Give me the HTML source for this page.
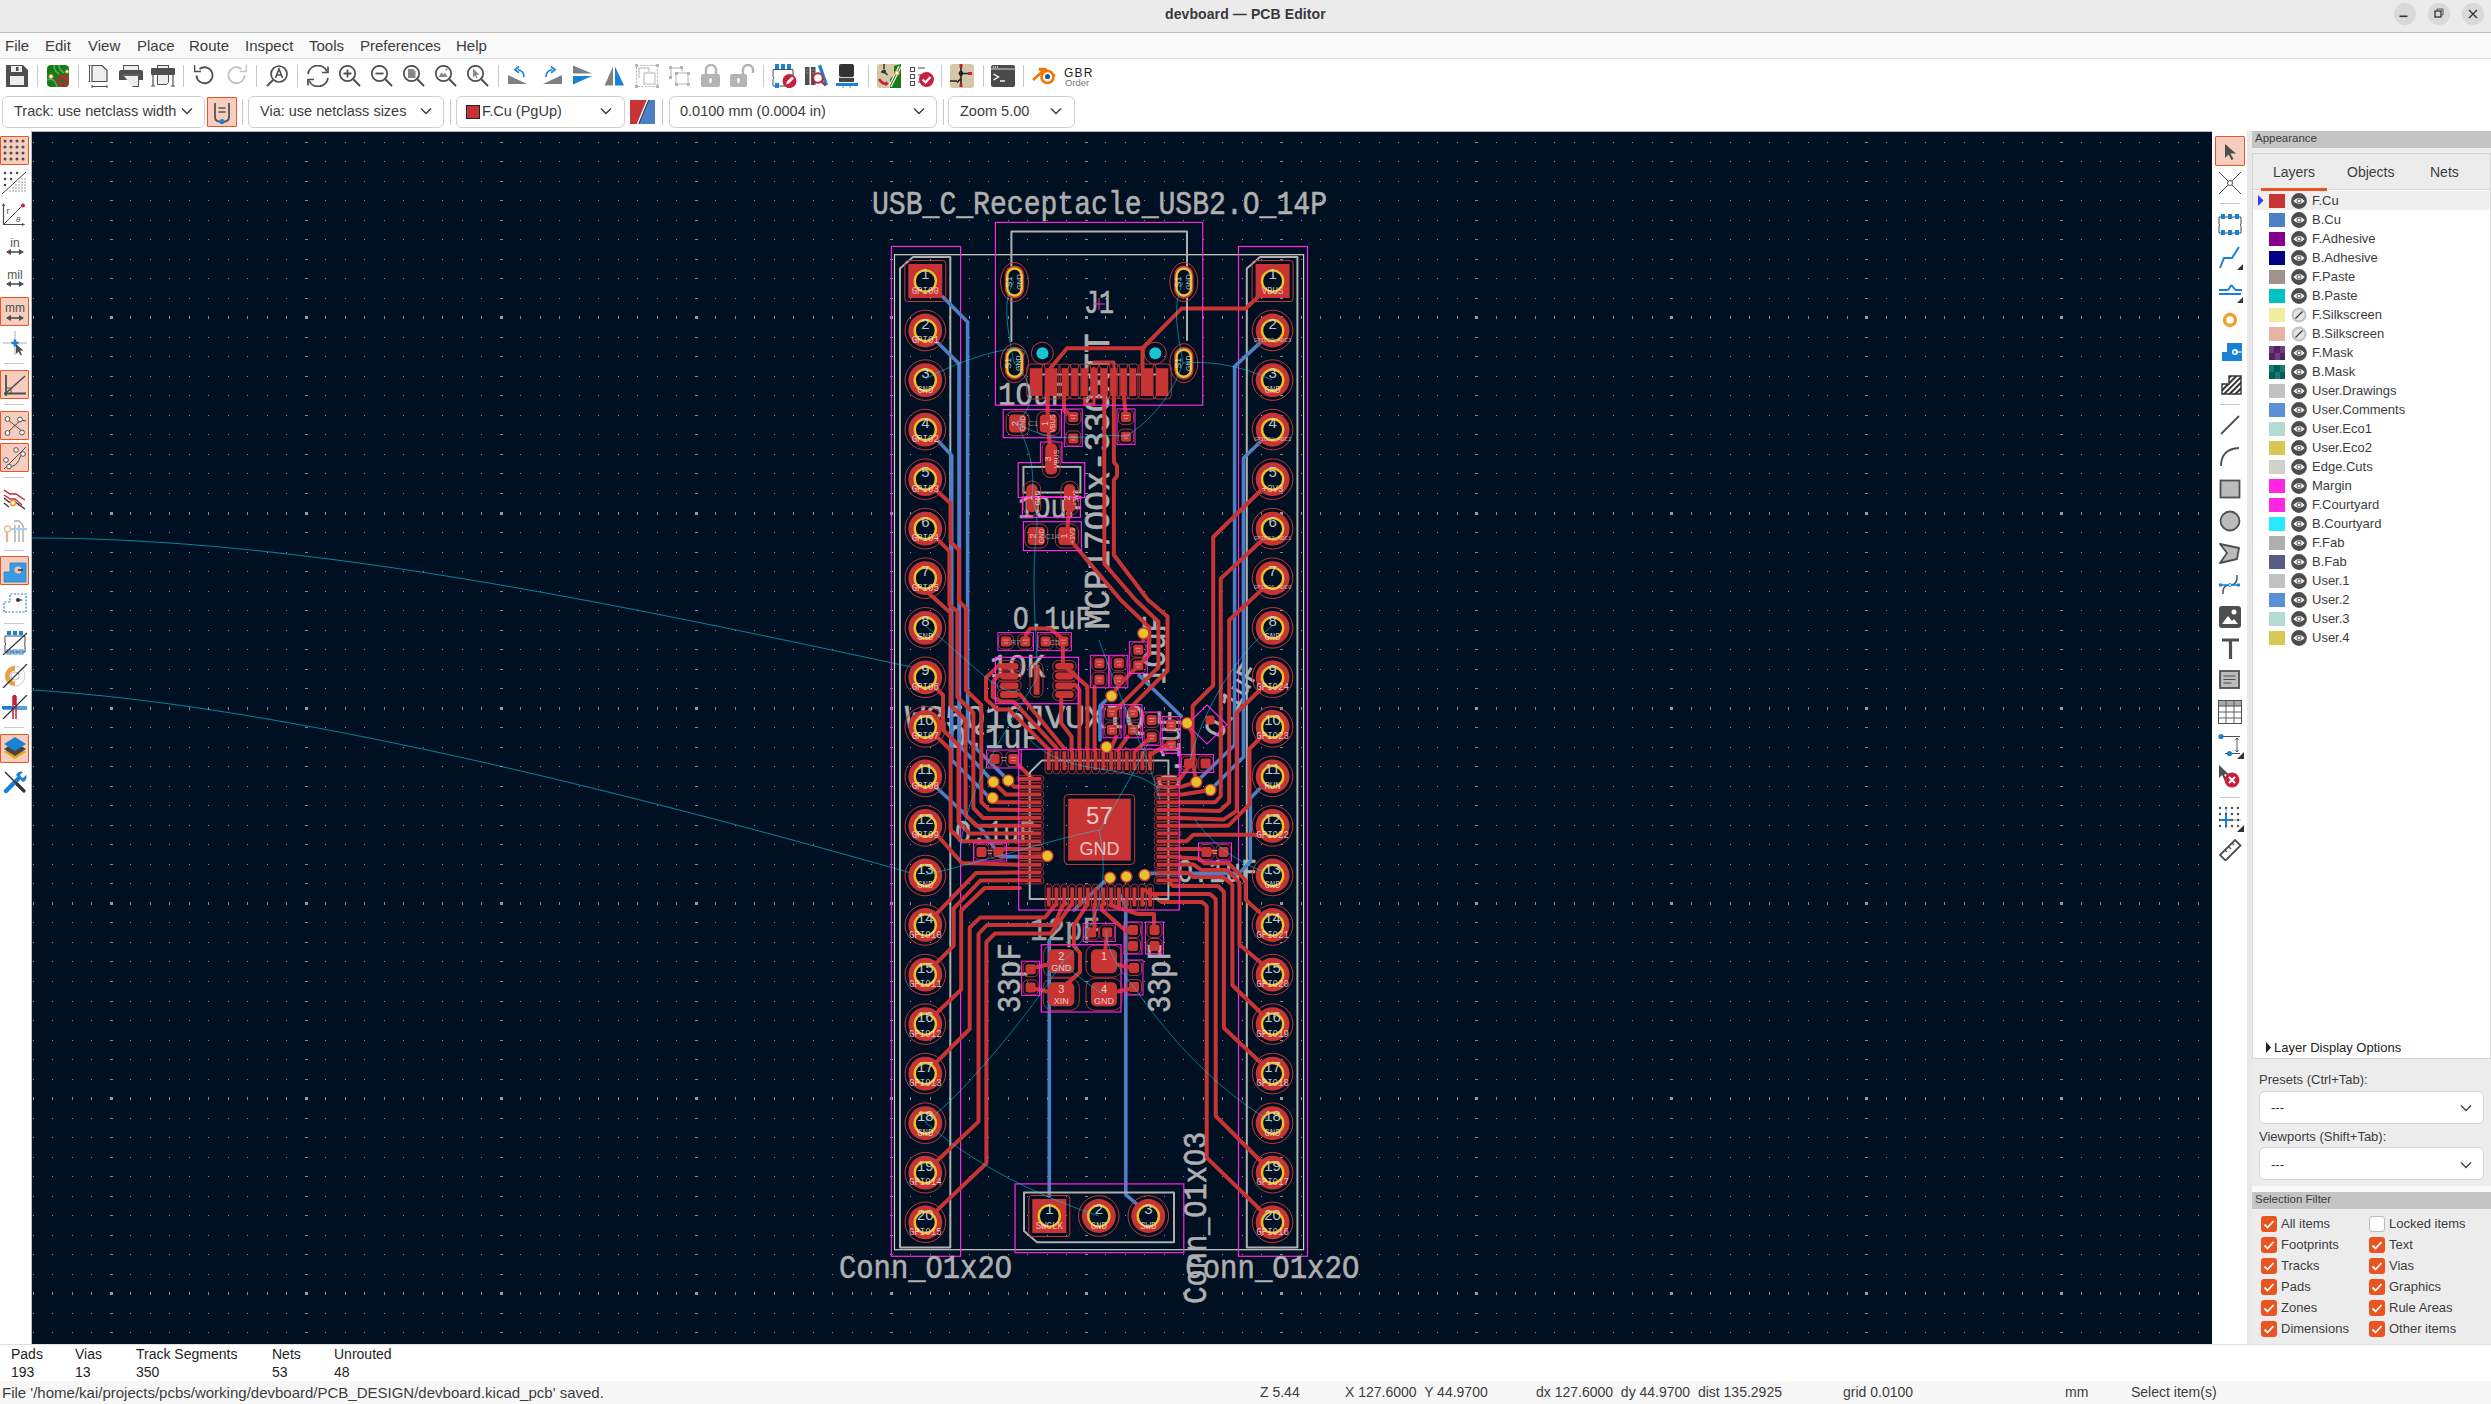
<!DOCTYPE html>
<html><head><meta charset="utf-8">
<style>
*{margin:0;padding:0;box-sizing:border-box}
html,body{width:2491px;height:1404px;overflow:hidden;background:#fafafa;font-family:"Liberation Sans",sans-serif;color:#3c3c3c}
.a{position:absolute}
.t{position:absolute;white-space:nowrap;line-height:1}
#titlebar{left:0;top:0;width:2491px;height:33px;background:#ebebeb;border-bottom:1px solid #bdbdbd}
#menubar{left:0;top:33px;width:2491px;height:25px;background:#f9f9f9}
.menu{font-size:15px;top:38px;color:#3c3c3c}
#tb1{left:0;top:58px;width:2491px;height:73px;background:#ffffff;border-top:1px solid #e0e0e0}
.sep{position:absolute;width:1px;background:#c8c8c8}
.combo{position:absolute;top:96px;height:32px;background:#fff;border:1px solid #cfcfcf;border-radius:6px}
.ctext{position:absolute;font-size:14.5px;top:104px;color:#3c3c3c;white-space:nowrap;line-height:1}
.chev{position:absolute;top:107px}
#canvas{left:32px;top:131px;width:2180px;height:1213px;background:#001023;border-top:1px solid #b8b8b8}
#ltb{left:0;top:131px;width:32px;height:1213px;background:#ffffff;border-right:1px solid #bdbdbd}
#rtb{left:2212px;top:131px;width:35px;height:1213px;background:#ffffff}
#rgap{left:2247px;top:131px;width:5px;height:1213px;background:#e8e8e8}
#panel{left:2252px;top:131px;width:239px;height:1213px;background:#fafafa}
#msgp{left:0;top:1344px;width:2491px;height:37px;background:#ffffff;border-top:1px solid #e0e0e0}
#status{left:0;top:1381px;width:2491px;height:23px;background:#f7f7f7}
.hl{position:absolute;background:#f6cdbf;border:1px solid #e95420;border-radius:1px}
.lyr{position:absolute;left:2312px;font-size:13px;color:#3c3c3c;white-space:nowrap;line-height:1}
.sw{position:absolute;left:2269px;width:16px;height:13px}
.eye{position:absolute;left:2291px;width:15px;height:15px}
.cb{position:absolute;width:16px;height:16px;border-radius:3px;background:#e95420}
.cbl{position:absolute;font-size:13px;color:#3c3c3c;white-space:nowrap;line-height:1}
.st{position:absolute;font-size:14px;top:1385px;color:#3c3c3c;white-space:nowrap;line-height:1}
.mp{position:absolute;font-size:14px;color:#1e1e1e;white-space:nowrap;line-height:1}
</style></head><body>
<!-- title bar -->
<div id="titlebar" class="a"></div>
<div class="t" style="left:1165px;top:7px;font-size:14px;font-weight:bold;color:#383838;letter-spacing:0.1px">devboard — PCB Editor</div>
<svg class="a" style="left:2380px;top:0" width="111" height="32">
 <circle cx="25" cy="14" r="11" fill="#d9d9d9"/><rect x="19.5" y="15.5" width="8" height="1.6" fill="#333"/>
 <circle cx="59" cy="14" r="11" fill="#d9d9d9"/><rect x="55" y="11" width="6" height="6" fill="none" stroke="#333" stroke-width="1.3"/><path d="M57 10V9h6v6h-1" fill="none" stroke="#333" stroke-width="0.8"/>
 <circle cx="93" cy="14" r="11" fill="#d9d9d9"/><path d="M89 10l8 8M97 10l-8 8" stroke="#333" stroke-width="1.4"/>
</svg>
<!-- menubar -->
<div id="menubar" class="a"></div>
<div class="t menu" style="left:5px">File</div>
<div class="t menu" style="left:45px">Edit</div>
<div class="t menu" style="left:88px">View</div>
<div class="t menu" style="left:137px">Place</div>
<div class="t menu" style="left:189px">Route</div>
<div class="t menu" style="left:245px">Inspect</div>
<div class="t menu" style="left:309px">Tools</div>
<div class="t menu" style="left:360px">Preferences</div>
<div class="t menu" style="left:456px">Help</div>
<!-- toolbars -->
<div id="tb1" class="a"></div>
<svg class="a" style="left:6px;top:65px" width="22" height="22" viewBox="0 0 22 22"><path d="M0 0h17l5 5v17H0z" fill="#4f4f4f"/><rect x="5" y="1" width="11" height="6" fill="#eee"/><rect x="10" y="2" width="2.5" height="4" fill="#4f4f4f"/><rect x="4" y="11" width="14" height="9" fill="#eee"/></svg>
<div class="sep" style="left:37px;top:65px;height:22px"></div>
<svg class="a" style="left:47px;top:65px" width="22" height="22" viewBox="0 0 22 22"><rect x="0" y="0" width="22" height="22" rx="4" fill="#1a7a1a"/><path d="M7 0q0 6 5 9M12 0q0 5 5 8" stroke="#4caf50" stroke-width="1.6" fill="none"/><path d="M0 15q8-3 10 7" stroke="#4caf50" stroke-width="1.5" fill="none"/><circle cx="4" cy="11.5" r="2" fill="#fff" stroke="#f0a030"/><circle cx="20" cy="6.5" r="1.6" fill="#fff" stroke="#f0a030"/><circle cx="16" cy="16" r="5" fill="none" stroke="#c8203a" stroke-width="3.6" stroke-dasharray="2.2 1.7"/><circle cx="16" cy="16" r="3.6" fill="none" stroke="#c8203a" stroke-width="2"/></svg>
<div class="sep" style="left:78px;top:65px;height:22px"></div>
<svg class="a" style="left:88px;top:65px" width="20" height="23" viewBox="0 0 20 23"><path d="M4 0.5h10l5 5V16.5H4z" fill="#eee" stroke="#4f4f4f" stroke-width="1.2"/><path d="M0.5 0.5h2M1.5 0.5v16M0.5 16.5h2M4 21.5h15M4 20v3M19 20v3" stroke="#4f4f4f" stroke-width="1"/></svg>
<svg class="a" style="left:119px;top:65px" width="24" height="22" viewBox="0 0 24 22"><rect x="4.5" y="0.5" width="15" height="6" fill="#eee" stroke="#4f4f4f"/><path d="M0 7q0-2 2-2h20q2 0 2 2v8H0z" fill="#4f4f4f"/><path d="M4.5 10.5h15v11H16l-2.5 0" fill="#eee" stroke="#4f4f4f"/><path d="M3 10h18" stroke="#888" stroke-width="0.6"/></svg>
<svg class="a" style="left:151px;top:65px" width="24" height="22" viewBox="0 0 24 22"><rect x="6.5" y="0.5" width="11" height="3" fill="#eee" stroke="#4f4f4f"/><rect x="0" y="3" width="24" height="7" rx="1" fill="#4f4f4f"/><path d="M6.5 9.5h11v8l-2 2h-9z" fill="#eee" stroke="#4f4f4f"/><path d="M2 8v13M22 8v13M0 21h4M20 21h4" stroke="#4f4f4f" stroke-width="1.2"/></svg>
<div class="sep" style="left:183px;top:65px;height:22px"></div>
<svg class="a" style="left:194px;top:65px" width="20" height="22" viewBox="0 0 20 22"><path d="M2.5 10.5A8 8 0 1 0 5.5 4" fill="none" stroke="#4f4f4f" stroke-width="1.8"/><path d="M0.5 0v6.5h6.5" fill="none" stroke="#4f4f4f" stroke-width="1.6"/></svg>
<svg class="a" style="left:227px;top:65px" width="20" height="22" viewBox="0 0 20 22"><path d="M17.5 10.5A8 8 0 1 1 14.5 4" fill="none" stroke="#c2c2c2" stroke-width="1.8"/><path d="M19.5 0v6.5H13" fill="none" stroke="#c2c2c2" stroke-width="1.6"/></svg>
<div class="sep" style="left:256px;top:65px;height:22px"></div>
<svg class="a" style="left:266px;top:65px" width="22" height="22" viewBox="0 0 22 22"><circle cx="13" cy="9" r="8" fill="none" stroke="#4f4f4f" stroke-width="1.7"/><path d="M7 15L1 21" stroke="#4f4f4f" stroke-width="2"/><path d="M9.5 13L13 4l3.5 9M10.7 10h4.6" fill="none" stroke="#4f4f4f" stroke-width="1.6"/></svg>
<div class="sep" style="left:297px;top:65px;height:22px"></div>
<svg class="a" style="left:307px;top:65px" width="22" height="22" viewBox="0 0 22 22"><path d="M1 9A10 10 0 0 1 20 6.5M21 13A10 10 0 0 1 2 15.5" fill="none" stroke="#4f4f4f" stroke-width="1.8"/><path d="M21 1.5v6h-6M1 20.5v-6h6" fill="none" stroke="#4f4f4f" stroke-width="1.7"/></svg>
<svg class="a" style="left:339px;top:65px" width="22" height="22" viewBox="0 0 22 22"><circle cx="8.5" cy="8.5" r="7.7" fill="none" stroke="#4f4f4f" stroke-width="1.7"/><path d="M14 14l7 7" stroke="#4f4f4f" stroke-width="2"/><path d="M8.5 4.5v8M4.5 8.5h8" stroke="#4f4f4f" stroke-width="1.8"/></svg>
<svg class="a" style="left:371px;top:65px" width="22" height="22" viewBox="0 0 22 22"><circle cx="8.5" cy="8.5" r="7.7" fill="none" stroke="#4f4f4f" stroke-width="1.7"/><path d="M14 14l7 7" stroke="#4f4f4f" stroke-width="2"/><path d="M4.5 8.5h8" stroke="#4f4f4f" stroke-width="1.8"/></svg>
<svg class="a" style="left:403px;top:65px" width="22" height="22" viewBox="0 0 22 22"><circle cx="8.5" cy="8.5" r="7.7" fill="none" stroke="#4f4f4f" stroke-width="1.7"/><path d="M14 14l7 7" stroke="#4f4f4f" stroke-width="2"/><path d="M5 4h5l2.5 2.5V13H5z" fill="#888"/></svg>
<svg class="a" style="left:435px;top:65px" width="22" height="22" viewBox="0 0 22 22"><circle cx="8.5" cy="8.5" r="7.7" fill="none" stroke="#4f4f4f" stroke-width="1.7"/><path d="M14 14l7 7" stroke="#4f4f4f" stroke-width="2"/><path d="M3.5 12l3-4.5 2 2 1.5-2 2.5 4.5z" fill="#888"/><circle cx="11.5" cy="4.5" r="1" fill="#888"/></svg>
<svg class="a" style="left:467px;top:65px" width="22" height="22" viewBox="0 0 22 22"><circle cx="8.5" cy="8.5" r="7.7" fill="none" stroke="#4f4f4f" stroke-width="1.7"/><path d="M14 14l7 7" stroke="#4f4f4f" stroke-width="2"/><path d="M6 3.5v9l2-2 1.5 3 1.2-.6-1.5-3 3-.3z" fill="#888"/></svg>
<div class="sep" style="left:498px;top:65px;height:22px"></div>
<svg class="a" style="left:508px;top:66px" width="21" height="20" viewBox="0 0 21 20"><path d="M0 9l19 9H0z" fill="#808080"/><path d="M16 11q0-6-6-7.5" fill="none" stroke="#1a82d4" stroke-width="1.7"/><path d="M11 0.5L7 3.8l4 3" fill="none" stroke="#1a82d4" stroke-width="1.7"/></svg>
<svg class="a" style="left:541px;top:66px" width="21" height="20" viewBox="0 0 21 20"><path d="M21 9L2 18h19z" fill="#808080"/><path d="M5 11q0-6 6-7.5" fill="none" stroke="#1a82d4" stroke-width="1.7"/><path d="M10 0.5L14 3.8l-4 3" fill="none" stroke="#1a82d4" stroke-width="1.7"/></svg>
<svg class="a" style="left:573px;top:65px" width="20" height="20" viewBox="0 0 20 20"><path d="M0 0.5l19 8H0z" fill="#808080"/><path d="M0 11h19L0 19.5z" fill="#1a82d4"/></svg>
<svg class="a" style="left:604px;top:66px" width="21" height="20" viewBox="0 0 21 20"><path d="M9 0.5v19H0.5z" fill="#808080"/><path d="M11 0.5v19h9z" fill="#1a82d4"/></svg>
<svg class="a" style="left:635px;top:64px" width="24" height="24" viewBox="0 0 24 24"><rect x="1.5" y="1.5" width="21" height="21" fill="none" stroke="#b4b4b4" stroke-dasharray="2 1.5"/><rect x="0" y="0" width="3" height="3" fill="#b4b4b4"/><rect x="21" y="0" width="3" height="3" fill="#b4b4b4"/><rect x="0" y="21" width="3" height="3" fill="#b4b4b4"/><rect x="21" y="21" width="3" height="3" fill="#b4b4b4"/><path d="M4 14V4h10v4" fill="none" stroke="#b4b4b4" stroke-width="1"/><rect x="9" y="9" width="11" height="11" fill="none" stroke="#b4b4b4"/></svg>
<svg class="a" style="left:669px;top:66px" width="21" height="20" viewBox="0 0 21 20"><path d="M2 11V2h11v3" fill="none" stroke="#b4b4b4"/><rect x="7" y="7" width="12" height="11" fill="none" stroke="#b4b4b4"/><rect x="0" y="0" width="3" height="3" fill="#b4b4b4"/><rect x="11" y="0" width="3" height="3" fill="#b4b4b4"/><rect x="0" y="10" width="3" height="3" fill="#b4b4b4"/><rect x="6" y="6" width="3" height="3" fill="#b4b4b4"/><rect x="18" y="6" width="3" height="3" fill="#b4b4b4"/><rect x="6" y="17" width="3" height="3" fill="#b4b4b4"/><rect x="18" y="17" width="3" height="3" fill="#b4b4b4"/></svg>
<svg class="a" style="left:701px;top:64px" width="20" height="24" viewBox="0 0 20 24"><path d="M5 10V6a5 5 0 0 1 10 0v4" fill="none" stroke="#b4b4b4" stroke-width="2.4"/><rect x="0" y="10" width="19" height="13" rx="2" fill="#b4b4b4"/><path d="M9.5 19v-3" stroke="#fff" stroke-width="2"/><circle cx="9.5" cy="15.5" r="1.5" fill="#fff"/></svg>
<svg class="a" style="left:730px;top:64px" width="25" height="24" viewBox="0 0 25 24"><path d="M13 10V6a5 5 0 0 1 10 0v3" fill="none" stroke="#b4b4b4" stroke-width="2.4"/><rect x="0" y="10" width="17" height="13" rx="2" fill="#b4b4b4"/><path d="M8.5 19v-3" stroke="#fff" stroke-width="2"/><circle cx="8.5" cy="15.5" r="1.5" fill="#fff"/></svg>
<div class="sep" style="left:763px;top:65px;height:22px"></div>
<svg class="a" style="left:772px;top:64px" width="25" height="24" viewBox="0 0 25 24"><path d="M1 5.5h20V13q-1 1 0 2v7H1v-6.5q2-1.5 0-3z" fill="none" stroke="#4f4f4f" stroke-width="1"/><rect x="3" y="0" width="4" height="5" fill="#1a82d4"/><rect x="9" y="0" width="4" height="5" fill="#1a82d4"/><rect x="15" y="0" width="4" height="5" fill="#1a82d4"/><rect x="3" y="19" width="4" height="5" fill="#1a82d4"/><rect x="15" y="19" width="4" height="5" fill="#1a82d4"/><circle cx="17.5" cy="17" r="7" fill="#c8203a"/><path d="M14 20.5l1-3 5-5 2 2-5 5z" fill="#fff"/></svg>
<svg class="a" style="left:805px;top:64px" width="24" height="24" viewBox="0 0 24 24"><rect x="0" y="3" width="4.5" height="18" fill="#4f4f4f"/><rect x="6" y="3" width="4.5" height="18" fill="#4f4f4f"/><path d="M1 6h2.5M1 9h2.5M7 6h2.5M7 9h2.5" stroke="#bbb" stroke-width="0.6"/><path d="M13 2l3-1.5 7 20-3 1.5z" fill="#1a82d4"/><circle cx="13" cy="14" r="4.8" fill="#fff" stroke="#c8203a" stroke-width="2"/><path d="M16.5 17.5l4 4" stroke="#c8203a" stroke-width="2.4"/></svg>
<svg class="a" style="left:836px;top:64px" width="24" height="24" viewBox="0 0 24 24"><rect x="3" y="0" width="15" height="13" rx="2" fill="#333"/><rect x="3" y="14" width="15" height="4" fill="#444"/><path d="M3 13.6h15" stroke="#aaa" stroke-width="0.6"/><rect x="0" y="19" width="22" height="3" fill="#1a82d4"/><path d="M7 22v2M14 22v2" stroke="#888"/></svg>
<div class="sep" style="left:868px;top:65px;height:22px"></div>
<svg class="a" style="left:877px;top:64px" width="24" height="24" viewBox="0 0 24 24"><rect x="0" y="0" width="24" height="24" rx="3" fill="#d4c8a8"/><path d="M13 24V15l4-4V2l7-2v24z" fill="#1a7a1a"/><path d="M12 22L22 2M14 23L24 3" stroke="#fff" stroke-width="1.2"/><circle cx="20" cy="9" r="2" fill="#fff" stroke="#f0a030" stroke-width="1.2"/><path d="M7 0v5M4 8h3.5l3 3" stroke="#333" stroke-width="1.5" fill="none"/><circle cx="7" cy="7.5" r="2" fill="#333"/><path d="M2 15q3 5 8 5" stroke="#c8203a" stroke-width="2.6" fill="none"/><path d="M9 17l3 3-4 2" fill="#c8203a"/></svg>
<svg class="a" style="left:910px;top:64px" width="24" height="24" viewBox="0 0 24 24"><rect x="0.5" y="3.5" width="4" height="4" fill="none" stroke="#4f4f4f"/><rect x="0.5" y="10.5" width="4" height="4" fill="none" stroke="#4f4f4f"/><rect x="0.5" y="17.5" width="4" height="4" fill="none" stroke="#4f4f4f"/><path d="M8 4h7M8 11h3M8 18h3" stroke="#4f4f4f"/><circle cx="16.5" cy="15.5" r="7.5" fill="#c8203a"/><path d="M12.5 15.5l3 3 5-5.5" fill="none" stroke="#fff" stroke-width="2.2"/></svg>
<div class="sep" style="left:941px;top:65px;height:22px"></div>
<svg class="a" style="left:950px;top:64px" width="24" height="24" viewBox="0 0 24 24"><rect x="0" y="0" width="24" height="24" rx="3" fill="#d4c8a8"/><path d="M11 3v18M11 9.5h7M11 14.5l-4 4M0 17h7" stroke="#222" stroke-width="1.6"/><circle cx="11" cy="9.5" r="2.4" fill="#222"/><rect x="9.5" y="0" width="3" height="3.5" fill="#c8203a"/><rect x="18" y="8" width="4" height="3" fill="#c8203a"/><rect x="9.5" y="20" width="3" height="3" fill="#c8203a"/></svg>
<div class="sep" style="left:983px;top:65px;height:22px"></div>
<svg class="a" style="left:991px;top:65px" width="24" height="22" viewBox="0 0 24 22"><rect x="0" y="0" width="24" height="22" rx="2" fill="#4a4a4a"/><path d="M0 4h24" stroke="#fafafa" stroke-width="0.8"/><circle cx="2.5" cy="2" r=".7" fill="#fff"/><circle cx="4.5" cy="2" r=".7" fill="#fff"/><circle cx="6.5" cy="2" r=".7" fill="#fff"/><path d="M2.5 9l5 3-5 3" fill="none" stroke="#fff" stroke-width="1.4"/><path d="M9 16h5" stroke="#fff" stroke-width="1.4"/></svg>
<div class="sep" style="left:1023px;top:65px;height:22px"></div>
<svg class="a" style="left:1032px;top:66px" width="25" height="20" viewBox="0 0 25 20"><path d="M1 14L11 5 7 3h6l10 7" fill="none" stroke="#f07800" stroke-width="2.6"/><circle cx="15.5" cy="11" r="6" fill="#fff" stroke="#f07800" stroke-width="2.6"/><circle cx="15.5" cy="10.5" r="2.6" fill="#265787"/></svg>
<div class="t" style="left:1064px;top:67px;font-size:12px;color:#222;letter-spacing:1.2px">GBR</div>
<div class="t" style="left:1065px;top:78px;font-size:9.5px;color:#777">Order</div>

<div class="combo" style="left:2px;width:203px"></div>
<div class="ctext" style="left:14px">Track: use netclass width</div><svg class="chev" style="left:181px" width="12" height="8"><path d="M1 1.5l5 5 5-5" fill="none" stroke="#3c3c3c" stroke-width="1.4"/></svg>
<div class="hl" style="left:207px;top:97px;width:30px;height:30px"></div>
<svg class="a" style="left:207px;top:97px" width="30" height="30"><path d="M8 6v14q0 5 7 5t7-5V6" fill="none" stroke="#555" stroke-width="1.8"/><path d="M11.5 11h7M11.5 15h7" stroke="#555" stroke-width="1.5"/><circle cx="15" cy="24.5" r="2.6" fill="#1a82d4"/></svg>
<div class="sep" style="left:242px;top:99px;height:26px"></div>
<div class="combo" style="left:248px;width:196px"></div>
<div class="ctext" style="left:260px">Via: use netclass sizes</div><svg class="chev" style="left:420px" width="12" height="8"><path d="M1 1.5l5 5 5-5" fill="none" stroke="#3c3c3c" stroke-width="1.4"/></svg>
<div class="sep" style="left:450px;top:99px;height:26px"></div>
<div class="combo" style="left:456px;width:169px"></div>
<div class="a" style="left:466px;top:105px;width:14px;height:14px;background:#c83434;border:1px solid #222"></div>
<div class="ctext" style="left:482px">F.Cu (PgUp)</div><svg class="chev" style="left:600px" width="12" height="8"><path d="M1 1.5l5 5 5-5" fill="none" stroke="#3c3c3c" stroke-width="1.4"/></svg>
<svg class="a" style="left:630px;top:100px" width="25" height="24"><path d="M0 0h17L7 24H0z" fill="#c83434"/><path d="M18 0h7v24H8z" fill="#4d7fc4"/><path d="M17.5 0L7.5 24" stroke="#fff" stroke-width="1.2"/><path d="M18.8 0L8.8 24" stroke="#222" stroke-width="0.8"/></svg>
<div class="sep" style="left:662px;top:99px;height:26px"></div>
<div class="combo" style="left:669px;width:268px"></div>
<div class="ctext" style="left:680px">0.0100 mm (0.0004 in)</div><svg class="chev" style="left:913px" width="12" height="8"><path d="M1 1.5l5 5 5-5" fill="none" stroke="#3c3c3c" stroke-width="1.4"/></svg>
<div class="sep" style="left:943px;top:99px;height:26px"></div>
<div class="combo" style="left:948px;width:127px"></div>
<div class="ctext" style="left:960px">Zoom 5.00</div><svg class="chev" style="left:1050px" width="12" height="8"><path d="M1 1.5l5 5 5-5" fill="none" stroke="#3c3c3c" stroke-width="1.4"/></svg>

<!-- left toolbar -->
<div id="ltb" class="a"></div>
<div class="hl" style="left:0px;top:136px;width:29px;height:29px"></div>
<svg class="a" style="left:3px;top:139px" width="24" height="24" viewBox="0 0 24 24"><circle cx="2" cy="2" r="1.5" fill="#4f4f4f"/><circle cx="2" cy="8" r="1.5" fill="#4f4f4f"/><circle cx="2" cy="14" r="1.5" fill="#4f4f4f"/><circle cx="2" cy="20" r="1.5" fill="#4f4f4f"/><circle cx="8" cy="2" r="1.5" fill="#4f4f4f"/><circle cx="8" cy="8" r="1.5" fill="#4f4f4f"/><circle cx="8" cy="14" r="1.5" fill="#4f4f4f"/><circle cx="8" cy="20" r="1.5" fill="#4f4f4f"/><circle cx="14" cy="2" r="1.5" fill="#4f4f4f"/><circle cx="14" cy="8" r="1.5" fill="#4f4f4f"/><circle cx="14" cy="14" r="1.5" fill="#4f4f4f"/><circle cx="14" cy="20" r="1.5" fill="#4f4f4f"/><circle cx="20" cy="2" r="1.5" fill="#4f4f4f"/><circle cx="20" cy="8" r="1.5" fill="#4f4f4f"/><circle cx="20" cy="14" r="1.5" fill="#4f4f4f"/><circle cx="20" cy="20" r="1.5" fill="#4f4f4f"/></svg>
<svg class="a" style="left:2px;top:171px" width="24" height="24" viewBox="0 0 24 24"><path d="M0 23L24 1" stroke="#444" stroke-width="1"/><circle cx="3" cy="2" r="1.3" fill="#4f4f4f"/><circle cx="9" cy="2" r="1.3" fill="#4f4f4f"/><circle cx="15" cy="2" r="1.3" fill="#4f4f4f"/><circle cx="3" cy="8" r="1.3" fill="#4f4f4f"/><circle cx="9" cy="8" r="1.3" fill="#4f4f4f"/><circle cx="3" cy="14" r="1.3" fill="#444"/><circle cx="8" cy="20" r="0.7" fill="#777"/><circle cx="11" cy="17" r="0.7" fill="#777"/><circle cx="11" cy="20" r="0.7" fill="#777"/><circle cx="14" cy="14" r="0.7" fill="#777"/><circle cx="14" cy="17" r="0.7" fill="#777"/><circle cx="14" cy="20" r="0.7" fill="#777"/><circle cx="17" cy="11" r="0.7" fill="#777"/><circle cx="17" cy="14" r="0.7" fill="#777"/><circle cx="17" cy="17" r="0.7" fill="#777"/><circle cx="17" cy="20" r="0.7" fill="#777"/><circle cx="20" cy="8" r="0.7" fill="#777"/><circle cx="20" cy="11" r="0.7" fill="#777"/><circle cx="20" cy="14" r="0.7" fill="#777"/><circle cx="20" cy="17" r="0.7" fill="#777"/><circle cx="20" cy="20" r="0.7" fill="#777"/><circle cx="23" cy="8" r="0.7" fill="#777"/><circle cx="23" cy="11" r="0.7" fill="#777"/><circle cx="23" cy="14" r="0.7" fill="#777"/><circle cx="23" cy="17" r="0.7" fill="#777"/><circle cx="23" cy="20" r="0.7" fill="#777"/></svg>
<svg class="a" style="left:2px;top:203px" width="24" height="23" viewBox="0 0 24 23"><path d="M1.5 1v20.5h21" fill="none" stroke="#4f4f4f" stroke-width="1.2"/><path d="M0 3l1.5-3 1.5 3M20 20l3 1.5-3 1.5" fill="#4f4f4f"/><path d="M2 21L20 3" stroke="#4f4f4f" stroke-width="1"/><circle cx="21" cy="2.5" r="2" fill="#c8203a"/><text x="4.5" y="11" font-size="9" fill="#4f4f4f" font-family="Liberation Sans">r</text><text x="14" y="19" font-size="8" font-style="italic" fill="#4f4f4f" font-family="Liberation Sans">θ</text></svg>
<svg class="a" style="left:3px;top:237px" width="24" height="20" viewBox="0 0 24 20"><text x="12" y="10" font-size="12" text-anchor="middle" fill="#4f4f4f" font-family="Liberation Sans">in</text><path d="M4 15h16" stroke="#4f4f4f" stroke-width="1.6"/><path d="M3 15l5-3v6zM21 15l-5-3v6z" fill="#4f4f4f"/></svg>
<svg class="a" style="left:3px;top:269px" width="24" height="20" viewBox="0 0 24 20"><text x="12" y="10" font-size="12" text-anchor="middle" fill="#4f4f4f" font-family="Liberation Sans">mil</text><path d="M4 15h16" stroke="#4f4f4f" stroke-width="1.6"/><path d="M3 15l5-3v6zM21 15l-5-3v6z" fill="#4f4f4f"/></svg>
<div class="hl" style="left:0px;top:297px;width:29px;height:29px"></div>
<svg class="a" style="left:3px;top:300px" width="24" height="24" viewBox="0 0 24 24"><text x="12" y="12" font-size="12" text-anchor="middle" fill="#4f4f4f" font-family="Liberation Sans">mm</text><path d="M4 18h16" stroke="#4f4f4f" stroke-width="1.6"/><path d="M3 18l5-3v6zM21 18l-5-3v6z" fill="#4f4f4f"/></svg>
<svg class="a" style="left:3px;top:331px" width="24" height="24" viewBox="0 0 24 24"><path d="M12 0v24M0 12h24" stroke="#999" stroke-width="0.8"/><path d="M8.5 12h7M12 8.5v7" stroke="#1a82d4" stroke-width="2.6"/><path d="M13 13l0 10 2.5-2.5 2 4 1.5-.8-2-4 3.5-.2z" fill="#4f4f4f"/></svg>
<div class="a" style="left:4px;top:363px;width:20px;height:1px;background:#c8c8c8"></div>
<div class="hl" style="left:0px;top:370px;width:29px;height:29px"></div>
<svg class="a" style="left:3px;top:373px" width="24" height="24" viewBox="0 0 24 24"><path d="M3 2v21M1 20.5h22" stroke="#4f4f4f" stroke-width="1.8"/><path d="M3 20L22 3" stroke="#4f4f4f" stroke-width="1.6"/><path d="M3 15h5v6" fill="none" stroke="#4f4f4f" stroke-width="1"/></svg>
<div class="a" style="left:4px;top:404px;width:20px;height:1px;background:#c8c8c8"></div>
<div class="hl" style="left:0px;top:411px;width:29px;height:29px"></div>
<svg class="a" style="left:3px;top:414px" width="24" height="24" viewBox="0 0 24 24"><path d="M4 5L20 18M4 19L18 6M18 6l5 1" stroke="#4f4f4f" stroke-width="1"/><circle cx="4.5" cy="5" r="2.4" fill="#fff" stroke="#4f4f4f"/><circle cx="17" cy="5.5" r="2.4" fill="#fff" stroke="#4f4f4f"/><circle cx="4.5" cy="19" r="2.4" fill="#fff" stroke="#4f4f4f"/><circle cx="19" cy="18.5" r="2.4" fill="#fff" stroke="#4f4f4f"/></svg>
<div class="hl" style="left:0px;top:443px;width:29px;height:29px"></div>
<svg class="a" style="left:3px;top:446px" width="24" height="24" viewBox="0 0 24 24"><path d="M1 23L23 1" stroke="#4f4f4f" stroke-width="1"/><path d="M4 20q10 3 14-11" fill="none" stroke="#4f4f4f" stroke-width="1"/><circle cx="3" cy="14" r="2.3" fill="#fff" stroke="#4f4f4f"/><circle cx="13" cy="4" r="2.3" fill="#fff" stroke="#4f4f4f"/><circle cx="6" cy="20.5" r="2.3" fill="#fff" stroke="#4f4f4f"/><circle cx="20" cy="8" r="2.3" fill="#fff" stroke="#4f4f4f"/></svg>
<div class="a" style="left:4px;top:477px;width:20px;height:1px;background:#c8c8c8"></div>
<svg class="a" style="left:3px;top:486px" width="24" height="24" viewBox="0 0 24 24"><path d="M1 4l6 4h6l9 6M1 9l6 4h5l7 6" fill="none" stroke="#c8203a" stroke-width="1.4"/><path d="M1 12l5 4h6l10 7M1 17l5 4" fill="none" stroke="#333" stroke-width="1.4"/><circle cx="10" cy="17" r="2.6" fill="#fff" stroke="#f0a030" stroke-width="1.6"/></svg>
<svg class="a" style="left:3px;top:518px" width="24" height="24" viewBox="0 0 24 24"><path d="M11 3h5l4 4v17M14 3h2" fill="none" stroke="#aaa" stroke-width="1.4"/><path d="M16 7v17M12 7v17" stroke="#aaa" stroke-width="1.4"/><path d="M7 11h17" stroke="#a8cef0" stroke-width="2.2"/><path d="M4 14v10" stroke="#f0a8b0" stroke-width="2.2"/><circle cx="4.5" cy="11" r="3" fill="#fff" stroke="#f0c080" stroke-width="1.4"/></svg>
<div class="a" style="left:4px;top:550px;width:20px;height:1px;background:#c8c8c8"></div>
<div class="hl" style="left:0px;top:556px;width:29px;height:29px"></div>
<svg class="a" style="left:3px;top:559px" width="24" height="24" viewBox="0 0 24 24"><path d="M1 23V13h6V4h16v19z" fill="#3a9ce0" stroke="#1a82d4" stroke-width="0.8"/><circle cx="15" cy="11" r="3.5" fill="#f4c4b0"/><path d="M15 11h5" stroke="#333" stroke-width="1.6"/></svg>
<svg class="a" style="left:3px;top:591px" width="24" height="22" viewBox="0 0 24 22"><path d="M1 21V11h6V3h16v18z" fill="none" stroke="#1a82d4" stroke-width="1.2" stroke-dasharray="2 1.5"/><circle cx="15" cy="9" r="2" fill="#333"/><path d="M15 9h4" stroke="#333" stroke-width="1.2"/></svg>
<div class="a" style="left:4px;top:623px;width:20px;height:1px;background:#c8c8c8"></div>
<svg class="a" style="left:2px;top:631px" width="26" height="24" viewBox="0 0 26 24"><path d="M3 5h20v7q-1 1 0 2v7H3v-7q2-1 0-2z" fill="none" stroke="#333" stroke-width="0.9"/><rect x="5" y="0" width="4" height="4" fill="#1a82d4"/><rect x="11" y="0" width="4" height="4" fill="#1a82d4"/><rect x="17" y="0" width="4" height="4" fill="#1a82d4"/><rect x="5" y="19" width="4" height="4" fill="none" stroke="#1a82d4"/><rect x="11" y="19" width="4" height="4" fill="none" stroke="#1a82d4"/><rect x="17" y="19" width="4" height="4" fill="none" stroke="#1a82d4"/><path d="M1 24L25 2" stroke="#333" stroke-width="1.2"/></svg>
<svg class="a" style="left:2px;top:664px" width="26" height="24" viewBox="0 0 26 24"><circle cx="13" cy="12" r="10" fill="#f0a030"/><circle cx="13" cy="12" r="5.5" fill="#fff" stroke="#bbb"/><path d="M13 2a10 10 0 0 1 0 20" fill="#fff"/><circle cx="13" cy="12" r="10" fill="none" stroke="#bbb" stroke-width="0.6"/><circle cx="13" cy="12" r="4" fill="#fff" stroke="#bbb"/><path d="M1 24L25 0" stroke="#333" stroke-width="1.2"/></svg>
<svg class="a" style="left:2px;top:695px" width="26" height="24" viewBox="0 0 26 24"><path d="M1 12h24M1 14h24" stroke="#1a82d4" stroke-width="1.5"/><path d="M0 12.5h10" stroke="#1a82d4" stroke-width="3"/><path d="M11 1v23M14 1v23" stroke="#c8203a" stroke-width="1.5"/><path d="M12.5 0v10" stroke="#c8203a" stroke-width="3"/><path d="M1 24L25 0" stroke="#333" stroke-width="1.2"/></svg>
<div class="a" style="left:4px;top:727px;width:20px;height:1px;background:#c8c8c8"></div>
<div class="hl" style="left:0px;top:734px;width:29px;height:29px"></div>
<svg class="a" style="left:3px;top:737px" width="24" height="24" viewBox="0 0 24 24"><path d="M12 8l11 7-11 7-11-7z" fill="#f0a010"/><path d="M12 5l11 7-11 7-11-7z" fill="#444"/><path d="M12 0l11 7-11 7-11-7z" fill="#1a82d4"/></svg>
<svg class="a" style="left:3px;top:770px" width="24" height="24" viewBox="0 0 24 24"><path d="M3 21L15 9" stroke="#1a82d4" stroke-width="4.5" stroke-linecap="round"/><path d="M13 5a5 5 0 0 1 7-3l-3 3 1 2 2 1 3-3a5 5 0 0 1-3 7z" fill="#1a82d4"/><path d="M2 2l11 11" stroke="#333" stroke-width="1.4"/><path d="M14 14l7 7" stroke="#333" stroke-width="3.2" stroke-linecap="round"/></svg>
<!-- canvas -->
<div id="canvas" class="a"></div>
<svg class="a" style="left:32px;top:131px" width="2180" height="1213" viewBox="32 131 2180 1213"><path d="M33 142.5h1m18 0h1m19 0h1m18 0h1m38 0h1m19 0h1m18 0h1m19 0h1m18 0h1m19 0h1m18 0h1m19 0h1m18 0h1m38 0h1m19 0h1m18 0h1m19 0h1m18 0h1m19 0h1m18 0h1m19 0h1m18 0h1m38 0h1m19 0h1m18 0h1m19 0h1m18 0h1m19 0h1m18 0h1m19 0h1m18 0h1m38 0h1m19 0h1m18 0h1m19 0h1m18 0h1m19 0h1m18 0h1m19 0h1m18 0h1m38 0h1m19 0h1m18 0h1m19 0h1m18 0h1m19 0h1m18 0h1m19 0h1m18 0h1m38 0h1m19 0h1m18 0h1m19 0h1m18 0h1m19 0h1m18 0h1m19 0h1m18 0h1m39 0h1m18 0h1m19 0h1m18 0h1m19 0h1m18 0h1m19 0h1m18 0h1m19 0h1m38 0h1m18 0h1m19 0h1m18 0h1m19 0h1m18 0h1m19 0h1m18 0h1m19 0h1m38 0h1m18 0h1m19 0h1m18 0h1m19 0h1m18 0h1m19 0h1m18 0h1m19 0h1m38 0h1m18 0h1m19 0h1m18 0h1m19 0h1m18 0h1m19 0h1m18 0h1m19 0h1m38 0h1m18 0h1m19 0h1m18 0h1m19 0h1m18 0h1m19 0h1M33 161.5h1m18 0h1m19 0h1m18 0h1m38 0h1m19 0h1m18 0h1m19 0h1m18 0h1m19 0h1m18 0h1m19 0h1m18 0h1m38 0h1m19 0h1m18 0h1m19 0h1m18 0h1m19 0h1m18 0h1m19 0h1m18 0h1m38 0h1m19 0h1m18 0h1m19 0h1m18 0h1m19 0h1m18 0h1m19 0h1m18 0h1m38 0h1m19 0h1m18 0h1m19 0h1m18 0h1m19 0h1m18 0h1m19 0h1m18 0h1m38 0h1m19 0h1m18 0h1m19 0h1m18 0h1m19 0h1m18 0h1m19 0h1m18 0h1m38 0h1m19 0h1m18 0h1m19 0h1m18 0h1m19 0h1m18 0h1m19 0h1m18 0h1m39 0h1m18 0h1m19 0h1m18 0h1m19 0h1m18 0h1m19 0h1m18 0h1m19 0h1m38 0h1m18 0h1m19 0h1m18 0h1m19 0h1m18 0h1m19 0h1m18 0h1m19 0h1m38 0h1m18 0h1m19 0h1m18 0h1m19 0h1m18 0h1m19 0h1m18 0h1m19 0h1m38 0h1m18 0h1m19 0h1m18 0h1m19 0h1m18 0h1m19 0h1m18 0h1m19 0h1m38 0h1m18 0h1m19 0h1m18 0h1m19 0h1m18 0h1m19 0h1M33 181.5h1m18 0h1m19 0h1m18 0h1m38 0h1m19 0h1m18 0h1m19 0h1m18 0h1m19 0h1m18 0h1m19 0h1m18 0h1m38 0h1m19 0h1m18 0h1m19 0h1m18 0h1m19 0h1m18 0h1m19 0h1m18 0h1m38 0h1m19 0h1m18 0h1m19 0h1m18 0h1m19 0h1m18 0h1m19 0h1m18 0h1m38 0h1m19 0h1m18 0h1m19 0h1m18 0h1m19 0h1m18 0h1m19 0h1m18 0h1m38 0h1m19 0h1m18 0h1m19 0h1m18 0h1m19 0h1m18 0h1m19 0h1m18 0h1m38 0h1m19 0h1m18 0h1m19 0h1m18 0h1m19 0h1m18 0h1m19 0h1m18 0h1m39 0h1m18 0h1m19 0h1m18 0h1m19 0h1m18 0h1m19 0h1m18 0h1m19 0h1m38 0h1m18 0h1m19 0h1m18 0h1m19 0h1m18 0h1m19 0h1m18 0h1m19 0h1m38 0h1m18 0h1m19 0h1m18 0h1m19 0h1m18 0h1m19 0h1m18 0h1m19 0h1m38 0h1m18 0h1m19 0h1m18 0h1m19 0h1m18 0h1m19 0h1m18 0h1m19 0h1m38 0h1m18 0h1m19 0h1m18 0h1m19 0h1m18 0h1m19 0h1M33 200.5h1m18 0h1m19 0h1m18 0h1m38 0h1m19 0h1m18 0h1m19 0h1m18 0h1m19 0h1m18 0h1m19 0h1m18 0h1m38 0h1m19 0h1m18 0h1m19 0h1m18 0h1m19 0h1m18 0h1m19 0h1m18 0h1m38 0h1m19 0h1m18 0h1m19 0h1m18 0h1m19 0h1m18 0h1m19 0h1m18 0h1m38 0h1m19 0h1m18 0h1m19 0h1m18 0h1m19 0h1m18 0h1m19 0h1m18 0h1m38 0h1m19 0h1m18 0h1m19 0h1m18 0h1m19 0h1m18 0h1m19 0h1m18 0h1m38 0h1m19 0h1m18 0h1m19 0h1m18 0h1m19 0h1m18 0h1m19 0h1m18 0h1m39 0h1m18 0h1m19 0h1m18 0h1m19 0h1m18 0h1m19 0h1m18 0h1m19 0h1m38 0h1m18 0h1m19 0h1m18 0h1m19 0h1m18 0h1m19 0h1m18 0h1m19 0h1m38 0h1m18 0h1m19 0h1m18 0h1m19 0h1m18 0h1m19 0h1m18 0h1m19 0h1m38 0h1m18 0h1m19 0h1m18 0h1m19 0h1m18 0h1m19 0h1m18 0h1m19 0h1m38 0h1m18 0h1m19 0h1m18 0h1m19 0h1m18 0h1m19 0h1M33 220.5h1m18 0h1m19 0h1m18 0h1m38 0h1m19 0h1m18 0h1m19 0h1m18 0h1m19 0h1m18 0h1m19 0h1m18 0h1m38 0h1m19 0h1m18 0h1m19 0h1m18 0h1m19 0h1m18 0h1m19 0h1m18 0h1m38 0h1m19 0h1m18 0h1m19 0h1m18 0h1m19 0h1m18 0h1m19 0h1m18 0h1m38 0h1m19 0h1m18 0h1m19 0h1m18 0h1m19 0h1m18 0h1m19 0h1m18 0h1m38 0h1m19 0h1m18 0h1m19 0h1m18 0h1m19 0h1m18 0h1m19 0h1m18 0h1m38 0h1m19 0h1m18 0h1m19 0h1m18 0h1m19 0h1m18 0h1m19 0h1m18 0h1m39 0h1m18 0h1m19 0h1m18 0h1m19 0h1m18 0h1m19 0h1m18 0h1m19 0h1m38 0h1m18 0h1m19 0h1m18 0h1m19 0h1m18 0h1m19 0h1m18 0h1m19 0h1m38 0h1m18 0h1m19 0h1m18 0h1m19 0h1m18 0h1m19 0h1m18 0h1m19 0h1m38 0h1m18 0h1m19 0h1m18 0h1m19 0h1m18 0h1m19 0h1m18 0h1m19 0h1m38 0h1m18 0h1m19 0h1m18 0h1m19 0h1m18 0h1m19 0h1M33 239.5h1m18 0h1m19 0h1m18 0h1m38 0h1m19 0h1m18 0h1m19 0h1m18 0h1m19 0h1m18 0h1m19 0h1m18 0h1m38 0h1m19 0h1m18 0h1m19 0h1m18 0h1m19 0h1m18 0h1m19 0h1m18 0h1m38 0h1m19 0h1m18 0h1m19 0h1m18 0h1m19 0h1m18 0h1m19 0h1m18 0h1m38 0h1m19 0h1m18 0h1m19 0h1m18 0h1m19 0h1m18 0h1m19 0h1m18 0h1m38 0h1m19 0h1m18 0h1m19 0h1m18 0h1m19 0h1m18 0h1m19 0h1m18 0h1m38 0h1m19 0h1m18 0h1m19 0h1m18 0h1m19 0h1m18 0h1m19 0h1m18 0h1m39 0h1m18 0h1m19 0h1m18 0h1m19 0h1m18 0h1m19 0h1m18 0h1m19 0h1m38 0h1m18 0h1m19 0h1m18 0h1m19 0h1m18 0h1m19 0h1m18 0h1m19 0h1m38 0h1m18 0h1m19 0h1m18 0h1m19 0h1m18 0h1m19 0h1m18 0h1m19 0h1m38 0h1m18 0h1m19 0h1m18 0h1m19 0h1m18 0h1m19 0h1m18 0h1m19 0h1m38 0h1m18 0h1m19 0h1m18 0h1m19 0h1m18 0h1m19 0h1M33 259.5h1m18 0h1m19 0h1m18 0h1m38 0h1m19 0h1m18 0h1m19 0h1m18 0h1m19 0h1m18 0h1m19 0h1m18 0h1m38 0h1m19 0h1m18 0h1m19 0h1m18 0h1m19 0h1m18 0h1m19 0h1m18 0h1m38 0h1m19 0h1m18 0h1m19 0h1m18 0h1m19 0h1m18 0h1m19 0h1m18 0h1m38 0h1m19 0h1m18 0h1m19 0h1m18 0h1m19 0h1m18 0h1m19 0h1m18 0h1m38 0h1m19 0h1m18 0h1m19 0h1m18 0h1m19 0h1m18 0h1m19 0h1m18 0h1m38 0h1m19 0h1m18 0h1m19 0h1m18 0h1m19 0h1m18 0h1m19 0h1m18 0h1m39 0h1m18 0h1m19 0h1m18 0h1m19 0h1m18 0h1m19 0h1m18 0h1m19 0h1m38 0h1m18 0h1m19 0h1m18 0h1m19 0h1m18 0h1m19 0h1m18 0h1m19 0h1m38 0h1m18 0h1m19 0h1m18 0h1m19 0h1m18 0h1m19 0h1m18 0h1m19 0h1m38 0h1m18 0h1m19 0h1m18 0h1m19 0h1m18 0h1m19 0h1m18 0h1m19 0h1m38 0h1m18 0h1m19 0h1m18 0h1m19 0h1m18 0h1m19 0h1M33 278.5h1m18 0h1m19 0h1m18 0h1m38 0h1m19 0h1m18 0h1m19 0h1m18 0h1m19 0h1m18 0h1m19 0h1m18 0h1m38 0h1m19 0h1m18 0h1m19 0h1m18 0h1m19 0h1m18 0h1m19 0h1m18 0h1m38 0h1m19 0h1m18 0h1m19 0h1m18 0h1m19 0h1m18 0h1m19 0h1m18 0h1m38 0h1m19 0h1m18 0h1m19 0h1m18 0h1m19 0h1m18 0h1m19 0h1m18 0h1m38 0h1m19 0h1m18 0h1m19 0h1m18 0h1m19 0h1m18 0h1m19 0h1m18 0h1m38 0h1m19 0h1m18 0h1m19 0h1m18 0h1m19 0h1m18 0h1m19 0h1m18 0h1m39 0h1m18 0h1m19 0h1m18 0h1m19 0h1m18 0h1m19 0h1m18 0h1m19 0h1m38 0h1m18 0h1m19 0h1m18 0h1m19 0h1m18 0h1m19 0h1m18 0h1m19 0h1m38 0h1m18 0h1m19 0h1m18 0h1m19 0h1m18 0h1m19 0h1m18 0h1m19 0h1m38 0h1m18 0h1m19 0h1m18 0h1m19 0h1m18 0h1m19 0h1m18 0h1m19 0h1m38 0h1m18 0h1m19 0h1m18 0h1m19 0h1m18 0h1m19 0h1M33 298.5h1m18 0h1m19 0h1m18 0h1m38 0h1m19 0h1m18 0h1m19 0h1m18 0h1m19 0h1m18 0h1m19 0h1m18 0h1m38 0h1m19 0h1m18 0h1m19 0h1m18 0h1m19 0h1m18 0h1m19 0h1m18 0h1m38 0h1m19 0h1m18 0h1m19 0h1m18 0h1m19 0h1m18 0h1m19 0h1m18 0h1m38 0h1m19 0h1m18 0h1m19 0h1m18 0h1m19 0h1m18 0h1m19 0h1m18 0h1m38 0h1m19 0h1m18 0h1m19 0h1m18 0h1m19 0h1m18 0h1m19 0h1m18 0h1m38 0h1m19 0h1m18 0h1m19 0h1m18 0h1m19 0h1m18 0h1m19 0h1m18 0h1m39 0h1m18 0h1m19 0h1m18 0h1m19 0h1m18 0h1m19 0h1m18 0h1m19 0h1m38 0h1m18 0h1m19 0h1m18 0h1m19 0h1m18 0h1m19 0h1m18 0h1m19 0h1m38 0h1m18 0h1m19 0h1m18 0h1m19 0h1m18 0h1m19 0h1m18 0h1m19 0h1m38 0h1m18 0h1m19 0h1m18 0h1m19 0h1m18 0h1m19 0h1m18 0h1m19 0h1m38 0h1m18 0h1m19 0h1m18 0h1m19 0h1m18 0h1m19 0h1M33 337.5h1m18 0h1m19 0h1m18 0h1m38 0h1m19 0h1m18 0h1m19 0h1m18 0h1m19 0h1m18 0h1m19 0h1m18 0h1m38 0h1m19 0h1m18 0h1m19 0h1m18 0h1m19 0h1m18 0h1m19 0h1m18 0h1m38 0h1m19 0h1m18 0h1m19 0h1m18 0h1m19 0h1m18 0h1m19 0h1m18 0h1m38 0h1m19 0h1m18 0h1m19 0h1m18 0h1m19 0h1m18 0h1m19 0h1m18 0h1m38 0h1m19 0h1m18 0h1m19 0h1m18 0h1m19 0h1m18 0h1m19 0h1m18 0h1m38 0h1m19 0h1m18 0h1m19 0h1m18 0h1m19 0h1m18 0h1m19 0h1m18 0h1m39 0h1m18 0h1m19 0h1m18 0h1m19 0h1m18 0h1m19 0h1m18 0h1m19 0h1m38 0h1m18 0h1m19 0h1m18 0h1m19 0h1m18 0h1m19 0h1m18 0h1m19 0h1m38 0h1m18 0h1m19 0h1m18 0h1m19 0h1m18 0h1m19 0h1m18 0h1m19 0h1m38 0h1m18 0h1m19 0h1m18 0h1m19 0h1m18 0h1m19 0h1m18 0h1m19 0h1m38 0h1m18 0h1m19 0h1m18 0h1m19 0h1m18 0h1m19 0h1M33 356.5h1m18 0h1m19 0h1m18 0h1m38 0h1m19 0h1m18 0h1m19 0h1m18 0h1m19 0h1m18 0h1m19 0h1m18 0h1m38 0h1m19 0h1m18 0h1m19 0h1m18 0h1m19 0h1m18 0h1m19 0h1m18 0h1m38 0h1m19 0h1m18 0h1m19 0h1m18 0h1m19 0h1m18 0h1m19 0h1m18 0h1m38 0h1m19 0h1m18 0h1m19 0h1m18 0h1m19 0h1m18 0h1m19 0h1m18 0h1m38 0h1m19 0h1m18 0h1m19 0h1m18 0h1m19 0h1m18 0h1m19 0h1m18 0h1m38 0h1m19 0h1m18 0h1m19 0h1m18 0h1m19 0h1m18 0h1m19 0h1m18 0h1m39 0h1m18 0h1m19 0h1m18 0h1m19 0h1m18 0h1m19 0h1m18 0h1m19 0h1m38 0h1m18 0h1m19 0h1m18 0h1m19 0h1m18 0h1m19 0h1m18 0h1m19 0h1m38 0h1m18 0h1m19 0h1m18 0h1m19 0h1m18 0h1m19 0h1m18 0h1m19 0h1m38 0h1m18 0h1m19 0h1m18 0h1m19 0h1m18 0h1m19 0h1m18 0h1m19 0h1m38 0h1m18 0h1m19 0h1m18 0h1m19 0h1m18 0h1m19 0h1M33 376.5h1m18 0h1m19 0h1m18 0h1m38 0h1m19 0h1m18 0h1m19 0h1m18 0h1m19 0h1m18 0h1m19 0h1m18 0h1m38 0h1m19 0h1m18 0h1m19 0h1m18 0h1m19 0h1m18 0h1m19 0h1m18 0h1m38 0h1m19 0h1m18 0h1m19 0h1m18 0h1m19 0h1m18 0h1m19 0h1m18 0h1m38 0h1m19 0h1m18 0h1m19 0h1m18 0h1m19 0h1m18 0h1m19 0h1m18 0h1m38 0h1m19 0h1m18 0h1m19 0h1m18 0h1m19 0h1m18 0h1m19 0h1m18 0h1m38 0h1m19 0h1m18 0h1m19 0h1m18 0h1m19 0h1m18 0h1m19 0h1m18 0h1m39 0h1m18 0h1m19 0h1m18 0h1m19 0h1m18 0h1m19 0h1m18 0h1m19 0h1m38 0h1m18 0h1m19 0h1m18 0h1m19 0h1m18 0h1m19 0h1m18 0h1m19 0h1m38 0h1m18 0h1m19 0h1m18 0h1m19 0h1m18 0h1m19 0h1m18 0h1m19 0h1m38 0h1m18 0h1m19 0h1m18 0h1m19 0h1m18 0h1m19 0h1m18 0h1m19 0h1m38 0h1m18 0h1m19 0h1m18 0h1m19 0h1m18 0h1m19 0h1M33 395.5h1m18 0h1m19 0h1m18 0h1m38 0h1m19 0h1m18 0h1m19 0h1m18 0h1m19 0h1m18 0h1m19 0h1m18 0h1m38 0h1m19 0h1m18 0h1m19 0h1m18 0h1m19 0h1m18 0h1m19 0h1m18 0h1m38 0h1m19 0h1m18 0h1m19 0h1m18 0h1m19 0h1m18 0h1m19 0h1m18 0h1m38 0h1m19 0h1m18 0h1m19 0h1m18 0h1m19 0h1m18 0h1m19 0h1m18 0h1m38 0h1m19 0h1m18 0h1m19 0h1m18 0h1m19 0h1m18 0h1m19 0h1m18 0h1m38 0h1m19 0h1m18 0h1m19 0h1m18 0h1m19 0h1m18 0h1m19 0h1m18 0h1m39 0h1m18 0h1m19 0h1m18 0h1m19 0h1m18 0h1m19 0h1m18 0h1m19 0h1m38 0h1m18 0h1m19 0h1m18 0h1m19 0h1m18 0h1m19 0h1m18 0h1m19 0h1m38 0h1m18 0h1m19 0h1m18 0h1m19 0h1m18 0h1m19 0h1m18 0h1m19 0h1m38 0h1m18 0h1m19 0h1m18 0h1m19 0h1m18 0h1m19 0h1m18 0h1m19 0h1m38 0h1m18 0h1m19 0h1m18 0h1m19 0h1m18 0h1m19 0h1M33 415.5h1m18 0h1m19 0h1m18 0h1m38 0h1m19 0h1m18 0h1m19 0h1m18 0h1m19 0h1m18 0h1m19 0h1m18 0h1m38 0h1m19 0h1m18 0h1m19 0h1m18 0h1m19 0h1m18 0h1m19 0h1m18 0h1m38 0h1m19 0h1m18 0h1m19 0h1m18 0h1m19 0h1m18 0h1m19 0h1m18 0h1m38 0h1m19 0h1m18 0h1m19 0h1m18 0h1m19 0h1m18 0h1m19 0h1m18 0h1m38 0h1m19 0h1m18 0h1m19 0h1m18 0h1m19 0h1m18 0h1m19 0h1m18 0h1m38 0h1m19 0h1m18 0h1m19 0h1m18 0h1m19 0h1m18 0h1m19 0h1m18 0h1m39 0h1m18 0h1m19 0h1m18 0h1m19 0h1m18 0h1m19 0h1m18 0h1m19 0h1m38 0h1m18 0h1m19 0h1m18 0h1m19 0h1m18 0h1m19 0h1m18 0h1m19 0h1m38 0h1m18 0h1m19 0h1m18 0h1m19 0h1m18 0h1m19 0h1m18 0h1m19 0h1m38 0h1m18 0h1m19 0h1m18 0h1m19 0h1m18 0h1m19 0h1m18 0h1m19 0h1m38 0h1m18 0h1m19 0h1m18 0h1m19 0h1m18 0h1m19 0h1M33 434.5h1m18 0h1m19 0h1m18 0h1m38 0h1m19 0h1m18 0h1m19 0h1m18 0h1m19 0h1m18 0h1m19 0h1m18 0h1m38 0h1m19 0h1m18 0h1m19 0h1m18 0h1m19 0h1m18 0h1m19 0h1m18 0h1m38 0h1m19 0h1m18 0h1m19 0h1m18 0h1m19 0h1m18 0h1m19 0h1m18 0h1m38 0h1m19 0h1m18 0h1m19 0h1m18 0h1m19 0h1m18 0h1m19 0h1m18 0h1m38 0h1m19 0h1m18 0h1m19 0h1m18 0h1m19 0h1m18 0h1m19 0h1m18 0h1m38 0h1m19 0h1m18 0h1m19 0h1m18 0h1m19 0h1m18 0h1m19 0h1m18 0h1m39 0h1m18 0h1m19 0h1m18 0h1m19 0h1m18 0h1m19 0h1m18 0h1m19 0h1m38 0h1m18 0h1m19 0h1m18 0h1m19 0h1m18 0h1m19 0h1m18 0h1m19 0h1m38 0h1m18 0h1m19 0h1m18 0h1m19 0h1m18 0h1m19 0h1m18 0h1m19 0h1m38 0h1m18 0h1m19 0h1m18 0h1m19 0h1m18 0h1m19 0h1m18 0h1m19 0h1m38 0h1m18 0h1m19 0h1m18 0h1m19 0h1m18 0h1m19 0h1M33 454.5h1m18 0h1m19 0h1m18 0h1m38 0h1m19 0h1m18 0h1m19 0h1m18 0h1m19 0h1m18 0h1m19 0h1m18 0h1m38 0h1m19 0h1m18 0h1m19 0h1m18 0h1m19 0h1m18 0h1m19 0h1m18 0h1m38 0h1m19 0h1m18 0h1m19 0h1m18 0h1m19 0h1m18 0h1m19 0h1m18 0h1m38 0h1m19 0h1m18 0h1m19 0h1m18 0h1m19 0h1m18 0h1m19 0h1m18 0h1m38 0h1m19 0h1m18 0h1m19 0h1m18 0h1m19 0h1m18 0h1m19 0h1m18 0h1m38 0h1m19 0h1m18 0h1m19 0h1m18 0h1m19 0h1m18 0h1m19 0h1m18 0h1m39 0h1m18 0h1m19 0h1m18 0h1m19 0h1m18 0h1m19 0h1m18 0h1m19 0h1m38 0h1m18 0h1m19 0h1m18 0h1m19 0h1m18 0h1m19 0h1m18 0h1m19 0h1m38 0h1m18 0h1m19 0h1m18 0h1m19 0h1m18 0h1m19 0h1m18 0h1m19 0h1m38 0h1m18 0h1m19 0h1m18 0h1m19 0h1m18 0h1m19 0h1m18 0h1m19 0h1m38 0h1m18 0h1m19 0h1m18 0h1m19 0h1m18 0h1m19 0h1M33 473.5h1m18 0h1m19 0h1m18 0h1m38 0h1m19 0h1m18 0h1m19 0h1m18 0h1m19 0h1m18 0h1m19 0h1m18 0h1m38 0h1m19 0h1m18 0h1m19 0h1m18 0h1m19 0h1m18 0h1m19 0h1m18 0h1m38 0h1m19 0h1m18 0h1m19 0h1m18 0h1m19 0h1m18 0h1m19 0h1m18 0h1m38 0h1m19 0h1m18 0h1m19 0h1m18 0h1m19 0h1m18 0h1m19 0h1m18 0h1m38 0h1m19 0h1m18 0h1m19 0h1m18 0h1m19 0h1m18 0h1m19 0h1m18 0h1m38 0h1m19 0h1m18 0h1m19 0h1m18 0h1m19 0h1m18 0h1m19 0h1m18 0h1m39 0h1m18 0h1m19 0h1m18 0h1m19 0h1m18 0h1m19 0h1m18 0h1m19 0h1m38 0h1m18 0h1m19 0h1m18 0h1m19 0h1m18 0h1m19 0h1m18 0h1m19 0h1m38 0h1m18 0h1m19 0h1m18 0h1m19 0h1m18 0h1m19 0h1m18 0h1m19 0h1m38 0h1m18 0h1m19 0h1m18 0h1m19 0h1m18 0h1m19 0h1m18 0h1m19 0h1m38 0h1m18 0h1m19 0h1m18 0h1m19 0h1m18 0h1m19 0h1M33 493.5h1m18 0h1m19 0h1m18 0h1m38 0h1m19 0h1m18 0h1m19 0h1m18 0h1m19 0h1m18 0h1m19 0h1m18 0h1m38 0h1m19 0h1m18 0h1m19 0h1m18 0h1m19 0h1m18 0h1m19 0h1m18 0h1m38 0h1m19 0h1m18 0h1m19 0h1m18 0h1m19 0h1m18 0h1m19 0h1m18 0h1m38 0h1m19 0h1m18 0h1m19 0h1m18 0h1m19 0h1m18 0h1m19 0h1m18 0h1m38 0h1m19 0h1m18 0h1m19 0h1m18 0h1m19 0h1m18 0h1m19 0h1m18 0h1m38 0h1m19 0h1m18 0h1m19 0h1m18 0h1m19 0h1m18 0h1m19 0h1m18 0h1m39 0h1m18 0h1m19 0h1m18 0h1m19 0h1m18 0h1m19 0h1m18 0h1m19 0h1m38 0h1m18 0h1m19 0h1m18 0h1m19 0h1m18 0h1m19 0h1m18 0h1m19 0h1m38 0h1m18 0h1m19 0h1m18 0h1m19 0h1m18 0h1m19 0h1m18 0h1m19 0h1m38 0h1m18 0h1m19 0h1m18 0h1m19 0h1m18 0h1m19 0h1m18 0h1m19 0h1m38 0h1m18 0h1m19 0h1m18 0h1m19 0h1m18 0h1m19 0h1M33 532.5h1m18 0h1m19 0h1m18 0h1m38 0h1m19 0h1m18 0h1m19 0h1m18 0h1m19 0h1m18 0h1m19 0h1m18 0h1m38 0h1m19 0h1m18 0h1m19 0h1m18 0h1m19 0h1m18 0h1m19 0h1m18 0h1m38 0h1m19 0h1m18 0h1m19 0h1m18 0h1m19 0h1m18 0h1m19 0h1m18 0h1m38 0h1m19 0h1m18 0h1m19 0h1m18 0h1m19 0h1m18 0h1m19 0h1m18 0h1m38 0h1m19 0h1m18 0h1m19 0h1m18 0h1m19 0h1m18 0h1m19 0h1m18 0h1m38 0h1m19 0h1m18 0h1m19 0h1m18 0h1m19 0h1m18 0h1m19 0h1m18 0h1m39 0h1m18 0h1m19 0h1m18 0h1m19 0h1m18 0h1m19 0h1m18 0h1m19 0h1m38 0h1m18 0h1m19 0h1m18 0h1m19 0h1m18 0h1m19 0h1m18 0h1m19 0h1m38 0h1m18 0h1m19 0h1m18 0h1m19 0h1m18 0h1m19 0h1m18 0h1m19 0h1m38 0h1m18 0h1m19 0h1m18 0h1m19 0h1m18 0h1m19 0h1m18 0h1m19 0h1m38 0h1m18 0h1m19 0h1m18 0h1m19 0h1m18 0h1m19 0h1M33 552.5h1m18 0h1m19 0h1m18 0h1m38 0h1m19 0h1m18 0h1m19 0h1m18 0h1m19 0h1m18 0h1m19 0h1m18 0h1m38 0h1m19 0h1m18 0h1m19 0h1m18 0h1m19 0h1m18 0h1m19 0h1m18 0h1m38 0h1m19 0h1m18 0h1m19 0h1m18 0h1m19 0h1m18 0h1m19 0h1m18 0h1m38 0h1m19 0h1m18 0h1m19 0h1m18 0h1m19 0h1m18 0h1m19 0h1m18 0h1m38 0h1m19 0h1m18 0h1m19 0h1m18 0h1m19 0h1m18 0h1m19 0h1m18 0h1m38 0h1m19 0h1m18 0h1m19 0h1m18 0h1m19 0h1m18 0h1m19 0h1m18 0h1m39 0h1m18 0h1m19 0h1m18 0h1m19 0h1m18 0h1m19 0h1m18 0h1m19 0h1m38 0h1m18 0h1m19 0h1m18 0h1m19 0h1m18 0h1m19 0h1m18 0h1m19 0h1m38 0h1m18 0h1m19 0h1m18 0h1m19 0h1m18 0h1m19 0h1m18 0h1m19 0h1m38 0h1m18 0h1m19 0h1m18 0h1m19 0h1m18 0h1m19 0h1m18 0h1m19 0h1m38 0h1m18 0h1m19 0h1m18 0h1m19 0h1m18 0h1m19 0h1M33 571.5h1m18 0h1m19 0h1m18 0h1m38 0h1m19 0h1m18 0h1m19 0h1m18 0h1m19 0h1m18 0h1m19 0h1m18 0h1m38 0h1m19 0h1m18 0h1m19 0h1m18 0h1m19 0h1m18 0h1m19 0h1m18 0h1m38 0h1m19 0h1m18 0h1m19 0h1m18 0h1m19 0h1m18 0h1m19 0h1m18 0h1m38 0h1m19 0h1m18 0h1m19 0h1m18 0h1m19 0h1m18 0h1m19 0h1m18 0h1m38 0h1m19 0h1m18 0h1m19 0h1m18 0h1m19 0h1m18 0h1m19 0h1m18 0h1m38 0h1m19 0h1m18 0h1m19 0h1m18 0h1m19 0h1m18 0h1m19 0h1m18 0h1m39 0h1m18 0h1m19 0h1m18 0h1m19 0h1m18 0h1m19 0h1m18 0h1m19 0h1m38 0h1m18 0h1m19 0h1m18 0h1m19 0h1m18 0h1m19 0h1m18 0h1m19 0h1m38 0h1m18 0h1m19 0h1m18 0h1m19 0h1m18 0h1m19 0h1m18 0h1m19 0h1m38 0h1m18 0h1m19 0h1m18 0h1m19 0h1m18 0h1m19 0h1m18 0h1m19 0h1m38 0h1m18 0h1m19 0h1m18 0h1m19 0h1m18 0h1m19 0h1M33 591.5h1m18 0h1m19 0h1m18 0h1m38 0h1m19 0h1m18 0h1m19 0h1m18 0h1m19 0h1m18 0h1m19 0h1m18 0h1m38 0h1m19 0h1m18 0h1m19 0h1m18 0h1m19 0h1m18 0h1m19 0h1m18 0h1m38 0h1m19 0h1m18 0h1m19 0h1m18 0h1m19 0h1m18 0h1m19 0h1m18 0h1m38 0h1m19 0h1m18 0h1m19 0h1m18 0h1m19 0h1m18 0h1m19 0h1m18 0h1m38 0h1m19 0h1m18 0h1m19 0h1m18 0h1m19 0h1m18 0h1m19 0h1m18 0h1m38 0h1m19 0h1m18 0h1m19 0h1m18 0h1m19 0h1m18 0h1m19 0h1m18 0h1m39 0h1m18 0h1m19 0h1m18 0h1m19 0h1m18 0h1m19 0h1m18 0h1m19 0h1m38 0h1m18 0h1m19 0h1m18 0h1m19 0h1m18 0h1m19 0h1m18 0h1m19 0h1m38 0h1m18 0h1m19 0h1m18 0h1m19 0h1m18 0h1m19 0h1m18 0h1m19 0h1m38 0h1m18 0h1m19 0h1m18 0h1m19 0h1m18 0h1m19 0h1m18 0h1m19 0h1m38 0h1m18 0h1m19 0h1m18 0h1m19 0h1m18 0h1m19 0h1M33 610.5h1m18 0h1m19 0h1m18 0h1m38 0h1m19 0h1m18 0h1m19 0h1m18 0h1m19 0h1m18 0h1m19 0h1m18 0h1m38 0h1m19 0h1m18 0h1m19 0h1m18 0h1m19 0h1m18 0h1m19 0h1m18 0h1m38 0h1m19 0h1m18 0h1m19 0h1m18 0h1m19 0h1m18 0h1m19 0h1m18 0h1m38 0h1m19 0h1m18 0h1m19 0h1m18 0h1m19 0h1m18 0h1m19 0h1m18 0h1m38 0h1m19 0h1m18 0h1m19 0h1m18 0h1m19 0h1m18 0h1m19 0h1m18 0h1m38 0h1m19 0h1m18 0h1m19 0h1m18 0h1m19 0h1m18 0h1m19 0h1m18 0h1m39 0h1m18 0h1m19 0h1m18 0h1m19 0h1m18 0h1m19 0h1m18 0h1m19 0h1m38 0h1m18 0h1m19 0h1m18 0h1m19 0h1m18 0h1m19 0h1m18 0h1m19 0h1m38 0h1m18 0h1m19 0h1m18 0h1m19 0h1m18 0h1m19 0h1m18 0h1m19 0h1m38 0h1m18 0h1m19 0h1m18 0h1m19 0h1m18 0h1m19 0h1m18 0h1m19 0h1m38 0h1m18 0h1m19 0h1m18 0h1m19 0h1m18 0h1m19 0h1M33 630.5h1m18 0h1m19 0h1m18 0h1m38 0h1m19 0h1m18 0h1m19 0h1m18 0h1m19 0h1m18 0h1m19 0h1m18 0h1m38 0h1m19 0h1m18 0h1m19 0h1m18 0h1m19 0h1m18 0h1m19 0h1m18 0h1m38 0h1m19 0h1m18 0h1m19 0h1m18 0h1m19 0h1m18 0h1m19 0h1m18 0h1m38 0h1m19 0h1m18 0h1m19 0h1m18 0h1m19 0h1m18 0h1m19 0h1m18 0h1m38 0h1m19 0h1m18 0h1m19 0h1m18 0h1m19 0h1m18 0h1m19 0h1m18 0h1m38 0h1m19 0h1m18 0h1m19 0h1m18 0h1m19 0h1m18 0h1m19 0h1m18 0h1m39 0h1m18 0h1m19 0h1m18 0h1m19 0h1m18 0h1m19 0h1m18 0h1m19 0h1m38 0h1m18 0h1m19 0h1m18 0h1m19 0h1m18 0h1m19 0h1m18 0h1m19 0h1m38 0h1m18 0h1m19 0h1m18 0h1m19 0h1m18 0h1m19 0h1m18 0h1m19 0h1m38 0h1m18 0h1m19 0h1m18 0h1m19 0h1m18 0h1m19 0h1m18 0h1m19 0h1m38 0h1m18 0h1m19 0h1m18 0h1m19 0h1m18 0h1m19 0h1M33 649.5h1m18 0h1m19 0h1m18 0h1m38 0h1m19 0h1m18 0h1m19 0h1m18 0h1m19 0h1m18 0h1m19 0h1m18 0h1m38 0h1m19 0h1m18 0h1m19 0h1m18 0h1m19 0h1m18 0h1m19 0h1m18 0h1m38 0h1m19 0h1m18 0h1m19 0h1m18 0h1m19 0h1m18 0h1m19 0h1m18 0h1m38 0h1m19 0h1m18 0h1m19 0h1m18 0h1m19 0h1m18 0h1m19 0h1m18 0h1m38 0h1m19 0h1m18 0h1m19 0h1m18 0h1m19 0h1m18 0h1m19 0h1m18 0h1m38 0h1m19 0h1m18 0h1m19 0h1m18 0h1m19 0h1m18 0h1m19 0h1m18 0h1m39 0h1m18 0h1m19 0h1m18 0h1m19 0h1m18 0h1m19 0h1m18 0h1m19 0h1m38 0h1m18 0h1m19 0h1m18 0h1m19 0h1m18 0h1m19 0h1m18 0h1m19 0h1m38 0h1m18 0h1m19 0h1m18 0h1m19 0h1m18 0h1m19 0h1m18 0h1m19 0h1m38 0h1m18 0h1m19 0h1m18 0h1m19 0h1m18 0h1m19 0h1m18 0h1m19 0h1m38 0h1m18 0h1m19 0h1m18 0h1m19 0h1m18 0h1m19 0h1M33 669.5h1m18 0h1m19 0h1m18 0h1m38 0h1m19 0h1m18 0h1m19 0h1m18 0h1m19 0h1m18 0h1m19 0h1m18 0h1m38 0h1m19 0h1m18 0h1m19 0h1m18 0h1m19 0h1m18 0h1m19 0h1m18 0h1m38 0h1m19 0h1m18 0h1m19 0h1m18 0h1m19 0h1m18 0h1m19 0h1m18 0h1m38 0h1m19 0h1m18 0h1m19 0h1m18 0h1m19 0h1m18 0h1m19 0h1m18 0h1m38 0h1m19 0h1m18 0h1m19 0h1m18 0h1m19 0h1m18 0h1m19 0h1m18 0h1m38 0h1m19 0h1m18 0h1m19 0h1m18 0h1m19 0h1m18 0h1m19 0h1m18 0h1m39 0h1m18 0h1m19 0h1m18 0h1m19 0h1m18 0h1m19 0h1m18 0h1m19 0h1m38 0h1m18 0h1m19 0h1m18 0h1m19 0h1m18 0h1m19 0h1m18 0h1m19 0h1m38 0h1m18 0h1m19 0h1m18 0h1m19 0h1m18 0h1m19 0h1m18 0h1m19 0h1m38 0h1m18 0h1m19 0h1m18 0h1m19 0h1m18 0h1m19 0h1m18 0h1m19 0h1m38 0h1m18 0h1m19 0h1m18 0h1m19 0h1m18 0h1m19 0h1M33 688.5h1m18 0h1m19 0h1m18 0h1m38 0h1m19 0h1m18 0h1m19 0h1m18 0h1m19 0h1m18 0h1m19 0h1m18 0h1m38 0h1m19 0h1m18 0h1m19 0h1m18 0h1m19 0h1m18 0h1m19 0h1m18 0h1m38 0h1m19 0h1m18 0h1m19 0h1m18 0h1m19 0h1m18 0h1m19 0h1m18 0h1m38 0h1m19 0h1m18 0h1m19 0h1m18 0h1m19 0h1m18 0h1m19 0h1m18 0h1m38 0h1m19 0h1m18 0h1m19 0h1m18 0h1m19 0h1m18 0h1m19 0h1m18 0h1m38 0h1m19 0h1m18 0h1m19 0h1m18 0h1m19 0h1m18 0h1m19 0h1m18 0h1m39 0h1m18 0h1m19 0h1m18 0h1m19 0h1m18 0h1m19 0h1m18 0h1m19 0h1m38 0h1m18 0h1m19 0h1m18 0h1m19 0h1m18 0h1m19 0h1m18 0h1m19 0h1m38 0h1m18 0h1m19 0h1m18 0h1m19 0h1m18 0h1m19 0h1m18 0h1m19 0h1m38 0h1m18 0h1m19 0h1m18 0h1m19 0h1m18 0h1m19 0h1m18 0h1m19 0h1m38 0h1m18 0h1m19 0h1m18 0h1m19 0h1m18 0h1m19 0h1M33 727.5h1m18 0h1m19 0h1m18 0h1m38 0h1m19 0h1m18 0h1m19 0h1m18 0h1m19 0h1m18 0h1m19 0h1m18 0h1m38 0h1m19 0h1m18 0h1m19 0h1m18 0h1m19 0h1m18 0h1m19 0h1m18 0h1m38 0h1m19 0h1m18 0h1m19 0h1m18 0h1m19 0h1m18 0h1m19 0h1m18 0h1m38 0h1m19 0h1m18 0h1m19 0h1m18 0h1m19 0h1m18 0h1m19 0h1m18 0h1m38 0h1m19 0h1m18 0h1m19 0h1m18 0h1m19 0h1m18 0h1m19 0h1m18 0h1m38 0h1m19 0h1m18 0h1m19 0h1m18 0h1m19 0h1m18 0h1m19 0h1m18 0h1m39 0h1m18 0h1m19 0h1m18 0h1m19 0h1m18 0h1m19 0h1m18 0h1m19 0h1m38 0h1m18 0h1m19 0h1m18 0h1m19 0h1m18 0h1m19 0h1m18 0h1m19 0h1m38 0h1m18 0h1m19 0h1m18 0h1m19 0h1m18 0h1m19 0h1m18 0h1m19 0h1m38 0h1m18 0h1m19 0h1m18 0h1m19 0h1m18 0h1m19 0h1m18 0h1m19 0h1m38 0h1m18 0h1m19 0h1m18 0h1m19 0h1m18 0h1m19 0h1M33 747.5h1m18 0h1m19 0h1m18 0h1m38 0h1m19 0h1m18 0h1m19 0h1m18 0h1m19 0h1m18 0h1m19 0h1m18 0h1m38 0h1m19 0h1m18 0h1m19 0h1m18 0h1m19 0h1m18 0h1m19 0h1m18 0h1m38 0h1m19 0h1m18 0h1m19 0h1m18 0h1m19 0h1m18 0h1m19 0h1m18 0h1m38 0h1m19 0h1m18 0h1m19 0h1m18 0h1m19 0h1m18 0h1m19 0h1m18 0h1m38 0h1m19 0h1m18 0h1m19 0h1m18 0h1m19 0h1m18 0h1m19 0h1m18 0h1m38 0h1m19 0h1m18 0h1m19 0h1m18 0h1m19 0h1m18 0h1m19 0h1m18 0h1m39 0h1m18 0h1m19 0h1m18 0h1m19 0h1m18 0h1m19 0h1m18 0h1m19 0h1m38 0h1m18 0h1m19 0h1m18 0h1m19 0h1m18 0h1m19 0h1m18 0h1m19 0h1m38 0h1m18 0h1m19 0h1m18 0h1m19 0h1m18 0h1m19 0h1m18 0h1m19 0h1m38 0h1m18 0h1m19 0h1m18 0h1m19 0h1m18 0h1m19 0h1m18 0h1m19 0h1m38 0h1m18 0h1m19 0h1m18 0h1m19 0h1m18 0h1m19 0h1M33 766.5h1m18 0h1m19 0h1m18 0h1m38 0h1m19 0h1m18 0h1m19 0h1m18 0h1m19 0h1m18 0h1m19 0h1m18 0h1m38 0h1m19 0h1m18 0h1m19 0h1m18 0h1m19 0h1m18 0h1m19 0h1m18 0h1m38 0h1m19 0h1m18 0h1m19 0h1m18 0h1m19 0h1m18 0h1m19 0h1m18 0h1m38 0h1m19 0h1m18 0h1m19 0h1m18 0h1m19 0h1m18 0h1m19 0h1m18 0h1m38 0h1m19 0h1m18 0h1m19 0h1m18 0h1m19 0h1m18 0h1m19 0h1m18 0h1m38 0h1m19 0h1m18 0h1m19 0h1m18 0h1m19 0h1m18 0h1m19 0h1m18 0h1m39 0h1m18 0h1m19 0h1m18 0h1m19 0h1m18 0h1m19 0h1m18 0h1m19 0h1m38 0h1m18 0h1m19 0h1m18 0h1m19 0h1m18 0h1m19 0h1m18 0h1m19 0h1m38 0h1m18 0h1m19 0h1m18 0h1m19 0h1m18 0h1m19 0h1m18 0h1m19 0h1m38 0h1m18 0h1m19 0h1m18 0h1m19 0h1m18 0h1m19 0h1m18 0h1m19 0h1m38 0h1m18 0h1m19 0h1m18 0h1m19 0h1m18 0h1m19 0h1M33 786.5h1m18 0h1m19 0h1m18 0h1m38 0h1m19 0h1m18 0h1m19 0h1m18 0h1m19 0h1m18 0h1m19 0h1m18 0h1m38 0h1m19 0h1m18 0h1m19 0h1m18 0h1m19 0h1m18 0h1m19 0h1m18 0h1m38 0h1m19 0h1m18 0h1m19 0h1m18 0h1m19 0h1m18 0h1m19 0h1m18 0h1m38 0h1m19 0h1m18 0h1m19 0h1m18 0h1m19 0h1m18 0h1m19 0h1m18 0h1m38 0h1m19 0h1m18 0h1m19 0h1m18 0h1m19 0h1m18 0h1m19 0h1m18 0h1m38 0h1m19 0h1m18 0h1m19 0h1m18 0h1m19 0h1m18 0h1m19 0h1m18 0h1m39 0h1m18 0h1m19 0h1m18 0h1m19 0h1m18 0h1m19 0h1m18 0h1m19 0h1m38 0h1m18 0h1m19 0h1m18 0h1m19 0h1m18 0h1m19 0h1m18 0h1m19 0h1m38 0h1m18 0h1m19 0h1m18 0h1m19 0h1m18 0h1m19 0h1m18 0h1m19 0h1m38 0h1m18 0h1m19 0h1m18 0h1m19 0h1m18 0h1m19 0h1m18 0h1m19 0h1m38 0h1m18 0h1m19 0h1m18 0h1m19 0h1m18 0h1m19 0h1M33 805.5h1m18 0h1m19 0h1m18 0h1m38 0h1m19 0h1m18 0h1m19 0h1m18 0h1m19 0h1m18 0h1m19 0h1m18 0h1m38 0h1m19 0h1m18 0h1m19 0h1m18 0h1m19 0h1m18 0h1m19 0h1m18 0h1m38 0h1m19 0h1m18 0h1m19 0h1m18 0h1m19 0h1m18 0h1m19 0h1m18 0h1m38 0h1m19 0h1m18 0h1m19 0h1m18 0h1m19 0h1m18 0h1m19 0h1m18 0h1m38 0h1m19 0h1m18 0h1m19 0h1m18 0h1m19 0h1m18 0h1m19 0h1m18 0h1m38 0h1m19 0h1m18 0h1m19 0h1m18 0h1m19 0h1m18 0h1m19 0h1m18 0h1m39 0h1m18 0h1m19 0h1m18 0h1m19 0h1m18 0h1m19 0h1m18 0h1m19 0h1m38 0h1m18 0h1m19 0h1m18 0h1m19 0h1m18 0h1m19 0h1m18 0h1m19 0h1m38 0h1m18 0h1m19 0h1m18 0h1m19 0h1m18 0h1m19 0h1m18 0h1m19 0h1m38 0h1m18 0h1m19 0h1m18 0h1m19 0h1m18 0h1m19 0h1m18 0h1m19 0h1m38 0h1m18 0h1m19 0h1m18 0h1m19 0h1m18 0h1m19 0h1M33 825.5h1m18 0h1m19 0h1m18 0h1m38 0h1m19 0h1m18 0h1m19 0h1m18 0h1m19 0h1m18 0h1m19 0h1m18 0h1m38 0h1m19 0h1m18 0h1m19 0h1m18 0h1m19 0h1m18 0h1m19 0h1m18 0h1m38 0h1m19 0h1m18 0h1m19 0h1m18 0h1m19 0h1m18 0h1m19 0h1m18 0h1m38 0h1m19 0h1m18 0h1m19 0h1m18 0h1m19 0h1m18 0h1m19 0h1m18 0h1m38 0h1m19 0h1m18 0h1m19 0h1m18 0h1m19 0h1m18 0h1m19 0h1m18 0h1m38 0h1m19 0h1m18 0h1m19 0h1m18 0h1m19 0h1m18 0h1m19 0h1m18 0h1m39 0h1m18 0h1m19 0h1m18 0h1m19 0h1m18 0h1m19 0h1m18 0h1m19 0h1m38 0h1m18 0h1m19 0h1m18 0h1m19 0h1m18 0h1m19 0h1m18 0h1m19 0h1m38 0h1m18 0h1m19 0h1m18 0h1m19 0h1m18 0h1m19 0h1m18 0h1m19 0h1m38 0h1m18 0h1m19 0h1m18 0h1m19 0h1m18 0h1m19 0h1m18 0h1m19 0h1m38 0h1m18 0h1m19 0h1m18 0h1m19 0h1m18 0h1m19 0h1M33 844.5h1m18 0h1m19 0h1m18 0h1m38 0h1m19 0h1m18 0h1m19 0h1m18 0h1m19 0h1m18 0h1m19 0h1m18 0h1m38 0h1m19 0h1m18 0h1m19 0h1m18 0h1m19 0h1m18 0h1m19 0h1m18 0h1m38 0h1m19 0h1m18 0h1m19 0h1m18 0h1m19 0h1m18 0h1m19 0h1m18 0h1m38 0h1m19 0h1m18 0h1m19 0h1m18 0h1m19 0h1m18 0h1m19 0h1m18 0h1m38 0h1m19 0h1m18 0h1m19 0h1m18 0h1m19 0h1m18 0h1m19 0h1m18 0h1m38 0h1m19 0h1m18 0h1m19 0h1m18 0h1m19 0h1m18 0h1m19 0h1m18 0h1m39 0h1m18 0h1m19 0h1m18 0h1m19 0h1m18 0h1m19 0h1m18 0h1m19 0h1m38 0h1m18 0h1m19 0h1m18 0h1m19 0h1m18 0h1m19 0h1m18 0h1m19 0h1m38 0h1m18 0h1m19 0h1m18 0h1m19 0h1m18 0h1m19 0h1m18 0h1m19 0h1m38 0h1m18 0h1m19 0h1m18 0h1m19 0h1m18 0h1m19 0h1m18 0h1m19 0h1m38 0h1m18 0h1m19 0h1m18 0h1m19 0h1m18 0h1m19 0h1M33 864.5h1m18 0h1m19 0h1m18 0h1m38 0h1m19 0h1m18 0h1m19 0h1m18 0h1m19 0h1m18 0h1m19 0h1m18 0h1m38 0h1m19 0h1m18 0h1m19 0h1m18 0h1m19 0h1m18 0h1m19 0h1m18 0h1m38 0h1m19 0h1m18 0h1m19 0h1m18 0h1m19 0h1m18 0h1m19 0h1m18 0h1m38 0h1m19 0h1m18 0h1m19 0h1m18 0h1m19 0h1m18 0h1m19 0h1m18 0h1m38 0h1m19 0h1m18 0h1m19 0h1m18 0h1m19 0h1m18 0h1m19 0h1m18 0h1m38 0h1m19 0h1m18 0h1m19 0h1m18 0h1m19 0h1m18 0h1m19 0h1m18 0h1m39 0h1m18 0h1m19 0h1m18 0h1m19 0h1m18 0h1m19 0h1m18 0h1m19 0h1m38 0h1m18 0h1m19 0h1m18 0h1m19 0h1m18 0h1m19 0h1m18 0h1m19 0h1m38 0h1m18 0h1m19 0h1m18 0h1m19 0h1m18 0h1m19 0h1m18 0h1m19 0h1m38 0h1m18 0h1m19 0h1m18 0h1m19 0h1m18 0h1m19 0h1m18 0h1m19 0h1m38 0h1m18 0h1m19 0h1m18 0h1m19 0h1m18 0h1m19 0h1M33 883.5h1m18 0h1m19 0h1m18 0h1m38 0h1m19 0h1m18 0h1m19 0h1m18 0h1m19 0h1m18 0h1m19 0h1m18 0h1m38 0h1m19 0h1m18 0h1m19 0h1m18 0h1m19 0h1m18 0h1m19 0h1m18 0h1m38 0h1m19 0h1m18 0h1m19 0h1m18 0h1m19 0h1m18 0h1m19 0h1m18 0h1m38 0h1m19 0h1m18 0h1m19 0h1m18 0h1m19 0h1m18 0h1m19 0h1m18 0h1m38 0h1m19 0h1m18 0h1m19 0h1m18 0h1m19 0h1m18 0h1m19 0h1m18 0h1m38 0h1m19 0h1m18 0h1m19 0h1m18 0h1m19 0h1m18 0h1m19 0h1m18 0h1m39 0h1m18 0h1m19 0h1m18 0h1m19 0h1m18 0h1m19 0h1m18 0h1m19 0h1m38 0h1m18 0h1m19 0h1m18 0h1m19 0h1m18 0h1m19 0h1m18 0h1m19 0h1m38 0h1m18 0h1m19 0h1m18 0h1m19 0h1m18 0h1m19 0h1m18 0h1m19 0h1m38 0h1m18 0h1m19 0h1m18 0h1m19 0h1m18 0h1m19 0h1m18 0h1m19 0h1m38 0h1m18 0h1m19 0h1m18 0h1m19 0h1m18 0h1m19 0h1M33 922.5h1m18 0h1m19 0h1m18 0h1m38 0h1m19 0h1m18 0h1m19 0h1m18 0h1m19 0h1m18 0h1m19 0h1m18 0h1m38 0h1m19 0h1m18 0h1m19 0h1m18 0h1m19 0h1m18 0h1m19 0h1m18 0h1m38 0h1m19 0h1m18 0h1m19 0h1m18 0h1m19 0h1m18 0h1m19 0h1m18 0h1m38 0h1m19 0h1m18 0h1m19 0h1m18 0h1m19 0h1m18 0h1m19 0h1m18 0h1m38 0h1m19 0h1m18 0h1m19 0h1m18 0h1m19 0h1m18 0h1m19 0h1m18 0h1m38 0h1m19 0h1m18 0h1m19 0h1m18 0h1m19 0h1m18 0h1m19 0h1m18 0h1m39 0h1m18 0h1m19 0h1m18 0h1m19 0h1m18 0h1m19 0h1m18 0h1m19 0h1m38 0h1m18 0h1m19 0h1m18 0h1m19 0h1m18 0h1m19 0h1m18 0h1m19 0h1m38 0h1m18 0h1m19 0h1m18 0h1m19 0h1m18 0h1m19 0h1m18 0h1m19 0h1m38 0h1m18 0h1m19 0h1m18 0h1m19 0h1m18 0h1m19 0h1m18 0h1m19 0h1m38 0h1m18 0h1m19 0h1m18 0h1m19 0h1m18 0h1m19 0h1M33 942.5h1m18 0h1m19 0h1m18 0h1m38 0h1m19 0h1m18 0h1m19 0h1m18 0h1m19 0h1m18 0h1m19 0h1m18 0h1m38 0h1m19 0h1m18 0h1m19 0h1m18 0h1m19 0h1m18 0h1m19 0h1m18 0h1m38 0h1m19 0h1m18 0h1m19 0h1m18 0h1m19 0h1m18 0h1m19 0h1m18 0h1m38 0h1m19 0h1m18 0h1m19 0h1m18 0h1m19 0h1m18 0h1m19 0h1m18 0h1m38 0h1m19 0h1m18 0h1m19 0h1m18 0h1m19 0h1m18 0h1m19 0h1m18 0h1m38 0h1m19 0h1m18 0h1m19 0h1m18 0h1m19 0h1m18 0h1m19 0h1m18 0h1m39 0h1m18 0h1m19 0h1m18 0h1m19 0h1m18 0h1m19 0h1m18 0h1m19 0h1m38 0h1m18 0h1m19 0h1m18 0h1m19 0h1m18 0h1m19 0h1m18 0h1m19 0h1m38 0h1m18 0h1m19 0h1m18 0h1m19 0h1m18 0h1m19 0h1m18 0h1m19 0h1m38 0h1m18 0h1m19 0h1m18 0h1m19 0h1m18 0h1m19 0h1m18 0h1m19 0h1m38 0h1m18 0h1m19 0h1m18 0h1m19 0h1m18 0h1m19 0h1M33 961.5h1m18 0h1m19 0h1m18 0h1m38 0h1m19 0h1m18 0h1m19 0h1m18 0h1m19 0h1m18 0h1m19 0h1m18 0h1m38 0h1m19 0h1m18 0h1m19 0h1m18 0h1m19 0h1m18 0h1m19 0h1m18 0h1m38 0h1m19 0h1m18 0h1m19 0h1m18 0h1m19 0h1m18 0h1m19 0h1m18 0h1m38 0h1m19 0h1m18 0h1m19 0h1m18 0h1m19 0h1m18 0h1m19 0h1m18 0h1m38 0h1m19 0h1m18 0h1m19 0h1m18 0h1m19 0h1m18 0h1m19 0h1m18 0h1m38 0h1m19 0h1m18 0h1m19 0h1m18 0h1m19 0h1m18 0h1m19 0h1m18 0h1m39 0h1m18 0h1m19 0h1m18 0h1m19 0h1m18 0h1m19 0h1m18 0h1m19 0h1m38 0h1m18 0h1m19 0h1m18 0h1m19 0h1m18 0h1m19 0h1m18 0h1m19 0h1m38 0h1m18 0h1m19 0h1m18 0h1m19 0h1m18 0h1m19 0h1m18 0h1m19 0h1m38 0h1m18 0h1m19 0h1m18 0h1m19 0h1m18 0h1m19 0h1m18 0h1m19 0h1m38 0h1m18 0h1m19 0h1m18 0h1m19 0h1m18 0h1m19 0h1M33 981.5h1m18 0h1m19 0h1m18 0h1m38 0h1m19 0h1m18 0h1m19 0h1m18 0h1m19 0h1m18 0h1m19 0h1m18 0h1m38 0h1m19 0h1m18 0h1m19 0h1m18 0h1m19 0h1m18 0h1m19 0h1m18 0h1m38 0h1m19 0h1m18 0h1m19 0h1m18 0h1m19 0h1m18 0h1m19 0h1m18 0h1m38 0h1m19 0h1m18 0h1m19 0h1m18 0h1m19 0h1m18 0h1m19 0h1m18 0h1m38 0h1m19 0h1m18 0h1m19 0h1m18 0h1m19 0h1m18 0h1m19 0h1m18 0h1m38 0h1m19 0h1m18 0h1m19 0h1m18 0h1m19 0h1m18 0h1m19 0h1m18 0h1m39 0h1m18 0h1m19 0h1m18 0h1m19 0h1m18 0h1m19 0h1m18 0h1m19 0h1m38 0h1m18 0h1m19 0h1m18 0h1m19 0h1m18 0h1m19 0h1m18 0h1m19 0h1m38 0h1m18 0h1m19 0h1m18 0h1m19 0h1m18 0h1m19 0h1m18 0h1m19 0h1m38 0h1m18 0h1m19 0h1m18 0h1m19 0h1m18 0h1m19 0h1m18 0h1m19 0h1m38 0h1m18 0h1m19 0h1m18 0h1m19 0h1m18 0h1m19 0h1M33 1001.5h1m18 0h1m19 0h1m18 0h1m38 0h1m19 0h1m18 0h1m19 0h1m18 0h1m19 0h1m18 0h1m19 0h1m18 0h1m38 0h1m19 0h1m18 0h1m19 0h1m18 0h1m19 0h1m18 0h1m19 0h1m18 0h1m38 0h1m19 0h1m18 0h1m19 0h1m18 0h1m19 0h1m18 0h1m19 0h1m18 0h1m38 0h1m19 0h1m18 0h1m19 0h1m18 0h1m19 0h1m18 0h1m19 0h1m18 0h1m38 0h1m19 0h1m18 0h1m19 0h1m18 0h1m19 0h1m18 0h1m19 0h1m18 0h1m38 0h1m19 0h1m18 0h1m19 0h1m18 0h1m19 0h1m18 0h1m19 0h1m18 0h1m39 0h1m18 0h1m19 0h1m18 0h1m19 0h1m18 0h1m19 0h1m18 0h1m19 0h1m38 0h1m18 0h1m19 0h1m18 0h1m19 0h1m18 0h1m19 0h1m18 0h1m19 0h1m38 0h1m18 0h1m19 0h1m18 0h1m19 0h1m18 0h1m19 0h1m18 0h1m19 0h1m38 0h1m18 0h1m19 0h1m18 0h1m19 0h1m18 0h1m19 0h1m18 0h1m19 0h1m38 0h1m18 0h1m19 0h1m18 0h1m19 0h1m18 0h1m19 0h1M33 1020.5h1m18 0h1m19 0h1m18 0h1m38 0h1m19 0h1m18 0h1m19 0h1m18 0h1m19 0h1m18 0h1m19 0h1m18 0h1m38 0h1m19 0h1m18 0h1m19 0h1m18 0h1m19 0h1m18 0h1m19 0h1m18 0h1m38 0h1m19 0h1m18 0h1m19 0h1m18 0h1m19 0h1m18 0h1m19 0h1m18 0h1m38 0h1m19 0h1m18 0h1m19 0h1m18 0h1m19 0h1m18 0h1m19 0h1m18 0h1m38 0h1m19 0h1m18 0h1m19 0h1m18 0h1m19 0h1m18 0h1m19 0h1m18 0h1m38 0h1m19 0h1m18 0h1m19 0h1m18 0h1m19 0h1m18 0h1m19 0h1m18 0h1m39 0h1m18 0h1m19 0h1m18 0h1m19 0h1m18 0h1m19 0h1m18 0h1m19 0h1m38 0h1m18 0h1m19 0h1m18 0h1m19 0h1m18 0h1m19 0h1m18 0h1m19 0h1m38 0h1m18 0h1m19 0h1m18 0h1m19 0h1m18 0h1m19 0h1m18 0h1m19 0h1m38 0h1m18 0h1m19 0h1m18 0h1m19 0h1m18 0h1m19 0h1m18 0h1m19 0h1m38 0h1m18 0h1m19 0h1m18 0h1m19 0h1m18 0h1m19 0h1M33 1040.5h1m18 0h1m19 0h1m18 0h1m38 0h1m19 0h1m18 0h1m19 0h1m18 0h1m19 0h1m18 0h1m19 0h1m18 0h1m38 0h1m19 0h1m18 0h1m19 0h1m18 0h1m19 0h1m18 0h1m19 0h1m18 0h1m38 0h1m19 0h1m18 0h1m19 0h1m18 0h1m19 0h1m18 0h1m19 0h1m18 0h1m38 0h1m19 0h1m18 0h1m19 0h1m18 0h1m19 0h1m18 0h1m19 0h1m18 0h1m38 0h1m19 0h1m18 0h1m19 0h1m18 0h1m19 0h1m18 0h1m19 0h1m18 0h1m38 0h1m19 0h1m18 0h1m19 0h1m18 0h1m19 0h1m18 0h1m19 0h1m18 0h1m39 0h1m18 0h1m19 0h1m18 0h1m19 0h1m18 0h1m19 0h1m18 0h1m19 0h1m38 0h1m18 0h1m19 0h1m18 0h1m19 0h1m18 0h1m19 0h1m18 0h1m19 0h1m38 0h1m18 0h1m19 0h1m18 0h1m19 0h1m18 0h1m19 0h1m18 0h1m19 0h1m38 0h1m18 0h1m19 0h1m18 0h1m19 0h1m18 0h1m19 0h1m18 0h1m19 0h1m38 0h1m18 0h1m19 0h1m18 0h1m19 0h1m18 0h1m19 0h1M33 1059.5h1m18 0h1m19 0h1m18 0h1m38 0h1m19 0h1m18 0h1m19 0h1m18 0h1m19 0h1m18 0h1m19 0h1m18 0h1m38 0h1m19 0h1m18 0h1m19 0h1m18 0h1m19 0h1m18 0h1m19 0h1m18 0h1m38 0h1m19 0h1m18 0h1m19 0h1m18 0h1m19 0h1m18 0h1m19 0h1m18 0h1m38 0h1m19 0h1m18 0h1m19 0h1m18 0h1m19 0h1m18 0h1m19 0h1m18 0h1m38 0h1m19 0h1m18 0h1m19 0h1m18 0h1m19 0h1m18 0h1m19 0h1m18 0h1m38 0h1m19 0h1m18 0h1m19 0h1m18 0h1m19 0h1m18 0h1m19 0h1m18 0h1m39 0h1m18 0h1m19 0h1m18 0h1m19 0h1m18 0h1m19 0h1m18 0h1m19 0h1m38 0h1m18 0h1m19 0h1m18 0h1m19 0h1m18 0h1m19 0h1m18 0h1m19 0h1m38 0h1m18 0h1m19 0h1m18 0h1m19 0h1m18 0h1m19 0h1m18 0h1m19 0h1m38 0h1m18 0h1m19 0h1m18 0h1m19 0h1m18 0h1m19 0h1m18 0h1m19 0h1m38 0h1m18 0h1m19 0h1m18 0h1m19 0h1m18 0h1m19 0h1M33 1079.5h1m18 0h1m19 0h1m18 0h1m38 0h1m19 0h1m18 0h1m19 0h1m18 0h1m19 0h1m18 0h1m19 0h1m18 0h1m38 0h1m19 0h1m18 0h1m19 0h1m18 0h1m19 0h1m18 0h1m19 0h1m18 0h1m38 0h1m19 0h1m18 0h1m19 0h1m18 0h1m19 0h1m18 0h1m19 0h1m18 0h1m38 0h1m19 0h1m18 0h1m19 0h1m18 0h1m19 0h1m18 0h1m19 0h1m18 0h1m38 0h1m19 0h1m18 0h1m19 0h1m18 0h1m19 0h1m18 0h1m19 0h1m18 0h1m38 0h1m19 0h1m18 0h1m19 0h1m18 0h1m19 0h1m18 0h1m19 0h1m18 0h1m39 0h1m18 0h1m19 0h1m18 0h1m19 0h1m18 0h1m19 0h1m18 0h1m19 0h1m38 0h1m18 0h1m19 0h1m18 0h1m19 0h1m18 0h1m19 0h1m18 0h1m19 0h1m38 0h1m18 0h1m19 0h1m18 0h1m19 0h1m18 0h1m19 0h1m18 0h1m19 0h1m38 0h1m18 0h1m19 0h1m18 0h1m19 0h1m18 0h1m19 0h1m18 0h1m19 0h1m38 0h1m18 0h1m19 0h1m18 0h1m19 0h1m18 0h1m19 0h1M33 1118.5h1m18 0h1m19 0h1m18 0h1m38 0h1m19 0h1m18 0h1m19 0h1m18 0h1m19 0h1m18 0h1m19 0h1m18 0h1m38 0h1m19 0h1m18 0h1m19 0h1m18 0h1m19 0h1m18 0h1m19 0h1m18 0h1m38 0h1m19 0h1m18 0h1m19 0h1m18 0h1m19 0h1m18 0h1m19 0h1m18 0h1m38 0h1m19 0h1m18 0h1m19 0h1m18 0h1m19 0h1m18 0h1m19 0h1m18 0h1m38 0h1m19 0h1m18 0h1m19 0h1m18 0h1m19 0h1m18 0h1m19 0h1m18 0h1m38 0h1m19 0h1m18 0h1m19 0h1m18 0h1m19 0h1m18 0h1m19 0h1m18 0h1m39 0h1m18 0h1m19 0h1m18 0h1m19 0h1m18 0h1m19 0h1m18 0h1m19 0h1m38 0h1m18 0h1m19 0h1m18 0h1m19 0h1m18 0h1m19 0h1m18 0h1m19 0h1m38 0h1m18 0h1m19 0h1m18 0h1m19 0h1m18 0h1m19 0h1m18 0h1m19 0h1m38 0h1m18 0h1m19 0h1m18 0h1m19 0h1m18 0h1m19 0h1m18 0h1m19 0h1m38 0h1m18 0h1m19 0h1m18 0h1m19 0h1m18 0h1m19 0h1M33 1137.5h1m18 0h1m19 0h1m18 0h1m38 0h1m19 0h1m18 0h1m19 0h1m18 0h1m19 0h1m18 0h1m19 0h1m18 0h1m38 0h1m19 0h1m18 0h1m19 0h1m18 0h1m19 0h1m18 0h1m19 0h1m18 0h1m38 0h1m19 0h1m18 0h1m19 0h1m18 0h1m19 0h1m18 0h1m19 0h1m18 0h1m38 0h1m19 0h1m18 0h1m19 0h1m18 0h1m19 0h1m18 0h1m19 0h1m18 0h1m38 0h1m19 0h1m18 0h1m19 0h1m18 0h1m19 0h1m18 0h1m19 0h1m18 0h1m38 0h1m19 0h1m18 0h1m19 0h1m18 0h1m19 0h1m18 0h1m19 0h1m18 0h1m39 0h1m18 0h1m19 0h1m18 0h1m19 0h1m18 0h1m19 0h1m18 0h1m19 0h1m38 0h1m18 0h1m19 0h1m18 0h1m19 0h1m18 0h1m19 0h1m18 0h1m19 0h1m38 0h1m18 0h1m19 0h1m18 0h1m19 0h1m18 0h1m19 0h1m18 0h1m19 0h1m38 0h1m18 0h1m19 0h1m18 0h1m19 0h1m18 0h1m19 0h1m18 0h1m19 0h1m38 0h1m18 0h1m19 0h1m18 0h1m19 0h1m18 0h1m19 0h1M33 1157.5h1m18 0h1m19 0h1m18 0h1m38 0h1m19 0h1m18 0h1m19 0h1m18 0h1m19 0h1m18 0h1m19 0h1m18 0h1m38 0h1m19 0h1m18 0h1m19 0h1m18 0h1m19 0h1m18 0h1m19 0h1m18 0h1m38 0h1m19 0h1m18 0h1m19 0h1m18 0h1m19 0h1m18 0h1m19 0h1m18 0h1m38 0h1m19 0h1m18 0h1m19 0h1m18 0h1m19 0h1m18 0h1m19 0h1m18 0h1m38 0h1m19 0h1m18 0h1m19 0h1m18 0h1m19 0h1m18 0h1m19 0h1m18 0h1m38 0h1m19 0h1m18 0h1m19 0h1m18 0h1m19 0h1m18 0h1m19 0h1m18 0h1m39 0h1m18 0h1m19 0h1m18 0h1m19 0h1m18 0h1m19 0h1m18 0h1m19 0h1m38 0h1m18 0h1m19 0h1m18 0h1m19 0h1m18 0h1m19 0h1m18 0h1m19 0h1m38 0h1m18 0h1m19 0h1m18 0h1m19 0h1m18 0h1m19 0h1m18 0h1m19 0h1m38 0h1m18 0h1m19 0h1m18 0h1m19 0h1m18 0h1m19 0h1m18 0h1m19 0h1m38 0h1m18 0h1m19 0h1m18 0h1m19 0h1m18 0h1m19 0h1M33 1176.5h1m18 0h1m19 0h1m18 0h1m38 0h1m19 0h1m18 0h1m19 0h1m18 0h1m19 0h1m18 0h1m19 0h1m18 0h1m38 0h1m19 0h1m18 0h1m19 0h1m18 0h1m19 0h1m18 0h1m19 0h1m18 0h1m38 0h1m19 0h1m18 0h1m19 0h1m18 0h1m19 0h1m18 0h1m19 0h1m18 0h1m38 0h1m19 0h1m18 0h1m19 0h1m18 0h1m19 0h1m18 0h1m19 0h1m18 0h1m38 0h1m19 0h1m18 0h1m19 0h1m18 0h1m19 0h1m18 0h1m19 0h1m18 0h1m38 0h1m19 0h1m18 0h1m19 0h1m18 0h1m19 0h1m18 0h1m19 0h1m18 0h1m39 0h1m18 0h1m19 0h1m18 0h1m19 0h1m18 0h1m19 0h1m18 0h1m19 0h1m38 0h1m18 0h1m19 0h1m18 0h1m19 0h1m18 0h1m19 0h1m18 0h1m19 0h1m38 0h1m18 0h1m19 0h1m18 0h1m19 0h1m18 0h1m19 0h1m18 0h1m19 0h1m38 0h1m18 0h1m19 0h1m18 0h1m19 0h1m18 0h1m19 0h1m18 0h1m19 0h1m38 0h1m18 0h1m19 0h1m18 0h1m19 0h1m18 0h1m19 0h1M33 1196.5h1m18 0h1m19 0h1m18 0h1m38 0h1m19 0h1m18 0h1m19 0h1m18 0h1m19 0h1m18 0h1m19 0h1m18 0h1m38 0h1m19 0h1m18 0h1m19 0h1m18 0h1m19 0h1m18 0h1m19 0h1m18 0h1m38 0h1m19 0h1m18 0h1m19 0h1m18 0h1m19 0h1m18 0h1m19 0h1m18 0h1m38 0h1m19 0h1m18 0h1m19 0h1m18 0h1m19 0h1m18 0h1m19 0h1m18 0h1m38 0h1m19 0h1m18 0h1m19 0h1m18 0h1m19 0h1m18 0h1m19 0h1m18 0h1m38 0h1m19 0h1m18 0h1m19 0h1m18 0h1m19 0h1m18 0h1m19 0h1m18 0h1m39 0h1m18 0h1m19 0h1m18 0h1m19 0h1m18 0h1m19 0h1m18 0h1m19 0h1m38 0h1m18 0h1m19 0h1m18 0h1m19 0h1m18 0h1m19 0h1m18 0h1m19 0h1m38 0h1m18 0h1m19 0h1m18 0h1m19 0h1m18 0h1m19 0h1m18 0h1m19 0h1m38 0h1m18 0h1m19 0h1m18 0h1m19 0h1m18 0h1m19 0h1m18 0h1m19 0h1m38 0h1m18 0h1m19 0h1m18 0h1m19 0h1m18 0h1m19 0h1M33 1215.5h1m18 0h1m19 0h1m18 0h1m38 0h1m19 0h1m18 0h1m19 0h1m18 0h1m19 0h1m18 0h1m19 0h1m18 0h1m38 0h1m19 0h1m18 0h1m19 0h1m18 0h1m19 0h1m18 0h1m19 0h1m18 0h1m38 0h1m19 0h1m18 0h1m19 0h1m18 0h1m19 0h1m18 0h1m19 0h1m18 0h1m38 0h1m19 0h1m18 0h1m19 0h1m18 0h1m19 0h1m18 0h1m19 0h1m18 0h1m38 0h1m19 0h1m18 0h1m19 0h1m18 0h1m19 0h1m18 0h1m19 0h1m18 0h1m38 0h1m19 0h1m18 0h1m19 0h1m18 0h1m19 0h1m18 0h1m19 0h1m18 0h1m39 0h1m18 0h1m19 0h1m18 0h1m19 0h1m18 0h1m19 0h1m18 0h1m19 0h1m38 0h1m18 0h1m19 0h1m18 0h1m19 0h1m18 0h1m19 0h1m18 0h1m19 0h1m38 0h1m18 0h1m19 0h1m18 0h1m19 0h1m18 0h1m19 0h1m18 0h1m19 0h1m38 0h1m18 0h1m19 0h1m18 0h1m19 0h1m18 0h1m19 0h1m18 0h1m19 0h1m38 0h1m18 0h1m19 0h1m18 0h1m19 0h1m18 0h1m19 0h1M33 1235.5h1m18 0h1m19 0h1m18 0h1m38 0h1m19 0h1m18 0h1m19 0h1m18 0h1m19 0h1m18 0h1m19 0h1m18 0h1m38 0h1m19 0h1m18 0h1m19 0h1m18 0h1m19 0h1m18 0h1m19 0h1m18 0h1m38 0h1m19 0h1m18 0h1m19 0h1m18 0h1m19 0h1m18 0h1m19 0h1m18 0h1m38 0h1m19 0h1m18 0h1m19 0h1m18 0h1m19 0h1m18 0h1m19 0h1m18 0h1m38 0h1m19 0h1m18 0h1m19 0h1m18 0h1m19 0h1m18 0h1m19 0h1m18 0h1m38 0h1m19 0h1m18 0h1m19 0h1m18 0h1m19 0h1m18 0h1m19 0h1m18 0h1m39 0h1m18 0h1m19 0h1m18 0h1m19 0h1m18 0h1m19 0h1m18 0h1m19 0h1m38 0h1m18 0h1m19 0h1m18 0h1m19 0h1m18 0h1m19 0h1m18 0h1m19 0h1m38 0h1m18 0h1m19 0h1m18 0h1m19 0h1m18 0h1m19 0h1m18 0h1m19 0h1m38 0h1m18 0h1m19 0h1m18 0h1m19 0h1m18 0h1m19 0h1m18 0h1m19 0h1m38 0h1m18 0h1m19 0h1m18 0h1m19 0h1m18 0h1m19 0h1M33 1254.5h1m18 0h1m19 0h1m18 0h1m38 0h1m19 0h1m18 0h1m19 0h1m18 0h1m19 0h1m18 0h1m19 0h1m18 0h1m38 0h1m19 0h1m18 0h1m19 0h1m18 0h1m19 0h1m18 0h1m19 0h1m18 0h1m38 0h1m19 0h1m18 0h1m19 0h1m18 0h1m19 0h1m18 0h1m19 0h1m18 0h1m38 0h1m19 0h1m18 0h1m19 0h1m18 0h1m19 0h1m18 0h1m19 0h1m18 0h1m38 0h1m19 0h1m18 0h1m19 0h1m18 0h1m19 0h1m18 0h1m19 0h1m18 0h1m38 0h1m19 0h1m18 0h1m19 0h1m18 0h1m19 0h1m18 0h1m19 0h1m18 0h1m39 0h1m18 0h1m19 0h1m18 0h1m19 0h1m18 0h1m19 0h1m18 0h1m19 0h1m38 0h1m18 0h1m19 0h1m18 0h1m19 0h1m18 0h1m19 0h1m18 0h1m19 0h1m38 0h1m18 0h1m19 0h1m18 0h1m19 0h1m18 0h1m19 0h1m18 0h1m19 0h1m38 0h1m18 0h1m19 0h1m18 0h1m19 0h1m18 0h1m19 0h1m18 0h1m19 0h1m38 0h1m18 0h1m19 0h1m18 0h1m19 0h1m18 0h1m19 0h1M33 1274.5h1m18 0h1m19 0h1m18 0h1m38 0h1m19 0h1m18 0h1m19 0h1m18 0h1m19 0h1m18 0h1m19 0h1m18 0h1m38 0h1m19 0h1m18 0h1m19 0h1m18 0h1m19 0h1m18 0h1m19 0h1m18 0h1m38 0h1m19 0h1m18 0h1m19 0h1m18 0h1m19 0h1m18 0h1m19 0h1m18 0h1m38 0h1m19 0h1m18 0h1m19 0h1m18 0h1m19 0h1m18 0h1m19 0h1m18 0h1m38 0h1m19 0h1m18 0h1m19 0h1m18 0h1m19 0h1m18 0h1m19 0h1m18 0h1m38 0h1m19 0h1m18 0h1m19 0h1m18 0h1m19 0h1m18 0h1m19 0h1m18 0h1m39 0h1m18 0h1m19 0h1m18 0h1m19 0h1m18 0h1m19 0h1m18 0h1m19 0h1m38 0h1m18 0h1m19 0h1m18 0h1m19 0h1m18 0h1m19 0h1m18 0h1m19 0h1m38 0h1m18 0h1m19 0h1m18 0h1m19 0h1m18 0h1m19 0h1m18 0h1m19 0h1m38 0h1m18 0h1m19 0h1m18 0h1m19 0h1m18 0h1m19 0h1m18 0h1m19 0h1m38 0h1m18 0h1m19 0h1m18 0h1m19 0h1m18 0h1m19 0h1M33 1313.5h1m18 0h1m19 0h1m18 0h1m38 0h1m19 0h1m18 0h1m19 0h1m18 0h1m19 0h1m18 0h1m19 0h1m18 0h1m38 0h1m19 0h1m18 0h1m19 0h1m18 0h1m19 0h1m18 0h1m19 0h1m18 0h1m38 0h1m19 0h1m18 0h1m19 0h1m18 0h1m19 0h1m18 0h1m19 0h1m18 0h1m38 0h1m19 0h1m18 0h1m19 0h1m18 0h1m19 0h1m18 0h1m19 0h1m18 0h1m38 0h1m19 0h1m18 0h1m19 0h1m18 0h1m19 0h1m18 0h1m19 0h1m18 0h1m38 0h1m19 0h1m18 0h1m19 0h1m18 0h1m19 0h1m18 0h1m19 0h1m18 0h1m39 0h1m18 0h1m19 0h1m18 0h1m19 0h1m18 0h1m19 0h1m18 0h1m19 0h1m38 0h1m18 0h1m19 0h1m18 0h1m19 0h1m18 0h1m19 0h1m18 0h1m19 0h1m38 0h1m18 0h1m19 0h1m18 0h1m19 0h1m18 0h1m19 0h1m18 0h1m19 0h1m38 0h1m18 0h1m19 0h1m18 0h1m19 0h1m18 0h1m19 0h1m18 0h1m19 0h1m38 0h1m18 0h1m19 0h1m18 0h1m19 0h1m18 0h1m19 0h1M33 1332.5h1m18 0h1m19 0h1m18 0h1m38 0h1m19 0h1m18 0h1m19 0h1m18 0h1m19 0h1m18 0h1m19 0h1m18 0h1m38 0h1m19 0h1m18 0h1m19 0h1m18 0h1m19 0h1m18 0h1m19 0h1m18 0h1m38 0h1m19 0h1m18 0h1m19 0h1m18 0h1m19 0h1m18 0h1m19 0h1m18 0h1m38 0h1m19 0h1m18 0h1m19 0h1m18 0h1m19 0h1m18 0h1m19 0h1m18 0h1m38 0h1m19 0h1m18 0h1m19 0h1m18 0h1m19 0h1m18 0h1m19 0h1m18 0h1m38 0h1m19 0h1m18 0h1m19 0h1m18 0h1m19 0h1m18 0h1m19 0h1m18 0h1m39 0h1m18 0h1m19 0h1m18 0h1m19 0h1m18 0h1m19 0h1m18 0h1m19 0h1m38 0h1m18 0h1m19 0h1m18 0h1m19 0h1m18 0h1m19 0h1m18 0h1m19 0h1m38 0h1m18 0h1m19 0h1m18 0h1m19 0h1m18 0h1m19 0h1m18 0h1m19 0h1m38 0h1m18 0h1m19 0h1m18 0h1m19 0h1m18 0h1m19 0h1m18 0h1m19 0h1m38 0h1m18 0h1m19 0h1m18 0h1m19 0h1m18 0h1m19 0h1" stroke="#8c8c8c" stroke-width="1" fill="none" shape-rendering="crispEdges"/><path d="M33.5 316v3M52.5 316v3M72.5 316v3M91.5 316v3M130.5 316v3M150.5 316v3M169.5 316v3M189.5 316v3M208.5 316v3M228.5 316v3M247.5 316v3M267.5 316v3M286.5 316v3M325.5 316v3M345.5 316v3M364.5 316v3M384.5 316v3M403.5 316v3M423.5 316v3M442.5 316v3M462.5 316v3M481.5 316v3M520.5 316v3M540.5 316v3M559.5 316v3M579.5 316v3M598.5 316v3M618.5 316v3M637.5 316v3M657.5 316v3M676.5 316v3M715.5 316v3M735.5 316v3M754.5 316v3M774.5 316v3M793.5 316v3M813.5 316v3M832.5 316v3M852.5 316v3M871.5 316v3M910.5 316v3M930.5 316v3M949.5 316v3M969.5 316v3M988.5 316v3M1008.5 316v3M1027.5 316v3M1047.5 316v3M1066.5 316v3M1105.5 316v3M1125.5 316v3M1144.5 316v3M1164.5 316v3M1183.5 316v3M1203.5 316v3M1222.5 316v3M1242.5 316v3M1261.5 316v3M1301.5 316v3M1320.5 316v3M1340.5 316v3M1359.5 316v3M1379.5 316v3M1398.5 316v3M1418.5 316v3M1437.5 316v3M1457.5 316v3M1496.5 316v3M1515.5 316v3M1535.5 316v3M1554.5 316v3M1574.5 316v3M1593.5 316v3M1613.5 316v3M1632.5 316v3M1652.5 316v3M1691.5 316v3M1710.5 316v3M1730.5 316v3M1749.5 316v3M1769.5 316v3M1788.5 316v3M1808.5 316v3M1827.5 316v3M1847.5 316v3M1886.5 316v3M1905.5 316v3M1925.5 316v3M1944.5 316v3M1964.5 316v3M1983.5 316v3M2003.5 316v3M2022.5 316v3M2042.5 316v3M2081.5 316v3M2100.5 316v3M2120.5 316v3M2139.5 316v3M2159.5 316v3M2178.5 316v3M2198.5 316v3M33.5 512v3M52.5 512v3M72.5 512v3M91.5 512v3M130.5 512v3M150.5 512v3M169.5 512v3M189.5 512v3M208.5 512v3M228.5 512v3M247.5 512v3M267.5 512v3M286.5 512v3M325.5 512v3M345.5 512v3M364.5 512v3M384.5 512v3M403.5 512v3M423.5 512v3M442.5 512v3M462.5 512v3M481.5 512v3M520.5 512v3M540.5 512v3M559.5 512v3M579.5 512v3M598.5 512v3M618.5 512v3M637.5 512v3M657.5 512v3M676.5 512v3M715.5 512v3M735.5 512v3M754.5 512v3M774.5 512v3M793.5 512v3M813.5 512v3M832.5 512v3M852.5 512v3M871.5 512v3M910.5 512v3M930.5 512v3M949.5 512v3M969.5 512v3M988.5 512v3M1008.5 512v3M1027.5 512v3M1047.5 512v3M1066.5 512v3M1105.5 512v3M1125.5 512v3M1144.5 512v3M1164.5 512v3M1183.5 512v3M1203.5 512v3M1222.5 512v3M1242.5 512v3M1261.5 512v3M1301.5 512v3M1320.5 512v3M1340.5 512v3M1359.5 512v3M1379.5 512v3M1398.5 512v3M1418.5 512v3M1437.5 512v3M1457.5 512v3M1496.5 512v3M1515.5 512v3M1535.5 512v3M1554.5 512v3M1574.5 512v3M1593.5 512v3M1613.5 512v3M1632.5 512v3M1652.5 512v3M1691.5 512v3M1710.5 512v3M1730.5 512v3M1749.5 512v3M1769.5 512v3M1788.5 512v3M1808.5 512v3M1827.5 512v3M1847.5 512v3M1886.5 512v3M1905.5 512v3M1925.5 512v3M1944.5 512v3M1964.5 512v3M1983.5 512v3M2003.5 512v3M2022.5 512v3M2042.5 512v3M2081.5 512v3M2100.5 512v3M2120.5 512v3M2139.5 512v3M2159.5 512v3M2178.5 512v3M2198.5 512v3M33.5 707v3M52.5 707v3M72.5 707v3M91.5 707v3M130.5 707v3M150.5 707v3M169.5 707v3M189.5 707v3M208.5 707v3M228.5 707v3M247.5 707v3M267.5 707v3M286.5 707v3M325.5 707v3M345.5 707v3M364.5 707v3M384.5 707v3M403.5 707v3M423.5 707v3M442.5 707v3M462.5 707v3M481.5 707v3M520.5 707v3M540.5 707v3M559.5 707v3M579.5 707v3M598.5 707v3M618.5 707v3M637.5 707v3M657.5 707v3M676.5 707v3M715.5 707v3M735.5 707v3M754.5 707v3M774.5 707v3M793.5 707v3M813.5 707v3M832.5 707v3M852.5 707v3M871.5 707v3M910.5 707v3M930.5 707v3M949.5 707v3M969.5 707v3M988.5 707v3M1008.5 707v3M1027.5 707v3M1047.5 707v3M1066.5 707v3M1105.5 707v3M1125.5 707v3M1144.5 707v3M1164.5 707v3M1183.5 707v3M1203.5 707v3M1222.5 707v3M1242.5 707v3M1261.5 707v3M1301.5 707v3M1320.5 707v3M1340.5 707v3M1359.5 707v3M1379.5 707v3M1398.5 707v3M1418.5 707v3M1437.5 707v3M1457.5 707v3M1496.5 707v3M1515.5 707v3M1535.5 707v3M1554.5 707v3M1574.5 707v3M1593.5 707v3M1613.5 707v3M1632.5 707v3M1652.5 707v3M1691.5 707v3M1710.5 707v3M1730.5 707v3M1749.5 707v3M1769.5 707v3M1788.5 707v3M1808.5 707v3M1827.5 707v3M1847.5 707v3M1886.5 707v3M1905.5 707v3M1925.5 707v3M1944.5 707v3M1964.5 707v3M1983.5 707v3M2003.5 707v3M2022.5 707v3M2042.5 707v3M2081.5 707v3M2100.5 707v3M2120.5 707v3M2139.5 707v3M2159.5 707v3M2178.5 707v3M2198.5 707v3M33.5 902v3M52.5 902v3M72.5 902v3M91.5 902v3M130.5 902v3M150.5 902v3M169.5 902v3M189.5 902v3M208.5 902v3M228.5 902v3M247.5 902v3M267.5 902v3M286.5 902v3M325.5 902v3M345.5 902v3M364.5 902v3M384.5 902v3M403.5 902v3M423.5 902v3M442.5 902v3M462.5 902v3M481.5 902v3M520.5 902v3M540.5 902v3M559.5 902v3M579.5 902v3M598.5 902v3M618.5 902v3M637.5 902v3M657.5 902v3M676.5 902v3M715.5 902v3M735.5 902v3M754.5 902v3M774.5 902v3M793.5 902v3M813.5 902v3M832.5 902v3M852.5 902v3M871.5 902v3M910.5 902v3M930.5 902v3M949.5 902v3M969.5 902v3M988.5 902v3M1008.5 902v3M1027.5 902v3M1047.5 902v3M1066.5 902v3M1105.5 902v3M1125.5 902v3M1144.5 902v3M1164.5 902v3M1183.5 902v3M1203.5 902v3M1222.5 902v3M1242.5 902v3M1261.5 902v3M1301.5 902v3M1320.5 902v3M1340.5 902v3M1359.5 902v3M1379.5 902v3M1398.5 902v3M1418.5 902v3M1437.5 902v3M1457.5 902v3M1496.5 902v3M1515.5 902v3M1535.5 902v3M1554.5 902v3M1574.5 902v3M1593.5 902v3M1613.5 902v3M1632.5 902v3M1652.5 902v3M1691.5 902v3M1710.5 902v3M1730.5 902v3M1749.5 902v3M1769.5 902v3M1788.5 902v3M1808.5 902v3M1827.5 902v3M1847.5 902v3M1886.5 902v3M1905.5 902v3M1925.5 902v3M1944.5 902v3M1964.5 902v3M1983.5 902v3M2003.5 902v3M2022.5 902v3M2042.5 902v3M2081.5 902v3M2100.5 902v3M2120.5 902v3M2139.5 902v3M2159.5 902v3M2178.5 902v3M2198.5 902v3M33.5 1097v3M52.5 1097v3M72.5 1097v3M91.5 1097v3M130.5 1097v3M150.5 1097v3M169.5 1097v3M189.5 1097v3M208.5 1097v3M228.5 1097v3M247.5 1097v3M267.5 1097v3M286.5 1097v3M325.5 1097v3M345.5 1097v3M364.5 1097v3M384.5 1097v3M403.5 1097v3M423.5 1097v3M442.5 1097v3M462.5 1097v3M481.5 1097v3M520.5 1097v3M540.5 1097v3M559.5 1097v3M579.5 1097v3M598.5 1097v3M618.5 1097v3M637.5 1097v3M657.5 1097v3M676.5 1097v3M715.5 1097v3M735.5 1097v3M754.5 1097v3M774.5 1097v3M793.5 1097v3M813.5 1097v3M832.5 1097v3M852.5 1097v3M871.5 1097v3M910.5 1097v3M930.5 1097v3M949.5 1097v3M969.5 1097v3M988.5 1097v3M1008.5 1097v3M1027.5 1097v3M1047.5 1097v3M1066.5 1097v3M1105.5 1097v3M1125.5 1097v3M1144.5 1097v3M1164.5 1097v3M1183.5 1097v3M1203.5 1097v3M1222.5 1097v3M1242.5 1097v3M1261.5 1097v3M1301.5 1097v3M1320.5 1097v3M1340.5 1097v3M1359.5 1097v3M1379.5 1097v3M1398.5 1097v3M1418.5 1097v3M1437.5 1097v3M1457.5 1097v3M1496.5 1097v3M1515.5 1097v3M1535.5 1097v3M1554.5 1097v3M1574.5 1097v3M1593.5 1097v3M1613.5 1097v3M1632.5 1097v3M1652.5 1097v3M1691.5 1097v3M1710.5 1097v3M1730.5 1097v3M1749.5 1097v3M1769.5 1097v3M1788.5 1097v3M1808.5 1097v3M1827.5 1097v3M1847.5 1097v3M1886.5 1097v3M1905.5 1097v3M1925.5 1097v3M1944.5 1097v3M1964.5 1097v3M1983.5 1097v3M2003.5 1097v3M2022.5 1097v3M2042.5 1097v3M2081.5 1097v3M2100.5 1097v3M2120.5 1097v3M2139.5 1097v3M2159.5 1097v3M2178.5 1097v3M2198.5 1097v3M33.5 1292v3M52.5 1292v3M72.5 1292v3M91.5 1292v3M130.5 1292v3M150.5 1292v3M169.5 1292v3M189.5 1292v3M208.5 1292v3M228.5 1292v3M247.5 1292v3M267.5 1292v3M286.5 1292v3M325.5 1292v3M345.5 1292v3M364.5 1292v3M384.5 1292v3M403.5 1292v3M423.5 1292v3M442.5 1292v3M462.5 1292v3M481.5 1292v3M520.5 1292v3M540.5 1292v3M559.5 1292v3M579.5 1292v3M598.5 1292v3M618.5 1292v3M637.5 1292v3M657.5 1292v3M676.5 1292v3M715.5 1292v3M735.5 1292v3M754.5 1292v3M774.5 1292v3M793.5 1292v3M813.5 1292v3M832.5 1292v3M852.5 1292v3M871.5 1292v3M910.5 1292v3M930.5 1292v3M949.5 1292v3M969.5 1292v3M988.5 1292v3M1008.5 1292v3M1027.5 1292v3M1047.5 1292v3M1066.5 1292v3M1105.5 1292v3M1125.5 1292v3M1144.5 1292v3M1164.5 1292v3M1183.5 1292v3M1203.5 1292v3M1222.5 1292v3M1242.5 1292v3M1261.5 1292v3M1301.5 1292v3M1320.5 1292v3M1340.5 1292v3M1359.5 1292v3M1379.5 1292v3M1398.5 1292v3M1418.5 1292v3M1437.5 1292v3M1457.5 1292v3M1496.5 1292v3M1515.5 1292v3M1535.5 1292v3M1554.5 1292v3M1574.5 1292v3M1593.5 1292v3M1613.5 1292v3M1632.5 1292v3M1652.5 1292v3M1691.5 1292v3M1710.5 1292v3M1730.5 1292v3M1749.5 1292v3M1769.5 1292v3M1788.5 1292v3M1808.5 1292v3M1827.5 1292v3M1847.5 1292v3M1886.5 1292v3M1905.5 1292v3M1925.5 1292v3M1944.5 1292v3M1964.5 1292v3M1983.5 1292v3M2003.5 1292v3M2022.5 1292v3M2042.5 1292v3M2081.5 1292v3M2100.5 1292v3M2120.5 1292v3M2139.5 1292v3M2159.5 1292v3M2178.5 1292v3M2198.5 1292v3" stroke="#8c8c8c" stroke-width="1" fill="none" shape-rendering="crispEdges"/><path d="M110 142.5h3M305 142.5h3M500 142.5h3M695 142.5h3M890 142.5h3M1085 142.5h3M1280 142.5h3M1475 142.5h3M1670 142.5h3M1865 142.5h3M2060 142.5h3M110 161.5h3M305 161.5h3M500 161.5h3M695 161.5h3M890 161.5h3M1085 161.5h3M1280 161.5h3M1475 161.5h3M1670 161.5h3M1865 161.5h3M2060 161.5h3M110 181.5h3M305 181.5h3M500 181.5h3M695 181.5h3M890 181.5h3M1085 181.5h3M1280 181.5h3M1475 181.5h3M1670 181.5h3M1865 181.5h3M2060 181.5h3M110 200.5h3M305 200.5h3M500 200.5h3M695 200.5h3M890 200.5h3M1085 200.5h3M1280 200.5h3M1475 200.5h3M1670 200.5h3M1865 200.5h3M2060 200.5h3M110 220.5h3M305 220.5h3M500 220.5h3M695 220.5h3M890 220.5h3M1085 220.5h3M1280 220.5h3M1475 220.5h3M1670 220.5h3M1865 220.5h3M2060 220.5h3M110 239.5h3M305 239.5h3M500 239.5h3M695 239.5h3M890 239.5h3M1085 239.5h3M1280 239.5h3M1475 239.5h3M1670 239.5h3M1865 239.5h3M2060 239.5h3M110 259.5h3M305 259.5h3M500 259.5h3M695 259.5h3M890 259.5h3M1085 259.5h3M1280 259.5h3M1475 259.5h3M1670 259.5h3M1865 259.5h3M2060 259.5h3M110 278.5h3M305 278.5h3M500 278.5h3M695 278.5h3M890 278.5h3M1085 278.5h3M1280 278.5h3M1475 278.5h3M1670 278.5h3M1865 278.5h3M2060 278.5h3M110 298.5h3M305 298.5h3M500 298.5h3M695 298.5h3M890 298.5h3M1085 298.5h3M1280 298.5h3M1475 298.5h3M1670 298.5h3M1865 298.5h3M2060 298.5h3M110 337.5h3M305 337.5h3M500 337.5h3M695 337.5h3M890 337.5h3M1085 337.5h3M1280 337.5h3M1475 337.5h3M1670 337.5h3M1865 337.5h3M2060 337.5h3M110 356.5h3M305 356.5h3M500 356.5h3M695 356.5h3M890 356.5h3M1085 356.5h3M1280 356.5h3M1475 356.5h3M1670 356.5h3M1865 356.5h3M2060 356.5h3M110 376.5h3M305 376.5h3M500 376.5h3M695 376.5h3M890 376.5h3M1085 376.5h3M1280 376.5h3M1475 376.5h3M1670 376.5h3M1865 376.5h3M2060 376.5h3M110 395.5h3M305 395.5h3M500 395.5h3M695 395.5h3M890 395.5h3M1085 395.5h3M1280 395.5h3M1475 395.5h3M1670 395.5h3M1865 395.5h3M2060 395.5h3M110 415.5h3M305 415.5h3M500 415.5h3M695 415.5h3M890 415.5h3M1085 415.5h3M1280 415.5h3M1475 415.5h3M1670 415.5h3M1865 415.5h3M2060 415.5h3M110 434.5h3M305 434.5h3M500 434.5h3M695 434.5h3M890 434.5h3M1085 434.5h3M1280 434.5h3M1475 434.5h3M1670 434.5h3M1865 434.5h3M2060 434.5h3M110 454.5h3M305 454.5h3M500 454.5h3M695 454.5h3M890 454.5h3M1085 454.5h3M1280 454.5h3M1475 454.5h3M1670 454.5h3M1865 454.5h3M2060 454.5h3M110 473.5h3M305 473.5h3M500 473.5h3M695 473.5h3M890 473.5h3M1085 473.5h3M1280 473.5h3M1475 473.5h3M1670 473.5h3M1865 473.5h3M2060 473.5h3M110 493.5h3M305 493.5h3M500 493.5h3M695 493.5h3M890 493.5h3M1085 493.5h3M1280 493.5h3M1475 493.5h3M1670 493.5h3M1865 493.5h3M2060 493.5h3M110 532.5h3M305 532.5h3M500 532.5h3M695 532.5h3M890 532.5h3M1085 532.5h3M1280 532.5h3M1475 532.5h3M1670 532.5h3M1865 532.5h3M2060 532.5h3M110 552.5h3M305 552.5h3M500 552.5h3M695 552.5h3M890 552.5h3M1085 552.5h3M1280 552.5h3M1475 552.5h3M1670 552.5h3M1865 552.5h3M2060 552.5h3M110 571.5h3M305 571.5h3M500 571.5h3M695 571.5h3M890 571.5h3M1085 571.5h3M1280 571.5h3M1475 571.5h3M1670 571.5h3M1865 571.5h3M2060 571.5h3M110 591.5h3M305 591.5h3M500 591.5h3M695 591.5h3M890 591.5h3M1085 591.5h3M1280 591.5h3M1475 591.5h3M1670 591.5h3M1865 591.5h3M2060 591.5h3M110 610.5h3M305 610.5h3M500 610.5h3M695 610.5h3M890 610.5h3M1085 610.5h3M1280 610.5h3M1475 610.5h3M1670 610.5h3M1865 610.5h3M2060 610.5h3M110 630.5h3M305 630.5h3M500 630.5h3M695 630.5h3M890 630.5h3M1085 630.5h3M1280 630.5h3M1475 630.5h3M1670 630.5h3M1865 630.5h3M2060 630.5h3M110 649.5h3M305 649.5h3M500 649.5h3M695 649.5h3M890 649.5h3M1085 649.5h3M1280 649.5h3M1475 649.5h3M1670 649.5h3M1865 649.5h3M2060 649.5h3M110 669.5h3M305 669.5h3M500 669.5h3M695 669.5h3M890 669.5h3M1085 669.5h3M1280 669.5h3M1475 669.5h3M1670 669.5h3M1865 669.5h3M2060 669.5h3M110 688.5h3M305 688.5h3M500 688.5h3M695 688.5h3M890 688.5h3M1085 688.5h3M1280 688.5h3M1475 688.5h3M1670 688.5h3M1865 688.5h3M2060 688.5h3M110 727.5h3M305 727.5h3M500 727.5h3M695 727.5h3M890 727.5h3M1085 727.5h3M1280 727.5h3M1475 727.5h3M1670 727.5h3M1865 727.5h3M2060 727.5h3M110 747.5h3M305 747.5h3M500 747.5h3M695 747.5h3M890 747.5h3M1085 747.5h3M1280 747.5h3M1475 747.5h3M1670 747.5h3M1865 747.5h3M2060 747.5h3M110 766.5h3M305 766.5h3M500 766.5h3M695 766.5h3M890 766.5h3M1085 766.5h3M1280 766.5h3M1475 766.5h3M1670 766.5h3M1865 766.5h3M2060 766.5h3M110 786.5h3M305 786.5h3M500 786.5h3M695 786.5h3M890 786.5h3M1085 786.5h3M1280 786.5h3M1475 786.5h3M1670 786.5h3M1865 786.5h3M2060 786.5h3M110 805.5h3M305 805.5h3M500 805.5h3M695 805.5h3M890 805.5h3M1085 805.5h3M1280 805.5h3M1475 805.5h3M1670 805.5h3M1865 805.5h3M2060 805.5h3M110 825.5h3M305 825.5h3M500 825.5h3M695 825.5h3M890 825.5h3M1085 825.5h3M1280 825.5h3M1475 825.5h3M1670 825.5h3M1865 825.5h3M2060 825.5h3M110 844.5h3M305 844.5h3M500 844.5h3M695 844.5h3M890 844.5h3M1085 844.5h3M1280 844.5h3M1475 844.5h3M1670 844.5h3M1865 844.5h3M2060 844.5h3M110 864.5h3M305 864.5h3M500 864.5h3M695 864.5h3M890 864.5h3M1085 864.5h3M1280 864.5h3M1475 864.5h3M1670 864.5h3M1865 864.5h3M2060 864.5h3M110 883.5h3M305 883.5h3M500 883.5h3M695 883.5h3M890 883.5h3M1085 883.5h3M1280 883.5h3M1475 883.5h3M1670 883.5h3M1865 883.5h3M2060 883.5h3M110 922.5h3M305 922.5h3M500 922.5h3M695 922.5h3M890 922.5h3M1085 922.5h3M1280 922.5h3M1475 922.5h3M1670 922.5h3M1865 922.5h3M2060 922.5h3M110 942.5h3M305 942.5h3M500 942.5h3M695 942.5h3M890 942.5h3M1085 942.5h3M1280 942.5h3M1475 942.5h3M1670 942.5h3M1865 942.5h3M2060 942.5h3M110 961.5h3M305 961.5h3M500 961.5h3M695 961.5h3M890 961.5h3M1085 961.5h3M1280 961.5h3M1475 961.5h3M1670 961.5h3M1865 961.5h3M2060 961.5h3M110 981.5h3M305 981.5h3M500 981.5h3M695 981.5h3M890 981.5h3M1085 981.5h3M1280 981.5h3M1475 981.5h3M1670 981.5h3M1865 981.5h3M2060 981.5h3M110 1001.5h3M305 1001.5h3M500 1001.5h3M695 1001.5h3M890 1001.5h3M1085 1001.5h3M1280 1001.5h3M1475 1001.5h3M1670 1001.5h3M1865 1001.5h3M2060 1001.5h3M110 1020.5h3M305 1020.5h3M500 1020.5h3M695 1020.5h3M890 1020.5h3M1085 1020.5h3M1280 1020.5h3M1475 1020.5h3M1670 1020.5h3M1865 1020.5h3M2060 1020.5h3M110 1040.5h3M305 1040.5h3M500 1040.5h3M695 1040.5h3M890 1040.5h3M1085 1040.5h3M1280 1040.5h3M1475 1040.5h3M1670 1040.5h3M1865 1040.5h3M2060 1040.5h3M110 1059.5h3M305 1059.5h3M500 1059.5h3M695 1059.5h3M890 1059.5h3M1085 1059.5h3M1280 1059.5h3M1475 1059.5h3M1670 1059.5h3M1865 1059.5h3M2060 1059.5h3M110 1079.5h3M305 1079.5h3M500 1079.5h3M695 1079.5h3M890 1079.5h3M1085 1079.5h3M1280 1079.5h3M1475 1079.5h3M1670 1079.5h3M1865 1079.5h3M2060 1079.5h3M110 1118.5h3M305 1118.5h3M500 1118.5h3M695 1118.5h3M890 1118.5h3M1085 1118.5h3M1280 1118.5h3M1475 1118.5h3M1670 1118.5h3M1865 1118.5h3M2060 1118.5h3M110 1137.5h3M305 1137.5h3M500 1137.5h3M695 1137.5h3M890 1137.5h3M1085 1137.5h3M1280 1137.5h3M1475 1137.5h3M1670 1137.5h3M1865 1137.5h3M2060 1137.5h3M110 1157.5h3M305 1157.5h3M500 1157.5h3M695 1157.5h3M890 1157.5h3M1085 1157.5h3M1280 1157.5h3M1475 1157.5h3M1670 1157.5h3M1865 1157.5h3M2060 1157.5h3M110 1176.5h3M305 1176.5h3M500 1176.5h3M695 1176.5h3M890 1176.5h3M1085 1176.5h3M1280 1176.5h3M1475 1176.5h3M1670 1176.5h3M1865 1176.5h3M2060 1176.5h3M110 1196.5h3M305 1196.5h3M500 1196.5h3M695 1196.5h3M890 1196.5h3M1085 1196.5h3M1280 1196.5h3M1475 1196.5h3M1670 1196.5h3M1865 1196.5h3M2060 1196.5h3M110 1215.5h3M305 1215.5h3M500 1215.5h3M695 1215.5h3M890 1215.5h3M1085 1215.5h3M1280 1215.5h3M1475 1215.5h3M1670 1215.5h3M1865 1215.5h3M2060 1215.5h3M110 1235.5h3M305 1235.5h3M500 1235.5h3M695 1235.5h3M890 1235.5h3M1085 1235.5h3M1280 1235.5h3M1475 1235.5h3M1670 1235.5h3M1865 1235.5h3M2060 1235.5h3M110 1254.5h3M305 1254.5h3M500 1254.5h3M695 1254.5h3M890 1254.5h3M1085 1254.5h3M1280 1254.5h3M1475 1254.5h3M1670 1254.5h3M1865 1254.5h3M2060 1254.5h3M110 1274.5h3M305 1274.5h3M500 1274.5h3M695 1274.5h3M890 1274.5h3M1085 1274.5h3M1280 1274.5h3M1475 1274.5h3M1670 1274.5h3M1865 1274.5h3M2060 1274.5h3M110 1313.5h3M305 1313.5h3M500 1313.5h3M695 1313.5h3M890 1313.5h3M1085 1313.5h3M1280 1313.5h3M1475 1313.5h3M1670 1313.5h3M1865 1313.5h3M2060 1313.5h3M110 1332.5h3M305 1332.5h3M500 1332.5h3M695 1332.5h3M890 1332.5h3M1085 1332.5h3M1280 1332.5h3M1475 1332.5h3M1670 1332.5h3M1865 1332.5h3M2060 1332.5h3" stroke="#8c8c8c" stroke-width="1" fill="none" shape-rendering="crispEdges"/><path d="M110 316h3v3h-3zM305 316h3v3h-3zM500 316h3v3h-3zM695 316h3v3h-3zM890 316h3v3h-3zM1085 316h3v3h-3zM1280 316h3v3h-3zM1475 316h3v3h-3zM1670 316h3v3h-3zM1865 316h3v3h-3zM2060 316h3v3h-3zM110 512h3v3h-3zM305 512h3v3h-3zM500 512h3v3h-3zM695 512h3v3h-3zM890 512h3v3h-3zM1085 512h3v3h-3zM1280 512h3v3h-3zM1475 512h3v3h-3zM1670 512h3v3h-3zM1865 512h3v3h-3zM2060 512h3v3h-3zM110 707h3v3h-3zM305 707h3v3h-3zM500 707h3v3h-3zM695 707h3v3h-3zM890 707h3v3h-3zM1085 707h3v3h-3zM1280 707h3v3h-3zM1475 707h3v3h-3zM1670 707h3v3h-3zM1865 707h3v3h-3zM2060 707h3v3h-3zM110 902h3v3h-3zM305 902h3v3h-3zM500 902h3v3h-3zM695 902h3v3h-3zM890 902h3v3h-3zM1085 902h3v3h-3zM1280 902h3v3h-3zM1475 902h3v3h-3zM1670 902h3v3h-3zM1865 902h3v3h-3zM2060 902h3v3h-3zM110 1097h3v3h-3zM305 1097h3v3h-3zM500 1097h3v3h-3zM695 1097h3v3h-3zM890 1097h3v3h-3zM1085 1097h3v3h-3zM1280 1097h3v3h-3zM1475 1097h3v3h-3zM1670 1097h3v3h-3zM1865 1097h3v3h-3zM2060 1097h3v3h-3zM110 1292h3v3h-3zM305 1292h3v3h-3zM500 1292h3v3h-3zM695 1292h3v3h-3zM890 1292h3v3h-3zM1085 1292h3v3h-3zM1280 1292h3v3h-3zM1475 1292h3v3h-3zM1670 1292h3v3h-3zM1865 1292h3v3h-3zM2060 1292h3v3h-3z" fill="#9a9a9a" shape-rendering="crispEdges"/><path d="M32,538 C300,538 600,600 925,670" fill="none" stroke="rgba(0,230,255,0.55)" stroke-width="1"/><path d="M32,690 C280,705 620,790 925,877" fill="none" stroke="rgba(0,230,255,0.55)" stroke-width="1"/><rect x="894.5" y="254.7" width="409.1" height="995.0" rx="0" fill="none" stroke="#d0d2cd" stroke-width="1.2"/><rect x="891.4" y="246.4" width="69.2" height="1009.9" rx="0" fill="none" stroke="#ff26e2" stroke-width="1.2"/><rect x="1238.5" y="246.5" width="69.0" height="1009.8" rx="0" fill="none" stroke="#ff26e2" stroke-width="1.2"/><path d="M900.0,268.5 L913.0,257.0 L950.3,257.0 L950.3,1247.5 L900.0,1247.5 Z" fill="none" stroke="#afafaf" stroke-width="2" stroke-linejoin="round" stroke-linecap="round"/><path d="M1246.8,268.5 L1260.0,257.0 L1297.4,257.0 L1297.4,1247.5 L1246.8,1247.5 Z" fill="none" stroke="#afafaf" stroke-width="2" stroke-linejoin="round" stroke-linecap="round"/><text x="872.0" y="213.5" font-family="Liberation Mono" font-size="34" fill="#afafaf" text-anchor="start" textLength="455" lengthAdjust="spacingAndGlyphs" stroke="#afafaf" stroke-width="0.6" font-weight="normal" opacity="1">USB_C_Receptacle_USB2.O_14P</text><text x="839.0" y="1277.8" font-family="Liberation Mono" font-size="34" fill="#afafaf" text-anchor="start" textLength="173" lengthAdjust="spacingAndGlyphs" stroke="#afafaf" stroke-width="0.6" font-weight="normal" opacity="1">Conn_O1x2O</text><text x="1185.3" y="1277.8" font-family="Liberation Mono" font-size="34" fill="#afafaf" text-anchor="start" textLength="174" lengthAdjust="spacingAndGlyphs" stroke="#afafaf" stroke-width="0.6" font-weight="normal" opacity="1">Conn_O1x2O</text><text x="1205.6" y="1303.7" font-family="Liberation Mono" font-size="34" fill="#afafaf" text-anchor="start" transform="rotate(-90 1205.6 1303.7)" textLength="172" lengthAdjust="spacingAndGlyphs" stroke="#afafaf" stroke-width="0.6" font-weight="normal" opacity="1">Conn_O1xO3</text><text x="1108.6" y="629.2" font-family="Liberation Mono" font-size="36" fill="#afafaf" text-anchor="start" transform="rotate(-90 1108.6 629.2)" textLength="296" lengthAdjust="spacingAndGlyphs" stroke="#afafaf" stroke-width="0.6" font-weight="normal" opacity="1">MCP17OOx-33OxTT</text><text x="998.0" y="405.0" font-family="Liberation Mono" font-size="34" fill="#afafaf" text-anchor="start" textLength="70" lengthAdjust="spacingAndGlyphs" stroke="#afafaf" stroke-width="0.6" font-weight="normal" opacity="1">1OuF</text><text x="1018.0" y="518.0" font-family="Liberation Mono" font-size="34" fill="#afafaf" text-anchor="start" textLength="65" lengthAdjust="spacingAndGlyphs" stroke="#afafaf" stroke-width="0.6" font-weight="normal" opacity="1">1OuF</text><text x="1013.0" y="629.0" font-family="Liberation Mono" font-size="34" fill="#afafaf" text-anchor="start" textLength="78" lengthAdjust="spacingAndGlyphs" stroke="#afafaf" stroke-width="0.6" font-weight="normal" opacity="1">O.1uF</text><text x="990.0" y="677.0" font-family="Liberation Mono" font-size="34" fill="#afafaf" text-anchor="start" textLength="55" lengthAdjust="spacingAndGlyphs" stroke="#afafaf" stroke-width="0.6" font-weight="normal" opacity="1">1OK</text><text x="905.0" y="728.0" font-family="Liberation Mono" font-size="34" fill="#afafaf" text-anchor="start" textLength="240" lengthAdjust="spacingAndGlyphs" stroke="#afafaf" stroke-width="0.6" font-weight="normal" opacity="1">W25Q16JVUXIQ</text><text x="948.0" y="748.0" font-family="Liberation Mono" font-size="34" fill="#afafaf" text-anchor="start" textLength="92" lengthAdjust="spacingAndGlyphs" stroke="#afafaf" stroke-width="0.6" font-weight="normal" opacity="1">O.1uF</text><text x="1020.0" y="1013.0" font-family="Liberation Mono" font-size="34" fill="#afafaf" text-anchor="start" transform="rotate(-90 1020.0 1013.0)" textLength="70" lengthAdjust="spacingAndGlyphs" stroke="#afafaf" stroke-width="0.6" font-weight="normal" opacity="1">33pF</text><text x="1170.0" y="1013.0" font-family="Liberation Mono" font-size="34" fill="#afafaf" text-anchor="start" transform="rotate(-90 1170.0 1013.0)" textLength="70" lengthAdjust="spacingAndGlyphs" stroke="#afafaf" stroke-width="0.6" font-weight="normal" opacity="1">33pF</text><text x="1030.0" y="940.0" font-family="Liberation Mono" font-size="34" fill="#afafaf" text-anchor="start" textLength="70" lengthAdjust="spacingAndGlyphs" stroke="#afafaf" stroke-width="0.6" font-weight="normal" opacity="0.9">12pF</text><text x="1180.0" y="790.0" font-family="Liberation Mono" font-size="34" fill="#afafaf" text-anchor="start" transform="rotate(-90 1180.0 790.0)" textLength="80" lengthAdjust="spacingAndGlyphs" stroke="#afafaf" stroke-width="0.6" font-weight="normal" opacity="1">O.1uF</text><text x="1165.0" y="685.0" font-family="Liberation Mono" font-size="34" fill="#afafaf" text-anchor="start" transform="rotate(-90 1165.0 685.0)" textLength="70" lengthAdjust="spacingAndGlyphs" stroke="#afafaf" stroke-width="0.6" font-weight="normal" opacity="1">1OuF</text><text x="1220.0" y="740.0" font-family="Liberation Mono" font-size="30" fill="#afafaf" text-anchor="start" transform="rotate(-60 1220.0 740.0)" textLength="80" lengthAdjust="spacingAndGlyphs" stroke="#afafaf" stroke-width="0.6" font-weight="normal" opacity="1">O.1uF</text><text x="1177.0" y="882.0" font-family="Liberation Mono" font-size="34" fill="#afafaf" text-anchor="start" textLength="80" lengthAdjust="spacingAndGlyphs" stroke="#afafaf" stroke-width="0.6" font-weight="normal" opacity="1">O.1uF</text><text x="955.0" y="843.0" font-family="Liberation Mono" font-size="34" fill="#afafaf" text-anchor="start" textLength="80" lengthAdjust="spacingAndGlyphs" stroke="#afafaf" stroke-width="0.6" font-weight="normal" opacity="1">O.1uF</text><path d="M943.0,297.0 L967.6,321.9 L967.6,740.0 L1008.3,780.4" fill="none" stroke="#4d7fc4" stroke-width="3.6" stroke-linejoin="round" stroke-linecap="round"/><path d="M937.9,342.8 L959.0,363.8 L959.0,745.0 L993.4,782.0" fill="none" stroke="#4d7fc4" stroke-width="3.6" stroke-linejoin="round" stroke-linecap="round"/><path d="M936.9,439.6 L951.7,455.5 L951.7,760.0 L990.0,798.0" fill="none" stroke="#4d7fc4" stroke-width="3.6" stroke-linejoin="round" stroke-linecap="round"/><path d="M937.0,788.0 L983.0,831.0 L1000.0,856.6 L1022.6,856.6" fill="none" stroke="#4d7fc4" stroke-width="3.6" stroke-linejoin="round" stroke-linecap="round"/><path d="M1260.3,342.6 L1234.6,366.5 L1234.6,745.0 L1196.3,782.0" fill="none" stroke="#4d7fc4" stroke-width="3.6" stroke-linejoin="round" stroke-linecap="round"/><path d="M1260.2,442.0 L1243.5,458.0 L1243.5,757.0 L1210.4,790.0" fill="none" stroke="#4d7fc4" stroke-width="3.6" stroke-linejoin="round" stroke-linecap="round"/><path d="M1259.4,789.1 L1250.3,798.2 L1250.3,862.0 L1238.9,873.4 L1150.0,873.4" fill="none" stroke="#4d7fc4" stroke-width="3.6" stroke-linejoin="round" stroke-linecap="round"/><path d="M1049.3,1196.0 L1049.3,940.0" fill="none" stroke="#4d7fc4" stroke-width="3.6" stroke-linejoin="round" stroke-linecap="round"/><path d="M1074.0,910.0 L1106.0,880.0" fill="none" stroke="#4d7fc4" stroke-width="3.6" stroke-linejoin="round" stroke-linecap="round"/><path d="M1140.0,1207.0 L1125.8,1194.7 L1125.8,906.0 L1120.0,895.0" fill="none" stroke="#4d7fc4" stroke-width="3.6" stroke-linejoin="round" stroke-linecap="round"/><path d="M1139.0,675.2 L1181.2,716.3" fill="none" stroke="#4d7fc4" stroke-width="3.6" stroke-linejoin="round" stroke-linecap="round"/><path d="M1106.0,700.3 L1100.0,706.0 L1100.0,740.0" fill="none" stroke="#4d7fc4" stroke-width="3.6" stroke-linejoin="round" stroke-linecap="round"/><path d="M1050.6,368.0 L1067.0,348.2 L1142.5,348.2 L1142.5,368.0" fill="none" stroke="#c83434" stroke-width="4" stroke-linejoin="round" stroke-linecap="round"/><path d="M1142.5,348.2 L1181.7,308.4 L1245.5,308.4 L1258.0,297.0" fill="none" stroke="#c83434" stroke-width="4" stroke-linejoin="round" stroke-linecap="round"/><path d="M1047.7,396.0 L1047.7,423.0 L1051.0,459.0" fill="none" stroke="#c83434" stroke-width="4" stroke-linejoin="round" stroke-linecap="round"/><path d="M1064.0,396.0 L1064.0,410.0 L1073.0,417.0" fill="none" stroke="#c83434" stroke-width="4" stroke-linejoin="round" stroke-linecap="round"/><path d="M1123.9,396.0 L1126.0,417.0" fill="none" stroke="#c83434" stroke-width="4" stroke-linejoin="round" stroke-linecap="round"/><path d="M1084.4,398.0 L1084.4,404.0 L1094.0,404.0 L1094.0,368.0" fill="none" stroke="#c83434" stroke-width="3" stroke-linejoin="round" stroke-linecap="round"/><path d="M1094.0,362.0 L1114.0,362.0 L1114.0,396.0" fill="none" stroke="#c83434" stroke-width="3" stroke-linejoin="round" stroke-linecap="round"/><path d="M1104.3,396.0 L1104.3,563.7 L1135.6,600.0 L1158.4,621.7 L1158.4,667.3 L1116.2,709.4 L1112.2,712.0" fill="none" stroke="#c83434" stroke-width="4" stroke-linejoin="round" stroke-linecap="round"/><path d="M1113.9,396.0 L1113.9,462.0 L1117.0,466.0 L1117.0,476.0 L1113.9,480.0 L1113.9,555.0 L1148.1,600.0 L1167.5,616.5 L1167.5,670.7 L1132.2,706.0 L1132.7,712.0" fill="none" stroke="#c83434" stroke-width="4" stroke-linejoin="round" stroke-linecap="round"/><path d="M1069.7,498.0 L1066.9,536.0" fill="none" stroke="#c83434" stroke-width="4" stroke-linejoin="round" stroke-linecap="round"/><path d="M1066.9,536.0 L1120.8,600.0 L1149.3,627.4 L1149.3,654.7 L1119.6,684.3 L1111.1,696.3" fill="none" stroke="#c83434" stroke-width="4" stroke-linejoin="round" stroke-linecap="round"/><path d="M1143.0,633.0 L1149.3,640.0" fill="none" stroke="#c83434" stroke-width="4" stroke-linejoin="round" stroke-linecap="round"/><path d="M1261.3,490.0 L1213.2,537.0 L1213.2,685.5 L1192.6,706.0 L1192.6,760.0 L1196.1,782.0" fill="none" stroke="#c83434" stroke-width="4" stroke-linejoin="round" stroke-linecap="round"/><path d="M1261.0,541.3 L1220.7,578.6 L1220.7,796.0 L1215.3,802.3 L1179.0,802.3" fill="none" stroke="#c83434" stroke-width="4" stroke-linejoin="round" stroke-linecap="round"/><path d="M1261.0,590.4 L1229.2,620.3 L1229.2,802.3 L1219.6,810.9 L1179.0,810.1" fill="none" stroke="#c83434" stroke-width="4" stroke-linejoin="round" stroke-linecap="round"/><path d="M1261.0,689.0 L1236.7,712.6 L1236.7,810.9 L1223.9,819.4 L1179.0,817.9" fill="none" stroke="#c83434" stroke-width="4" stroke-linejoin="round" stroke-linecap="round"/><path d="M1260.0,738.0 L1249.5,749.0 L1249.5,804.5 L1230.3,823.7 L1228.0,825.7 L1179.0,825.7" fill="none" stroke="#c83434" stroke-width="4" stroke-linejoin="round" stroke-linecap="round"/><path d="M1260.0,834.7 L1193.3,834.7 L1186.5,841.3 L1179.0,841.3" fill="none" stroke="#c83434" stroke-width="4" stroke-linejoin="round" stroke-linecap="round"/><path d="M1196.3,782.0 L1182.0,786.7" fill="none" stroke="#c83434" stroke-width="4" stroke-linejoin="round" stroke-linecap="round"/><path d="M1210.4,790.0 L1182.0,794.5" fill="none" stroke="#c83434" stroke-width="4" stroke-linejoin="round" stroke-linecap="round"/><path d="M1259.4,912.2 L1245.7,899.7 L1245.7,880.3 L1228.6,863.2 L1204.7,863.2 L1199.0,858.6 L1179.0,857.5" fill="none" stroke="#c83434" stroke-width="4" stroke-linejoin="round" stroke-linecap="round"/><path d="M1260.0,962.0 L1239.5,944.7 L1239.5,882.6 L1227.5,870.0 L1201.3,870.0 L1193.3,864.3 L1179.0,864.7" fill="none" stroke="#c83434" stroke-width="4" stroke-linejoin="round" stroke-linecap="round"/><path d="M1260.0,1012.0 L1232.4,985.2 L1232.4,884.8 L1223.0,876.9 L1193.0,876.9 L1188.7,872.9 L1179.0,872.5" fill="none" stroke="#c83434" stroke-width="4" stroke-linejoin="round" stroke-linecap="round"/><path d="M1260.0,1062.0 L1223.9,1028.0 L1223.9,891.7 L1218.0,886.0 L1172.8,886.0 L1168.0,880.3" fill="none" stroke="#c83434" stroke-width="4" stroke-linejoin="round" stroke-linecap="round"/><path d="M1260.6,1161.0 L1215.7,1116.0 L1215.7,899.0 L1210.0,894.0 L1150.0,894.0 L1145.0,890.0" fill="none" stroke="#c83434" stroke-width="4" stroke-linejoin="round" stroke-linecap="round"/><path d="M1260.6,1210.0 L1206.7,1157.6 L1206.7,906.0 L1202.0,902.0 L1161.4,902.0 L1155.0,897.0" fill="none" stroke="#c83434" stroke-width="4" stroke-linejoin="round" stroke-linecap="round"/><path d="M1179.0,849.1 L1200.0,849.1 L1215.0,852.0" fill="none" stroke="#c83434" stroke-width="4" stroke-linejoin="round" stroke-linecap="round"/><path d="M938.0,492.0 L950.5,503.3 L950.5,542.0 L959.0,550.0 L959.0,601.3 L965.9,608.1 L965.9,690.0 L981.3,705.0 L981.3,802.0 L989.0,809.6 L1020.0,810.1" fill="none" stroke="#c83434" stroke-width="4" stroke-linejoin="round" stroke-linecap="round"/><path d="M938.0,539.8 L949.4,551.2 L949.4,604.7 L957.4,611.6 L957.4,697.0 L973.4,713.0 L973.4,808.0 L983.0,817.9 L1020.0,817.9" fill="none" stroke="#c83434" stroke-width="4" stroke-linejoin="round" stroke-linecap="round"/><path d="M930.0,594.5 L950.5,612.7 L950.5,705.0 L965.6,720.0 L965.6,815.0 L976.0,825.7 L1020.0,825.7" fill="none" stroke="#c83434" stroke-width="4" stroke-linejoin="round" stroke-linecap="round"/><path d="M937.0,689.0 L943.0,695.0 L943.0,730.0 L958.5,745.0 L958.5,822.0 L969.5,833.5 L1020.0,833.5" fill="none" stroke="#c83434" stroke-width="4" stroke-linejoin="round" stroke-linecap="round"/><path d="M937.0,737.0 L950.6,750.0 L950.6,830.0 L962.0,841.3 L1020.0,841.3" fill="none" stroke="#c83434" stroke-width="4" stroke-linejoin="round" stroke-linecap="round"/><path d="M938.0,836.0 L961.8,863.0 L1020.0,864.7" fill="none" stroke="#c83434" stroke-width="4" stroke-linejoin="round" stroke-linecap="round"/><path d="M1012.6,759.0 L1032.5,778.9 L1020.0,778.9" fill="none" stroke="#c83434" stroke-width="4" stroke-linejoin="round" stroke-linecap="round"/><path d="M993.4,782.0 L1006.0,794.5 L1020.0,794.5" fill="none" stroke="#c83434" stroke-width="4" stroke-linejoin="round" stroke-linecap="round"/><path d="M1008.3,780.5 L1014.0,786.7 L1020.0,786.7" fill="none" stroke="#c83434" stroke-width="4" stroke-linejoin="round" stroke-linecap="round"/><path d="M992.6,798.0 L997.0,802.3 L1020.0,802.3" fill="none" stroke="#c83434" stroke-width="4" stroke-linejoin="round" stroke-linecap="round"/><path d="M1047.4,856.0 L1020.0,856.9" fill="none" stroke="#c83434" stroke-width="4" stroke-linejoin="round" stroke-linecap="round"/><path d="M998.5,852.0 L1004.0,849.1 L1020.0,849.1" fill="none" stroke="#c83434" stroke-width="4" stroke-linejoin="round" stroke-linecap="round"/><path d="M936.6,913.7 L976.0,873.0 L1020.0,872.5" fill="none" stroke="#c83434" stroke-width="4" stroke-linejoin="round" stroke-linecap="round"/><path d="M936.6,962.8 L953.7,945.7 L953.7,908.3 L980.4,880.6 L1020.0,880.3" fill="none" stroke="#c83434" stroke-width="4" stroke-linejoin="round" stroke-linecap="round"/><path d="M936.6,1013.0 L961.2,989.5 L961.2,910.5 L984.7,888.0 L1020.0,888.0" fill="none" stroke="#c83434" stroke-width="4" stroke-linejoin="round" stroke-linecap="round"/><path d="M936.6,1062.0 L969.7,1029.0 L969.7,927.6 L980.4,917.4 L1045.0,917.4 L1055.0,905.0" fill="none" stroke="#c83434" stroke-width="4" stroke-linejoin="round" stroke-linecap="round"/><path d="M936.9,1161.0 L978.5,1121.6 L978.5,934.0 L987.0,925.0 L1054.0,925.0 L1063.0,905.0" fill="none" stroke="#c83434" stroke-width="4" stroke-linejoin="round" stroke-linecap="round"/><path d="M936.9,1210.4 L986.4,1163.2 L986.4,942.0 L995.0,933.4 L1051.0,933.4 L1071.0,905.0" fill="none" stroke="#c83434" stroke-width="4" stroke-linejoin="round" stroke-linecap="round"/><path d="M1025.9,641.6 L1025.9,634.2 L1030.4,628.5 L1049.8,628.5 L1061.2,637.6 L1062.9,641.6" fill="none" stroke="#c83434" stroke-width="4" stroke-linejoin="round" stroke-linecap="round"/><path d="M1062.9,645.6 L1062.9,666.0" fill="none" stroke="#c83434" stroke-width="4" stroke-linejoin="round" stroke-linecap="round"/><path d="M1004.2,665.5 L999.0,665.5 L986.0,677.5 L986.0,699.2 L997.4,709.4 L1008.8,709.4 L1049.7,750.5" fill="none" stroke="#c83434" stroke-width="4" stroke-linejoin="round" stroke-linecap="round"/><path d="M1004.2,675.2 L998.0,675.2 L992.8,682.0 L992.8,696.9 L999.6,701.4 L1013.3,701.4 L1056.7,748.2" fill="none" stroke="#c83434" stroke-width="4" stroke-linejoin="round" stroke-linecap="round"/><path d="M1016.7,694.6 L1020.0,694.6 L1064.0,748.2" fill="none" stroke="#c83434" stroke-width="4" stroke-linejoin="round" stroke-linecap="round"/><path d="M1061.2,698.0 L1061.2,723.1 L1071.6,736.8 L1071.6,750.5" fill="none" stroke="#c83434" stroke-width="4" stroke-linejoin="round" stroke-linecap="round"/><path d="M1073.7,684.9 L1077.0,686.0 L1079.4,690.0 L1079.4,750.5" fill="none" stroke="#c83434" stroke-width="4" stroke-linejoin="round" stroke-linecap="round"/><path d="M1064.6,666.0 L1087.4,686.6 L1087.4,750.5" fill="none" stroke="#c83434" stroke-width="4" stroke-linejoin="round" stroke-linecap="round"/><path d="M1094.6,686.6 L1094.6,750.5" fill="none" stroke="#c83434" stroke-width="4" stroke-linejoin="round" stroke-linecap="round"/><path d="M1116.2,736.8 L1110.0,750.5" fill="none" stroke="#c83434" stroke-width="4" stroke-linejoin="round" stroke-linecap="round"/><path d="M1127.6,736.8 L1117.8,750.5" fill="none" stroke="#c83434" stroke-width="4" stroke-linejoin="round" stroke-linecap="round"/><path d="M1151.6,736.8 L1135.6,750.5" fill="none" stroke="#c83434" stroke-width="4" stroke-linejoin="round" stroke-linecap="round"/><path d="M1170.9,742.5 L1150.0,755.0" fill="none" stroke="#c83434" stroke-width="4" stroke-linejoin="round" stroke-linecap="round"/><path d="M1186.9,723.1 L1193.7,735.6 L1193.7,760.0 L1180.0,779.0" fill="none" stroke="#c83434" stroke-width="4" stroke-linejoin="round" stroke-linecap="round"/><path d="M1143.2,633.4 L1143.2,640.0" fill="none" stroke="#c83434" stroke-width="4" stroke-linejoin="round" stroke-linecap="round"/><path d="M1030.3,968.7 L1061.3,961.2" fill="none" stroke="#c83434" stroke-width="4" stroke-linejoin="round" stroke-linecap="round"/><path d="M1030.3,988.0 L1061.3,994.3" fill="none" stroke="#c83434" stroke-width="4" stroke-linejoin="round" stroke-linecap="round"/><path d="M1104.0,961.2 L1134.0,968.7" fill="none" stroke="#c83434" stroke-width="4" stroke-linejoin="round" stroke-linecap="round"/><path d="M1104.0,994.3 L1134.0,988.0" fill="none" stroke="#c83434" stroke-width="4" stroke-linejoin="round" stroke-linecap="round"/><path d="M1087.0,905.0 L1074.0,925.0 L1074.0,946.0 L1080.0,953.0 L1080.0,972.0 L1068.0,983.0" fill="none" stroke="#c83434" stroke-width="4" stroke-linejoin="round" stroke-linecap="round"/><path d="M1094.4,905.0 L1094.4,930.0 L1091.2,932.4" fill="none" stroke="#c83434" stroke-width="4" stroke-linejoin="round" stroke-linecap="round"/><path d="M1107.2,932.4 L1104.0,961.2" fill="none" stroke="#c83434" stroke-width="4" stroke-linejoin="round" stroke-linecap="round"/><path d="M1101.9,905.0 L1101.9,910.0 L1125.0,930.0 L1134.0,930.0" fill="none" stroke="#c83434" stroke-width="4" stroke-linejoin="round" stroke-linecap="round"/><path d="M1110.0,905.0 L1138.0,914.0 L1154.0,914.0 L1154.0,930.0" fill="none" stroke="#c83434" stroke-width="4" stroke-linejoin="round" stroke-linecap="round"/><rect x="904.8" y="260.5" width="41" height="41" rx="3" fill="none" stroke="#c83434" stroke-width="1"/><rect x="908.3" y="264.0" width="34.0" height="34.0" rx="0" fill="#c83434"/><circle cx="925.3" cy="281.0" r="10.6" fill="#001023" stroke="#e8c22a" stroke-width="2.4"/><text x="925.3" y="279.0" font-family="Liberation Sans" font-size="15" fill="#d6d6d6" text-anchor="middle" font-weight="normal" opacity="0.9">1</text><text x="925.3" y="293.5" font-family="Liberation Mono" font-size="11" fill="rgba(255,232,232,0.78)" text-anchor="middle" textLength="27.25" lengthAdjust="spacingAndGlyphs" font-weight="normal" opacity="1">GPIO0</text><rect x="1252.1" y="260.5" width="41" height="41" rx="3" fill="none" stroke="#c83434" stroke-width="1"/><rect x="1255.6" y="264.0" width="34.0" height="34.0" rx="0" fill="#c83434"/><circle cx="1272.6" cy="281.0" r="10.6" fill="#001023" stroke="#e8c22a" stroke-width="2.4"/><text x="1272.6" y="279.0" font-family="Liberation Sans" font-size="15" fill="#d6d6d6" text-anchor="middle" font-weight="normal" opacity="0.9">1</text><text x="1272.6" y="293.5" font-family="Liberation Mono" font-size="11" fill="rgba(255,232,232,0.78)" text-anchor="middle" textLength="21.8" lengthAdjust="spacingAndGlyphs" font-weight="normal" opacity="1">VBUS</text><circle cx="925.3" cy="330.5" r="20.3" fill="none" stroke="#c83434" stroke-width="1"/><circle cx="925.3" cy="330.5" r="16.9" fill="#c83434" stroke="none" stroke-width="1"/><circle cx="925.3" cy="330.5" r="10.6" fill="#001023" stroke="#e8c22a" stroke-width="2.4"/><text x="925.3" y="328.5" font-family="Liberation Sans" font-size="15" fill="#d6d6d6" text-anchor="middle" font-weight="normal" opacity="0.9">2</text><text x="925.3" y="343.0" font-family="Liberation Mono" font-size="11" fill="rgba(255,232,232,0.78)" text-anchor="middle" textLength="27.25" lengthAdjust="spacingAndGlyphs" font-weight="normal" opacity="1">GPIO1</text><circle cx="1272.6" cy="330.5" r="20.3" fill="none" stroke="#c83434" stroke-width="1"/><circle cx="1272.6" cy="330.5" r="16.9" fill="#c83434" stroke="none" stroke-width="1"/><circle cx="1272.6" cy="330.5" r="10.6" fill="#001023" stroke="#e8c22a" stroke-width="2.4"/><text x="1272.6" y="328.5" font-family="Liberation Sans" font-size="15" fill="#d6d6d6" text-anchor="middle" font-weight="normal" opacity="0.9">2</text><text x="1272.6" y="341.5" font-family="Liberation Mono" font-size="6" fill="rgba(255,232,232,0.7)" text-anchor="middle" textLength="37.4" lengthAdjust="spacingAndGlyphs" font-weight="normal" opacity="1">GPIO29_ADC3</text><circle cx="925.3" cy="380.1" r="20.3" fill="none" stroke="#c83434" stroke-width="1"/><circle cx="925.3" cy="380.1" r="16.9" fill="#c83434" stroke="none" stroke-width="1"/><circle cx="925.3" cy="380.1" r="10.6" fill="#001023" stroke="#e8c22a" stroke-width="2.4"/><text x="925.3" y="378.1" font-family="Liberation Sans" font-size="15" fill="#d6d6d6" text-anchor="middle" font-weight="normal" opacity="0.9">3</text><text x="925.3" y="392.6" font-family="Liberation Mono" font-size="11" fill="rgba(255,232,232,0.78)" text-anchor="middle" textLength="16.35" lengthAdjust="spacingAndGlyphs" font-weight="normal" opacity="1">GND</text><circle cx="1272.6" cy="380.1" r="20.3" fill="none" stroke="#c83434" stroke-width="1"/><circle cx="1272.6" cy="380.1" r="16.9" fill="#c83434" stroke="none" stroke-width="1"/><circle cx="1272.6" cy="380.1" r="10.6" fill="#001023" stroke="#e8c22a" stroke-width="2.4"/><text x="1272.6" y="378.1" font-family="Liberation Sans" font-size="15" fill="#d6d6d6" text-anchor="middle" font-weight="normal" opacity="0.9">3</text><text x="1272.6" y="392.6" font-family="Liberation Mono" font-size="11" fill="rgba(255,232,232,0.78)" text-anchor="middle" textLength="16.35" lengthAdjust="spacingAndGlyphs" font-weight="normal" opacity="1">GND</text><circle cx="925.3" cy="429.6" r="20.3" fill="none" stroke="#c83434" stroke-width="1"/><circle cx="925.3" cy="429.6" r="16.9" fill="#c83434" stroke="none" stroke-width="1"/><circle cx="925.3" cy="429.6" r="10.6" fill="#001023" stroke="#e8c22a" stroke-width="2.4"/><text x="925.3" y="427.6" font-family="Liberation Sans" font-size="15" fill="#d6d6d6" text-anchor="middle" font-weight="normal" opacity="0.9">4</text><text x="925.3" y="442.1" font-family="Liberation Mono" font-size="11" fill="rgba(255,232,232,0.78)" text-anchor="middle" textLength="27.25" lengthAdjust="spacingAndGlyphs" font-weight="normal" opacity="1">GPIO2</text><circle cx="1272.6" cy="429.6" r="20.3" fill="none" stroke="#c83434" stroke-width="1"/><circle cx="1272.6" cy="429.6" r="16.9" fill="#c83434" stroke="none" stroke-width="1"/><circle cx="1272.6" cy="429.6" r="10.6" fill="#001023" stroke="#e8c22a" stroke-width="2.4"/><text x="1272.6" y="427.6" font-family="Liberation Sans" font-size="15" fill="#d6d6d6" text-anchor="middle" font-weight="normal" opacity="0.9">4</text><text x="1272.6" y="440.6" font-family="Liberation Mono" font-size="6" fill="rgba(255,232,232,0.7)" text-anchor="middle" textLength="37.4" lengthAdjust="spacingAndGlyphs" font-weight="normal" opacity="1">GPIO28_ADC2</text><circle cx="925.3" cy="479.2" r="20.3" fill="none" stroke="#c83434" stroke-width="1"/><circle cx="925.3" cy="479.2" r="16.9" fill="#c83434" stroke="none" stroke-width="1"/><circle cx="925.3" cy="479.2" r="10.6" fill="#001023" stroke="#e8c22a" stroke-width="2.4"/><text x="925.3" y="477.2" font-family="Liberation Sans" font-size="15" fill="#d6d6d6" text-anchor="middle" font-weight="normal" opacity="0.9">5</text><text x="925.3" y="491.7" font-family="Liberation Mono" font-size="11" fill="rgba(255,232,232,0.78)" text-anchor="middle" textLength="27.25" lengthAdjust="spacingAndGlyphs" font-weight="normal" opacity="1">GPIO3</text><circle cx="1272.6" cy="479.2" r="20.3" fill="none" stroke="#c83434" stroke-width="1"/><circle cx="1272.6" cy="479.2" r="16.9" fill="#c83434" stroke="none" stroke-width="1"/><circle cx="1272.6" cy="479.2" r="10.6" fill="#001023" stroke="#e8c22a" stroke-width="2.4"/><text x="1272.6" y="477.2" font-family="Liberation Sans" font-size="15" fill="#d6d6d6" text-anchor="middle" font-weight="normal" opacity="0.9">5</text><text x="1272.6" y="491.7" font-family="Liberation Mono" font-size="11" fill="rgba(255,232,232,0.78)" text-anchor="middle" textLength="21.8" lengthAdjust="spacingAndGlyphs" font-weight="normal" opacity="1">+3V3</text><circle cx="925.3" cy="528.7" r="20.3" fill="none" stroke="#c83434" stroke-width="1"/><circle cx="925.3" cy="528.7" r="16.9" fill="#c83434" stroke="none" stroke-width="1"/><circle cx="925.3" cy="528.7" r="10.6" fill="#001023" stroke="#e8c22a" stroke-width="2.4"/><text x="925.3" y="526.7" font-family="Liberation Sans" font-size="15" fill="#d6d6d6" text-anchor="middle" font-weight="normal" opacity="0.9">6</text><text x="925.3" y="541.2" font-family="Liberation Mono" font-size="11" fill="rgba(255,232,232,0.78)" text-anchor="middle" textLength="27.25" lengthAdjust="spacingAndGlyphs" font-weight="normal" opacity="1">GPIO4</text><circle cx="1272.6" cy="528.7" r="20.3" fill="none" stroke="#c83434" stroke-width="1"/><circle cx="1272.6" cy="528.7" r="16.9" fill="#c83434" stroke="none" stroke-width="1"/><circle cx="1272.6" cy="528.7" r="10.6" fill="#001023" stroke="#e8c22a" stroke-width="2.4"/><text x="1272.6" y="526.7" font-family="Liberation Sans" font-size="15" fill="#d6d6d6" text-anchor="middle" font-weight="normal" opacity="0.9">6</text><text x="1272.6" y="539.7" font-family="Liberation Mono" font-size="6" fill="rgba(255,232,232,0.7)" text-anchor="middle" textLength="37.4" lengthAdjust="spacingAndGlyphs" font-weight="normal" opacity="1">GPIO27_ADC1</text><circle cx="925.3" cy="578.2" r="20.3" fill="none" stroke="#c83434" stroke-width="1"/><circle cx="925.3" cy="578.2" r="16.9" fill="#c83434" stroke="none" stroke-width="1"/><circle cx="925.3" cy="578.2" r="10.6" fill="#001023" stroke="#e8c22a" stroke-width="2.4"/><text x="925.3" y="576.2" font-family="Liberation Sans" font-size="15" fill="#d6d6d6" text-anchor="middle" font-weight="normal" opacity="0.9">7</text><text x="925.3" y="590.7" font-family="Liberation Mono" font-size="11" fill="rgba(255,232,232,0.78)" text-anchor="middle" textLength="27.25" lengthAdjust="spacingAndGlyphs" font-weight="normal" opacity="1">GPIO5</text><circle cx="1272.6" cy="578.2" r="20.3" fill="none" stroke="#c83434" stroke-width="1"/><circle cx="1272.6" cy="578.2" r="16.9" fill="#c83434" stroke="none" stroke-width="1"/><circle cx="1272.6" cy="578.2" r="10.6" fill="#001023" stroke="#e8c22a" stroke-width="2.4"/><text x="1272.6" y="576.2" font-family="Liberation Sans" font-size="15" fill="#d6d6d6" text-anchor="middle" font-weight="normal" opacity="0.9">7</text><text x="1272.6" y="589.2" font-family="Liberation Mono" font-size="6" fill="rgba(255,232,232,0.7)" text-anchor="middle" textLength="37.4" lengthAdjust="spacingAndGlyphs" font-weight="normal" opacity="1">GPIO26_ADC0</text><circle cx="925.3" cy="627.8" r="20.3" fill="none" stroke="#c83434" stroke-width="1"/><circle cx="925.3" cy="627.8" r="16.9" fill="#c83434" stroke="none" stroke-width="1"/><circle cx="925.3" cy="627.8" r="10.6" fill="#001023" stroke="#e8c22a" stroke-width="2.4"/><text x="925.3" y="625.8" font-family="Liberation Sans" font-size="15" fill="#d6d6d6" text-anchor="middle" font-weight="normal" opacity="0.9">8</text><text x="925.3" y="640.3" font-family="Liberation Mono" font-size="11" fill="rgba(255,232,232,0.78)" text-anchor="middle" textLength="16.35" lengthAdjust="spacingAndGlyphs" font-weight="normal" opacity="1">GND</text><circle cx="1272.6" cy="627.8" r="20.3" fill="none" stroke="#c83434" stroke-width="1"/><circle cx="1272.6" cy="627.8" r="16.9" fill="#c83434" stroke="none" stroke-width="1"/><circle cx="1272.6" cy="627.8" r="10.6" fill="#001023" stroke="#e8c22a" stroke-width="2.4"/><text x="1272.6" y="625.8" font-family="Liberation Sans" font-size="15" fill="#d6d6d6" text-anchor="middle" font-weight="normal" opacity="0.9">8</text><text x="1272.6" y="640.3" font-family="Liberation Mono" font-size="11" fill="rgba(255,232,232,0.78)" text-anchor="middle" textLength="16.35" lengthAdjust="spacingAndGlyphs" font-weight="normal" opacity="1">GND</text><circle cx="925.3" cy="677.3" r="20.3" fill="none" stroke="#c83434" stroke-width="1"/><circle cx="925.3" cy="677.3" r="16.9" fill="#c83434" stroke="none" stroke-width="1"/><circle cx="925.3" cy="677.3" r="10.6" fill="#001023" stroke="#e8c22a" stroke-width="2.4"/><text x="925.3" y="675.3" font-family="Liberation Sans" font-size="15" fill="#d6d6d6" text-anchor="middle" font-weight="normal" opacity="0.9">9</text><text x="925.3" y="689.8" font-family="Liberation Mono" font-size="11" fill="rgba(255,232,232,0.78)" text-anchor="middle" textLength="27.25" lengthAdjust="spacingAndGlyphs" font-weight="normal" opacity="1">GPIO6</text><circle cx="1272.6" cy="677.3" r="20.3" fill="none" stroke="#c83434" stroke-width="1"/><circle cx="1272.6" cy="677.3" r="16.9" fill="#c83434" stroke="none" stroke-width="1"/><circle cx="1272.6" cy="677.3" r="10.6" fill="#001023" stroke="#e8c22a" stroke-width="2.4"/><text x="1272.6" y="675.3" font-family="Liberation Sans" font-size="15" fill="#d6d6d6" text-anchor="middle" font-weight="normal" opacity="0.9">9</text><text x="1272.6" y="689.8" font-family="Liberation Mono" font-size="11" fill="rgba(255,232,232,0.78)" text-anchor="middle" textLength="32.7" lengthAdjust="spacingAndGlyphs" font-weight="normal" opacity="1">GPIO24</text><circle cx="925.3" cy="726.9" r="20.3" fill="none" stroke="#c83434" stroke-width="1"/><circle cx="925.3" cy="726.9" r="16.9" fill="#c83434" stroke="none" stroke-width="1"/><circle cx="925.3" cy="726.9" r="10.6" fill="#001023" stroke="#e8c22a" stroke-width="2.4"/><text x="925.3" y="724.9" font-family="Liberation Sans" font-size="15" fill="#d6d6d6" text-anchor="middle" font-weight="normal" opacity="0.9">10</text><text x="925.3" y="739.4" font-family="Liberation Mono" font-size="11" fill="rgba(255,232,232,0.78)" text-anchor="middle" textLength="27.25" lengthAdjust="spacingAndGlyphs" font-weight="normal" opacity="1">GPIO7</text><circle cx="1272.6" cy="726.9" r="20.3" fill="none" stroke="#c83434" stroke-width="1"/><circle cx="1272.6" cy="726.9" r="16.9" fill="#c83434" stroke="none" stroke-width="1"/><circle cx="1272.6" cy="726.9" r="10.6" fill="#001023" stroke="#e8c22a" stroke-width="2.4"/><text x="1272.6" y="724.9" font-family="Liberation Sans" font-size="15" fill="#d6d6d6" text-anchor="middle" font-weight="normal" opacity="0.9">10</text><text x="1272.6" y="739.4" font-family="Liberation Mono" font-size="11" fill="rgba(255,232,232,0.78)" text-anchor="middle" textLength="32.7" lengthAdjust="spacingAndGlyphs" font-weight="normal" opacity="1">GPIO23</text><circle cx="925.3" cy="776.4" r="20.3" fill="none" stroke="#c83434" stroke-width="1"/><circle cx="925.3" cy="776.4" r="16.9" fill="#c83434" stroke="none" stroke-width="1"/><circle cx="925.3" cy="776.4" r="10.6" fill="#001023" stroke="#e8c22a" stroke-width="2.4"/><text x="925.3" y="774.4" font-family="Liberation Sans" font-size="15" fill="#d6d6d6" text-anchor="middle" font-weight="normal" opacity="0.9">11</text><text x="925.3" y="788.9" font-family="Liberation Mono" font-size="11" fill="rgba(255,232,232,0.78)" text-anchor="middle" textLength="27.25" lengthAdjust="spacingAndGlyphs" font-weight="normal" opacity="1">GPIO8</text><circle cx="1272.6" cy="776.4" r="20.3" fill="none" stroke="#c83434" stroke-width="1"/><circle cx="1272.6" cy="776.4" r="16.9" fill="#c83434" stroke="none" stroke-width="1"/><circle cx="1272.6" cy="776.4" r="10.6" fill="#001023" stroke="#e8c22a" stroke-width="2.4"/><text x="1272.6" y="774.4" font-family="Liberation Sans" font-size="15" fill="#d6d6d6" text-anchor="middle" font-weight="normal" opacity="0.9">11</text><text x="1272.6" y="788.9" font-family="Liberation Mono" font-size="11" fill="rgba(255,232,232,0.78)" text-anchor="middle" textLength="16.35" lengthAdjust="spacingAndGlyphs" font-weight="normal" opacity="1">RUN</text><circle cx="925.3" cy="825.9" r="20.3" fill="none" stroke="#c83434" stroke-width="1"/><circle cx="925.3" cy="825.9" r="16.9" fill="#c83434" stroke="none" stroke-width="1"/><circle cx="925.3" cy="825.9" r="10.6" fill="#001023" stroke="#e8c22a" stroke-width="2.4"/><text x="925.3" y="823.9" font-family="Liberation Sans" font-size="15" fill="#d6d6d6" text-anchor="middle" font-weight="normal" opacity="0.9">12</text><text x="925.3" y="838.4" font-family="Liberation Mono" font-size="11" fill="rgba(255,232,232,0.78)" text-anchor="middle" textLength="27.25" lengthAdjust="spacingAndGlyphs" font-weight="normal" opacity="1">GPIO9</text><circle cx="1272.6" cy="825.9" r="20.3" fill="none" stroke="#c83434" stroke-width="1"/><circle cx="1272.6" cy="825.9" r="16.9" fill="#c83434" stroke="none" stroke-width="1"/><circle cx="1272.6" cy="825.9" r="10.6" fill="#001023" stroke="#e8c22a" stroke-width="2.4"/><text x="1272.6" y="823.9" font-family="Liberation Sans" font-size="15" fill="#d6d6d6" text-anchor="middle" font-weight="normal" opacity="0.9">12</text><text x="1272.6" y="838.4" font-family="Liberation Mono" font-size="11" fill="rgba(255,232,232,0.78)" text-anchor="middle" textLength="32.7" lengthAdjust="spacingAndGlyphs" font-weight="normal" opacity="1">GPIO22</text><circle cx="925.3" cy="875.5" r="20.3" fill="none" stroke="#c83434" stroke-width="1"/><circle cx="925.3" cy="875.5" r="16.9" fill="#c83434" stroke="none" stroke-width="1"/><circle cx="925.3" cy="875.5" r="10.6" fill="#001023" stroke="#e8c22a" stroke-width="2.4"/><text x="925.3" y="873.5" font-family="Liberation Sans" font-size="15" fill="#d6d6d6" text-anchor="middle" font-weight="normal" opacity="0.9">13</text><text x="925.3" y="888.0" font-family="Liberation Mono" font-size="11" fill="rgba(255,232,232,0.78)" text-anchor="middle" textLength="16.35" lengthAdjust="spacingAndGlyphs" font-weight="normal" opacity="1">GND</text><circle cx="1272.6" cy="875.5" r="20.3" fill="none" stroke="#c83434" stroke-width="1"/><circle cx="1272.6" cy="875.5" r="16.9" fill="#c83434" stroke="none" stroke-width="1"/><circle cx="1272.6" cy="875.5" r="10.6" fill="#001023" stroke="#e8c22a" stroke-width="2.4"/><text x="1272.6" y="873.5" font-family="Liberation Sans" font-size="15" fill="#d6d6d6" text-anchor="middle" font-weight="normal" opacity="0.9">13</text><text x="1272.6" y="888.0" font-family="Liberation Mono" font-size="11" fill="rgba(255,232,232,0.78)" text-anchor="middle" textLength="16.35" lengthAdjust="spacingAndGlyphs" font-weight="normal" opacity="1">GND</text><circle cx="925.3" cy="925.0" r="20.3" fill="none" stroke="#c83434" stroke-width="1"/><circle cx="925.3" cy="925.0" r="16.9" fill="#c83434" stroke="none" stroke-width="1"/><circle cx="925.3" cy="925.0" r="10.6" fill="#001023" stroke="#e8c22a" stroke-width="2.4"/><text x="925.3" y="923.0" font-family="Liberation Sans" font-size="15" fill="#d6d6d6" text-anchor="middle" font-weight="normal" opacity="0.9">14</text><text x="925.3" y="937.5" font-family="Liberation Mono" font-size="11" fill="rgba(255,232,232,0.78)" text-anchor="middle" textLength="32.7" lengthAdjust="spacingAndGlyphs" font-weight="normal" opacity="1">GPIO10</text><circle cx="1272.6" cy="925.0" r="20.3" fill="none" stroke="#c83434" stroke-width="1"/><circle cx="1272.6" cy="925.0" r="16.9" fill="#c83434" stroke="none" stroke-width="1"/><circle cx="1272.6" cy="925.0" r="10.6" fill="#001023" stroke="#e8c22a" stroke-width="2.4"/><text x="1272.6" y="923.0" font-family="Liberation Sans" font-size="15" fill="#d6d6d6" text-anchor="middle" font-weight="normal" opacity="0.9">14</text><text x="1272.6" y="937.5" font-family="Liberation Mono" font-size="11" fill="rgba(255,232,232,0.78)" text-anchor="middle" textLength="32.7" lengthAdjust="spacingAndGlyphs" font-weight="normal" opacity="1">GPIO21</text><circle cx="925.3" cy="974.6" r="20.3" fill="none" stroke="#c83434" stroke-width="1"/><circle cx="925.3" cy="974.6" r="16.9" fill="#c83434" stroke="none" stroke-width="1"/><circle cx="925.3" cy="974.6" r="10.6" fill="#001023" stroke="#e8c22a" stroke-width="2.4"/><text x="925.3" y="972.6" font-family="Liberation Sans" font-size="15" fill="#d6d6d6" text-anchor="middle" font-weight="normal" opacity="0.9">15</text><text x="925.3" y="987.1" font-family="Liberation Mono" font-size="11" fill="rgba(255,232,232,0.78)" text-anchor="middle" textLength="32.7" lengthAdjust="spacingAndGlyphs" font-weight="normal" opacity="1">GPIO11</text><circle cx="1272.6" cy="974.6" r="20.3" fill="none" stroke="#c83434" stroke-width="1"/><circle cx="1272.6" cy="974.6" r="16.9" fill="#c83434" stroke="none" stroke-width="1"/><circle cx="1272.6" cy="974.6" r="10.6" fill="#001023" stroke="#e8c22a" stroke-width="2.4"/><text x="1272.6" y="972.6" font-family="Liberation Sans" font-size="15" fill="#d6d6d6" text-anchor="middle" font-weight="normal" opacity="0.9">15</text><text x="1272.6" y="987.1" font-family="Liberation Mono" font-size="11" fill="rgba(255,232,232,0.78)" text-anchor="middle" textLength="32.7" lengthAdjust="spacingAndGlyphs" font-weight="normal" opacity="1">GPIO20</text><circle cx="925.3" cy="1024.1" r="20.3" fill="none" stroke="#c83434" stroke-width="1"/><circle cx="925.3" cy="1024.1" r="16.9" fill="#c83434" stroke="none" stroke-width="1"/><circle cx="925.3" cy="1024.1" r="10.6" fill="#001023" stroke="#e8c22a" stroke-width="2.4"/><text x="925.3" y="1022.1" font-family="Liberation Sans" font-size="15" fill="#d6d6d6" text-anchor="middle" font-weight="normal" opacity="0.9">16</text><text x="925.3" y="1036.6" font-family="Liberation Mono" font-size="11" fill="rgba(255,232,232,0.78)" text-anchor="middle" textLength="32.7" lengthAdjust="spacingAndGlyphs" font-weight="normal" opacity="1">GPIO12</text><circle cx="1272.6" cy="1024.1" r="20.3" fill="none" stroke="#c83434" stroke-width="1"/><circle cx="1272.6" cy="1024.1" r="16.9" fill="#c83434" stroke="none" stroke-width="1"/><circle cx="1272.6" cy="1024.1" r="10.6" fill="#001023" stroke="#e8c22a" stroke-width="2.4"/><text x="1272.6" y="1022.1" font-family="Liberation Sans" font-size="15" fill="#d6d6d6" text-anchor="middle" font-weight="normal" opacity="0.9">16</text><text x="1272.6" y="1036.6" font-family="Liberation Mono" font-size="11" fill="rgba(255,232,232,0.78)" text-anchor="middle" textLength="32.7" lengthAdjust="spacingAndGlyphs" font-weight="normal" opacity="1">GPIO19</text><circle cx="925.3" cy="1073.6" r="20.3" fill="none" stroke="#c83434" stroke-width="1"/><circle cx="925.3" cy="1073.6" r="16.9" fill="#c83434" stroke="none" stroke-width="1"/><circle cx="925.3" cy="1073.6" r="10.6" fill="#001023" stroke="#e8c22a" stroke-width="2.4"/><text x="925.3" y="1071.6" font-family="Liberation Sans" font-size="15" fill="#d6d6d6" text-anchor="middle" font-weight="normal" opacity="0.9">17</text><text x="925.3" y="1086.1" font-family="Liberation Mono" font-size="11" fill="rgba(255,232,232,0.78)" text-anchor="middle" textLength="32.7" lengthAdjust="spacingAndGlyphs" font-weight="normal" opacity="1">GPIO13</text><circle cx="1272.6" cy="1073.6" r="20.3" fill="none" stroke="#c83434" stroke-width="1"/><circle cx="1272.6" cy="1073.6" r="16.9" fill="#c83434" stroke="none" stroke-width="1"/><circle cx="1272.6" cy="1073.6" r="10.6" fill="#001023" stroke="#e8c22a" stroke-width="2.4"/><text x="1272.6" y="1071.6" font-family="Liberation Sans" font-size="15" fill="#d6d6d6" text-anchor="middle" font-weight="normal" opacity="0.9">17</text><text x="1272.6" y="1086.1" font-family="Liberation Mono" font-size="11" fill="rgba(255,232,232,0.78)" text-anchor="middle" textLength="32.7" lengthAdjust="spacingAndGlyphs" font-weight="normal" opacity="1">GPIO18</text><circle cx="925.3" cy="1123.2" r="20.3" fill="none" stroke="#c83434" stroke-width="1"/><circle cx="925.3" cy="1123.2" r="16.9" fill="#c83434" stroke="none" stroke-width="1"/><circle cx="925.3" cy="1123.2" r="10.6" fill="#001023" stroke="#e8c22a" stroke-width="2.4"/><text x="925.3" y="1121.2" font-family="Liberation Sans" font-size="15" fill="#d6d6d6" text-anchor="middle" font-weight="normal" opacity="0.9">18</text><text x="925.3" y="1135.7" font-family="Liberation Mono" font-size="11" fill="rgba(255,232,232,0.78)" text-anchor="middle" textLength="16.35" lengthAdjust="spacingAndGlyphs" font-weight="normal" opacity="1">GND</text><circle cx="1272.6" cy="1123.2" r="20.3" fill="none" stroke="#c83434" stroke-width="1"/><circle cx="1272.6" cy="1123.2" r="16.9" fill="#c83434" stroke="none" stroke-width="1"/><circle cx="1272.6" cy="1123.2" r="10.6" fill="#001023" stroke="#e8c22a" stroke-width="2.4"/><text x="1272.6" y="1121.2" font-family="Liberation Sans" font-size="15" fill="#d6d6d6" text-anchor="middle" font-weight="normal" opacity="0.9">18</text><text x="1272.6" y="1135.7" font-family="Liberation Mono" font-size="11" fill="rgba(255,232,232,0.78)" text-anchor="middle" textLength="16.35" lengthAdjust="spacingAndGlyphs" font-weight="normal" opacity="1">GND</text><circle cx="925.3" cy="1172.7" r="20.3" fill="none" stroke="#c83434" stroke-width="1"/><circle cx="925.3" cy="1172.7" r="16.9" fill="#c83434" stroke="none" stroke-width="1"/><circle cx="925.3" cy="1172.7" r="10.6" fill="#001023" stroke="#e8c22a" stroke-width="2.4"/><text x="925.3" y="1170.7" font-family="Liberation Sans" font-size="15" fill="#d6d6d6" text-anchor="middle" font-weight="normal" opacity="0.9">19</text><text x="925.3" y="1185.2" font-family="Liberation Mono" font-size="11" fill="rgba(255,232,232,0.78)" text-anchor="middle" textLength="32.7" lengthAdjust="spacingAndGlyphs" font-weight="normal" opacity="1">GPIO14</text><circle cx="1272.6" cy="1172.7" r="20.3" fill="none" stroke="#c83434" stroke-width="1"/><circle cx="1272.6" cy="1172.7" r="16.9" fill="#c83434" stroke="none" stroke-width="1"/><circle cx="1272.6" cy="1172.7" r="10.6" fill="#001023" stroke="#e8c22a" stroke-width="2.4"/><text x="1272.6" y="1170.7" font-family="Liberation Sans" font-size="15" fill="#d6d6d6" text-anchor="middle" font-weight="normal" opacity="0.9">19</text><text x="1272.6" y="1185.2" font-family="Liberation Mono" font-size="11" fill="rgba(255,232,232,0.78)" text-anchor="middle" textLength="32.7" lengthAdjust="spacingAndGlyphs" font-weight="normal" opacity="1">GPIO17</text><circle cx="925.3" cy="1222.3" r="20.3" fill="none" stroke="#c83434" stroke-width="1"/><circle cx="925.3" cy="1222.3" r="16.9" fill="#c83434" stroke="none" stroke-width="1"/><circle cx="925.3" cy="1222.3" r="10.6" fill="#001023" stroke="#e8c22a" stroke-width="2.4"/><text x="925.3" y="1220.3" font-family="Liberation Sans" font-size="15" fill="#d6d6d6" text-anchor="middle" font-weight="normal" opacity="0.9">20</text><text x="925.3" y="1234.8" font-family="Liberation Mono" font-size="11" fill="rgba(255,232,232,0.78)" text-anchor="middle" textLength="32.7" lengthAdjust="spacingAndGlyphs" font-weight="normal" opacity="1">GPIO15</text><circle cx="1272.6" cy="1222.3" r="20.3" fill="none" stroke="#c83434" stroke-width="1"/><circle cx="1272.6" cy="1222.3" r="16.9" fill="#c83434" stroke="none" stroke-width="1"/><circle cx="1272.6" cy="1222.3" r="10.6" fill="#001023" stroke="#e8c22a" stroke-width="2.4"/><text x="1272.6" y="1220.3" font-family="Liberation Sans" font-size="15" fill="#d6d6d6" text-anchor="middle" font-weight="normal" opacity="0.9">20</text><text x="1272.6" y="1234.8" font-family="Liberation Mono" font-size="11" fill="rgba(255,232,232,0.78)" text-anchor="middle" textLength="32.7" lengthAdjust="spacingAndGlyphs" font-weight="normal" opacity="1">GPIO16</text><rect x="995.4" y="222.4" width="207.3" height="182.8" rx="0" fill="none" stroke="#ff26e2" stroke-width="1.2"/><path d="M1011.4,341.0 L1011.4,231.4 L1187.0,231.4 L1187.0,340.0" fill="none" stroke="#afafaf" stroke-width="2" stroke-linejoin="round" stroke-linecap="round"/><path d="M1040.0,374.6 L1160.0,374.6" fill="none" stroke="#afafaf" stroke-width="2" stroke-linejoin="round" stroke-linecap="round"/><ellipse cx="1014.5" cy="282" rx="14" ry="19.5" fill="none" stroke="#c83434" stroke-width="1"/><rect x="1004.8" y="265.5" width="19.4" height="33" rx="9.7" fill="#c83434"/><rect x="1007.3" y="268.5" width="14.4" height="27" rx="7.2" fill="#001023" stroke="#e8c22a" stroke-width="2.4"/><text x="1011.5" y="282.0" font-family="Liberation Sans" font-size="9" fill="rgba(230,230,230,0.8)" text-anchor="middle" transform="rotate(-90 1011.5 282.0)" font-weight="normal" opacity="1">S1</text><text x="1021.5" y="282.0" font-family="Liberation Sans" font-size="7" fill="rgba(230,230,230,0.8)" text-anchor="middle" transform="rotate(-90 1021.5 282.0)" font-weight="normal" opacity="1">GND</text><ellipse cx="1014.5" cy="363.2" rx="14" ry="19.5" fill="none" stroke="#c83434" stroke-width="1"/><rect x="1004.8" y="346.7" width="19.4" height="33" rx="9.7" fill="#c83434"/><rect x="1007.3" y="349.7" width="14.4" height="27" rx="7.2" fill="#001023" stroke="#e8c22a" stroke-width="2.4"/><text x="1011.5" y="363.2" font-family="Liberation Sans" font-size="9" fill="rgba(230,230,230,0.8)" text-anchor="middle" transform="rotate(-90 1011.5 363.2)" font-weight="normal" opacity="1">S1</text><text x="1021.5" y="363.2" font-family="Liberation Sans" font-size="7" fill="rgba(230,230,230,0.8)" text-anchor="middle" transform="rotate(-90 1021.5 363.2)" font-weight="normal" opacity="1">GND</text><ellipse cx="1183.8" cy="282" rx="14" ry="19.5" fill="none" stroke="#c83434" stroke-width="1"/><rect x="1174.1" y="265.5" width="19.4" height="33" rx="9.7" fill="#c83434"/><rect x="1176.6" y="268.5" width="14.4" height="27" rx="7.2" fill="#001023" stroke="#e8c22a" stroke-width="2.4"/><text x="1180.8" y="282.0" font-family="Liberation Sans" font-size="9" fill="rgba(230,230,230,0.8)" text-anchor="middle" transform="rotate(-90 1180.8 282.0)" font-weight="normal" opacity="1">S1</text><text x="1190.8" y="282.0" font-family="Liberation Sans" font-size="7" fill="rgba(230,230,230,0.8)" text-anchor="middle" transform="rotate(-90 1190.8 282.0)" font-weight="normal" opacity="1">GND</text><ellipse cx="1183.8" cy="363.2" rx="14" ry="19.5" fill="none" stroke="#c83434" stroke-width="1"/><rect x="1174.1" y="346.7" width="19.4" height="33" rx="9.7" fill="#c83434"/><rect x="1176.6" y="349.7" width="14.4" height="27" rx="7.2" fill="#001023" stroke="#e8c22a" stroke-width="2.4"/><text x="1180.8" y="363.2" font-family="Liberation Sans" font-size="9" fill="rgba(230,230,230,0.8)" text-anchor="middle" transform="rotate(-90 1180.8 363.2)" font-weight="normal" opacity="1">S1</text><text x="1190.8" y="363.2" font-family="Liberation Sans" font-size="7" fill="rgba(230,230,230,0.8)" text-anchor="middle" transform="rotate(-90 1190.8 363.2)" font-weight="normal" opacity="1">GND</text><circle cx="1042.4" cy="353.2" r="11" fill="none" stroke="#c83434" stroke-width="1"/><circle cx="1042.4" cy="353.2" r="6" fill="#1ac4d2" stroke="none" stroke-width="1"/><circle cx="1155.3" cy="353.2" r="11" fill="none" stroke="#c83434" stroke-width="1"/><circle cx="1155.3" cy="353.2" r="6" fill="#1ac4d2" stroke="none" stroke-width="1"/><rect x="1026.8" y="364" width="18.5" height="35" rx="4" fill="none" stroke="#c83434" stroke-width="0.9"/><rect x="1029.8" y="368.2" width="12.5" height="27.8" rx="0" fill="#c83434"/><rect x="1041.8" y="364" width="18.5" height="35" rx="4" fill="none" stroke="#c83434" stroke-width="0.9"/><rect x="1044.8" y="368.2" width="12.5" height="27.8" rx="0" fill="#c83434"/><rect x="1058.7" y="364" width="12.5" height="35" rx="4" fill="none" stroke="#c83434" stroke-width="0.9"/><rect x="1061.7" y="368.2" width="6.5" height="27.8" rx="0" fill="#c83434"/><rect x="1068.3" y="364" width="12.5" height="35" rx="4" fill="none" stroke="#c83434" stroke-width="0.9"/><rect x="1071.3" y="368.2" width="6.5" height="27.8" rx="0" fill="#c83434"/><rect x="1078.2" y="364" width="12.5" height="35" rx="4" fill="none" stroke="#c83434" stroke-width="0.9"/><rect x="1081.2" y="368.2" width="6.5" height="27.8" rx="0" fill="#c83434"/><rect x="1087.8" y="364" width="12.5" height="35" rx="4" fill="none" stroke="#c83434" stroke-width="0.9"/><rect x="1090.8" y="368.2" width="6.5" height="27.8" rx="0" fill="#c83434"/><rect x="1097.7" y="364" width="12.5" height="35" rx="4" fill="none" stroke="#c83434" stroke-width="0.9"/><rect x="1100.7" y="368.2" width="6.5" height="27.8" rx="0" fill="#c83434"/><rect x="1107.3" y="364" width="12.5" height="35" rx="4" fill="none" stroke="#c83434" stroke-width="0.9"/><rect x="1110.3" y="368.2" width="6.5" height="27.8" rx="0" fill="#c83434"/><rect x="1117.2" y="364" width="12.5" height="35" rx="4" fill="none" stroke="#c83434" stroke-width="0.9"/><rect x="1120.2" y="368.2" width="6.5" height="27.8" rx="0" fill="#c83434"/><rect x="1126.8" y="364" width="12.5" height="35" rx="4" fill="none" stroke="#c83434" stroke-width="0.9"/><rect x="1129.8" y="368.2" width="6.5" height="27.8" rx="0" fill="#c83434"/><rect x="1137.8" y="364" width="18.5" height="35" rx="4" fill="none" stroke="#c83434" stroke-width="0.9"/><rect x="1140.8" y="368.2" width="12.5" height="27.8" rx="0" fill="#c83434"/><rect x="1152.8" y="364" width="18.5" height="35" rx="4" fill="none" stroke="#c83434" stroke-width="0.9"/><rect x="1155.8" y="368.2" width="12.5" height="27.8" rx="0" fill="#c83434"/><text x="1099.0" y="313.0" font-family="Liberation Mono" font-size="34" fill="#afafaf" text-anchor="middle" textLength="30" lengthAdjust="spacingAndGlyphs" stroke="#afafaf" stroke-width="0.6" font-weight="normal" opacity="1">J1</text><path d="M1093,304h12M1099,298v12" stroke="#ff26e2" stroke-width="1"/><rect x="1003.2" y="409.6" width="58.3" height="28.1" rx="0" fill="none" stroke="#ff26e2" stroke-width="1.2"/><rect x="1006.1" y="411.4" width="23.0" height="24.0" rx="7" fill="none" stroke="#c83434" stroke-width="0.9"/><rect x="1009.1" y="414.4" width="17.0" height="18.0" rx="4" fill="#c83434"/><rect x="1036.8" y="411.4" width="23.0" height="24.0" rx="7" fill="none" stroke="#c83434" stroke-width="0.9"/><rect x="1039.8" y="414.4" width="17.0" height="18.0" rx="4" fill="#c83434"/><rect x="1065.8" y="409.5" width="15.0" height="15.0" rx="4.5" fill="none" stroke="#c83434" stroke-width="0.9"/><rect x="1068.3" y="412.0" width="10.0" height="10.0" rx="2" fill="#c83434"/><rect x="1065.8" y="430.9" width="15.0" height="15.0" rx="4.5" fill="none" stroke="#c83434" stroke-width="0.9"/><rect x="1068.3" y="433.4" width="10.0" height="10.0" rx="2" fill="#c83434"/><rect x="1064.3" y="409.0" width="18.0" height="37.4" rx="0" fill="none" stroke="#ff26e2" stroke-width="1"/><rect x="1118.5" y="409.4" width="15.0" height="15.0" rx="4.5" fill="none" stroke="#c83434" stroke-width="0.9"/><rect x="1121.0" y="411.9" width="10.0" height="10.0" rx="2" fill="#c83434"/><rect x="1118.5" y="429.2" width="15.0" height="15.0" rx="4.5" fill="none" stroke="#c83434" stroke-width="0.9"/><rect x="1121.0" y="431.7" width="10.0" height="10.0" rx="2" fill="#c83434"/><rect x="1117.0" y="408.9" width="18.0" height="35.7" rx="0" fill="none" stroke="#ff26e2" stroke-width="1"/><path d="M1040.5,462.6 L1040.5,442.0 L1061.9,442.0 L1061.9,462.6 L1084.7,462.6 L1084.7,497.5 L1018.2,497.5 L1018.2,462.6 L1040.5,462.6" fill="none" stroke="#ff26e2" stroke-width="1.2" stroke-linejoin="round" stroke-linecap="round"/><rect x="1023.4" y="466.9" width="57.0" height="25.6" rx="0" fill="none" stroke="#afafaf" stroke-width="2"/><rect x="1042.2" y="440.5" width="18.0" height="37.0" rx="8" fill="none" stroke="#c83434" stroke-width="0.9"/><rect x="1045.2" y="443.5" width="12.0" height="31.0" rx="5" fill="#c83434"/><rect x="1023.3" y="481.2" width="17.4" height="34.0" rx="8" fill="none" stroke="#c83434" stroke-width="0.9"/><rect x="1026.3" y="484.2" width="11.4" height="28.0" rx="5" fill="#c83434"/><rect x="1061.0" y="481.2" width="17.4" height="34.0" rx="8" fill="none" stroke="#c83434" stroke-width="0.9"/><rect x="1064.0" y="484.2" width="11.4" height="28.0" rx="5" fill="#c83434"/><rect x="1022.4" y="496.8" width="58.0" height="20.6" rx="0" fill="none" stroke="#ff26e2" stroke-width="1.2"/><rect x="1023.4" y="521.7" width="58.0" height="28.9" rx="0" fill="none" stroke="#ff26e2" stroke-width="1.2"/><rect x="1024.8" y="524.0" width="23.0" height="24.0" rx="7" fill="none" stroke="#c83434" stroke-width="0.9"/><rect x="1027.8" y="527.0" width="17.0" height="18.0" rx="4" fill="#c83434"/><rect x="1055.4" y="524.0" width="23.0" height="24.0" rx="7" fill="none" stroke="#c83434" stroke-width="0.9"/><rect x="1058.4" y="527.0" width="17.0" height="18.0" rx="4" fill="#c83434"/><rect x="998.4" y="634.1" width="15.0" height="15.0" rx="4.5" fill="none" stroke="#c83434" stroke-width="0.9"/><rect x="1000.9" y="636.6" width="10.0" height="10.0" rx="2" fill="#c83434"/><rect x="1017.8" y="634.1" width="15.0" height="15.0" rx="4.5" fill="none" stroke="#c83434" stroke-width="0.9"/><rect x="1020.3" y="636.6" width="10.0" height="10.0" rx="2" fill="#c83434"/><rect x="997.9" y="632.6" width="35.5" height="18.0" rx="0" fill="none" stroke="#ff26e2" stroke-width="1"/><rect x="1038.1" y="634.1" width="15.0" height="15.0" rx="4.5" fill="none" stroke="#c83434" stroke-width="0.9"/><rect x="1040.6" y="636.6" width="10.0" height="10.0" rx="2" fill="#c83434"/><rect x="1055.9" y="634.1" width="15.0" height="15.0" rx="4.5" fill="none" stroke="#c83434" stroke-width="0.9"/><rect x="1058.4" y="636.6" width="10.0" height="10.0" rx="2" fill="#c83434"/><rect x="1037.6" y="632.6" width="33.8" height="18.0" rx="0" fill="none" stroke="#ff26e2" stroke-width="1"/><rect x="995.4" y="657.3" width="83.1" height="46.4" rx="0" fill="none" stroke="#ff26e2" stroke-width="1.2"/><rect x="997.5" y="660.5" width="23.6" height="11.5" rx="5.5" fill="none" stroke="#c83434" stroke-width="0.9"/><rect x="1000.0" y="663.0" width="18.6" height="6.5" rx="3" fill="#c83434"/><rect x="1052.7" y="660.5" width="23.6" height="11.5" rx="5.5" fill="none" stroke="#c83434" stroke-width="0.9"/><rect x="1055.2" y="663.0" width="18.6" height="6.5" rx="3" fill="#c83434"/><rect x="997.5" y="670.2" width="23.6" height="11.5" rx="5.5" fill="none" stroke="#c83434" stroke-width="0.9"/><rect x="1000.0" y="672.8" width="18.6" height="6.5" rx="3" fill="#c83434"/><rect x="1052.7" y="670.2" width="23.6" height="11.5" rx="5.5" fill="none" stroke="#c83434" stroke-width="0.9"/><rect x="1055.2" y="672.8" width="18.6" height="6.5" rx="3" fill="#c83434"/><rect x="997.5" y="680.0" width="23.6" height="11.5" rx="5.5" fill="none" stroke="#c83434" stroke-width="0.9"/><rect x="1000.0" y="682.5" width="18.6" height="6.5" rx="3" fill="#c83434"/><rect x="1052.7" y="680.0" width="23.6" height="11.5" rx="5.5" fill="none" stroke="#c83434" stroke-width="0.9"/><rect x="1055.2" y="682.5" width="18.6" height="6.5" rx="3" fill="#c83434"/><rect x="997.5" y="689.0" width="23.6" height="11.5" rx="5.5" fill="none" stroke="#c83434" stroke-width="0.9"/><rect x="1000.0" y="691.5" width="18.6" height="6.5" rx="3" fill="#c83434"/><rect x="1052.7" y="689.0" width="23.6" height="11.5" rx="5.5" fill="none" stroke="#c83434" stroke-width="0.9"/><rect x="1055.2" y="691.5" width="18.6" height="6.5" rx="3" fill="#c83434"/><rect x="1030" y="662" width="13" height="35" rx="6" fill="none" stroke="#c83434" stroke-width="0.9"/><rect x="1033.6" y="664.7" width="6.0" height="30.0" rx="0" fill="#c83434"/><rect x="1091.9" y="655.8" width="15.0" height="15.0" rx="4.5" fill="none" stroke="#c83434" stroke-width="0.9"/><rect x="1094.4" y="658.3" width="10.0" height="10.0" rx="2" fill="#c83434"/><rect x="1091.9" y="672.2" width="15.0" height="15.0" rx="4.5" fill="none" stroke="#c83434" stroke-width="0.9"/><rect x="1094.4" y="674.7" width="10.0" height="10.0" rx="2" fill="#c83434"/><rect x="1090.4" y="655.3" width="18.0" height="32.4" rx="0" fill="none" stroke="#ff26e2" stroke-width="1"/><rect x="1111.3" y="655.8" width="15.0" height="15.0" rx="4.5" fill="none" stroke="#c83434" stroke-width="0.9"/><rect x="1113.8" y="658.3" width="10.0" height="10.0" rx="2" fill="#c83434"/><rect x="1111.3" y="672.2" width="15.0" height="15.0" rx="4.5" fill="none" stroke="#c83434" stroke-width="0.9"/><rect x="1113.8" y="674.7" width="10.0" height="10.0" rx="2" fill="#c83434"/><rect x="1109.8" y="655.3" width="18.0" height="32.4" rx="0" fill="none" stroke="#ff26e2" stroke-width="1"/><rect x="1130.8" y="642.2" width="15.0" height="15.0" rx="4.5" fill="none" stroke="#c83434" stroke-width="0.9"/><rect x="1133.3" y="644.8" width="10.0" height="10.0" rx="2" fill="#c83434"/><rect x="1130.8" y="658.0" width="15.0" height="15.0" rx="4.5" fill="none" stroke="#c83434" stroke-width="0.9"/><rect x="1133.3" y="660.5" width="10.0" height="10.0" rx="2" fill="#c83434"/><rect x="1129.3" y="641.8" width="18.0" height="31.7" rx="0" fill="none" stroke="#ff26e2" stroke-width="1"/><rect x="1104.5" y="705.1" width="15.0" height="15.0" rx="4.5" fill="none" stroke="#c83434" stroke-width="0.9"/><rect x="1107.0" y="707.6" width="10.0" height="10.0" rx="2" fill="#c83434"/><rect x="1104.5" y="722.3" width="15.0" height="15.0" rx="4.5" fill="none" stroke="#c83434" stroke-width="0.9"/><rect x="1107.0" y="724.8" width="10.0" height="10.0" rx="2" fill="#c83434"/><rect x="1103.0" y="704.6" width="18.0" height="33.2" rx="0" fill="none" stroke="#ff26e2" stroke-width="1"/><rect x="1125.5" y="705.1" width="15.0" height="15.0" rx="4.5" fill="none" stroke="#c83434" stroke-width="0.9"/><rect x="1128.0" y="707.6" width="10.0" height="10.0" rx="2" fill="#c83434"/><rect x="1125.5" y="722.3" width="15.0" height="15.0" rx="4.5" fill="none" stroke="#c83434" stroke-width="0.9"/><rect x="1128.0" y="724.8" width="10.0" height="10.0" rx="2" fill="#c83434"/><rect x="1124.0" y="704.6" width="18.0" height="33.2" rx="0" fill="none" stroke="#ff26e2" stroke-width="1"/><rect x="1144.2" y="712.5" width="15.0" height="15.0" rx="4.5" fill="none" stroke="#c83434" stroke-width="0.9"/><rect x="1146.7" y="715.0" width="10.0" height="10.0" rx="2" fill="#c83434"/><rect x="1144.2" y="729.8" width="15.0" height="15.0" rx="4.5" fill="none" stroke="#c83434" stroke-width="0.9"/><rect x="1146.7" y="732.2" width="10.0" height="10.0" rx="2" fill="#c83434"/><rect x="1142.7" y="712.0" width="18.0" height="33.3" rx="0" fill="none" stroke="#ff26e2" stroke-width="1"/><rect x="1163.7" y="717.0" width="15.0" height="15.0" rx="4.5" fill="none" stroke="#c83434" stroke-width="0.9"/><rect x="1166.2" y="719.5" width="10.0" height="10.0" rx="2" fill="#c83434"/><rect x="1163.7" y="738.0" width="15.0" height="15.0" rx="4.5" fill="none" stroke="#c83434" stroke-width="0.9"/><rect x="1166.2" y="740.5" width="10.0" height="10.0" rx="2" fill="#c83434"/><rect x="1162.2" y="716.5" width="18.0" height="36.9" rx="0" fill="none" stroke="#ff26e2" stroke-width="1"/><rect x="1181.5" y="756.0" width="15.0" height="15.0" rx="4.5" fill="none" stroke="#c83434" stroke-width="0.9"/><rect x="1184.0" y="758.5" width="10.0" height="10.0" rx="2" fill="#c83434"/><rect x="1198.1" y="756.0" width="15.0" height="15.0" rx="4.5" fill="none" stroke="#c83434" stroke-width="0.9"/><rect x="1200.6" y="758.5" width="10.0" height="10.0" rx="2" fill="#c83434"/><rect x="1181.0" y="754.5" width="32.6" height="18.0" rx="0" fill="none" stroke="#ff26e2" stroke-width="1"/><rect x="987.1" y="751.5" width="15.0" height="15.0" rx="4.5" fill="none" stroke="#c83434" stroke-width="0.9"/><rect x="989.6" y="754.0" width="10.0" height="10.0" rx="2" fill="#c83434"/><rect x="1005.9" y="751.5" width="15.0" height="15.0" rx="4.5" fill="none" stroke="#c83434" stroke-width="0.9"/><rect x="1008.4" y="754.0" width="10.0" height="10.0" rx="2" fill="#c83434"/><rect x="986.6" y="750.0" width="34.7" height="18.0" rx="0" fill="none" stroke="#ff26e2" stroke-width="1"/><rect x="974.0" y="844.5" width="15.0" height="15.0" rx="4.5" fill="none" stroke="#c83434" stroke-width="0.9"/><rect x="976.5" y="847.0" width="10.0" height="10.0" rx="2" fill="#c83434"/><rect x="991.0" y="844.5" width="15.0" height="15.0" rx="4.5" fill="none" stroke="#c83434" stroke-width="0.9"/><rect x="993.5" y="847.0" width="10.0" height="10.0" rx="2" fill="#c83434"/><rect x="973.5" y="843.0" width="33.0" height="18.0" rx="0" fill="none" stroke="#ff26e2" stroke-width="1"/><rect x="1199.0" y="844.5" width="15.0" height="15.0" rx="4.5" fill="none" stroke="#c83434" stroke-width="0.9"/><rect x="1201.5" y="847.0" width="10.0" height="10.0" rx="2" fill="#c83434"/><rect x="1216.0" y="844.5" width="15.0" height="15.0" rx="4.5" fill="none" stroke="#c83434" stroke-width="0.9"/><rect x="1218.5" y="847.0" width="10.0" height="10.0" rx="2" fill="#c83434"/><rect x="1198.5" y="843.0" width="33.0" height="18.0" rx="0" fill="none" stroke="#ff26e2" stroke-width="1"/><path d="M1207,705 L1227,724.6 L1207,744 L1187,724.6 Z" fill="none" stroke="#ff26e2" stroke-width="1.1"/><rect x="1205.5" y="715.5" width="9.0" height="9.0" rx="2" fill="#c83434"/><rect x="1018.7" y="749.4" width="160.6" height="160.6" rx="0" fill="none" stroke="#ff26e2" stroke-width="1.2"/><path d="M1042.0,760.4 L1168.4,760.4 L1168.4,899.0 L1029.7,899.0 L1029.7,772.6 Z" fill="none" stroke="#afafaf" stroke-width="2" stroke-linejoin="round" stroke-linecap="round"/><rect x="1045.1" y="748" width="7.2" height="26" rx="3.6" fill="none" stroke="#c83434" stroke-width="0.8"/><rect x="1046.8" y="751.2" width="3.9" height="19.0" rx="0" fill="#c83434"/><rect x="1045.1" y="884" width="7.2" height="26" rx="3.6" fill="none" stroke="#c83434" stroke-width="0.8"/><rect x="1046.8" y="887.5" width="3.9" height="19.0" rx="0" fill="#c83434"/><rect x="1017" y="775.3" width="27" height="7.2" rx="3.6" fill="none" stroke="#c83434" stroke-width="0.8"/><rect x="1020.4" y="776.9" width="21.0" height="3.9" rx="0" fill="#c83434"/><rect x="1154" y="775.3" width="27" height="7.2" rx="3.6" fill="none" stroke="#c83434" stroke-width="0.8"/><rect x="1156.5" y="776.9" width="22.0" height="3.9" rx="0" fill="#c83434"/><rect x="1052.9" y="748" width="7.2" height="26" rx="3.6" fill="none" stroke="#c83434" stroke-width="0.8"/><rect x="1054.5" y="751.2" width="3.9" height="19.0" rx="0" fill="#c83434"/><rect x="1052.9" y="884" width="7.2" height="26" rx="3.6" fill="none" stroke="#c83434" stroke-width="0.8"/><rect x="1054.5" y="887.5" width="3.9" height="19.0" rx="0" fill="#c83434"/><rect x="1017" y="783.1" width="27" height="7.2" rx="3.6" fill="none" stroke="#c83434" stroke-width="0.8"/><rect x="1020.4" y="784.8" width="21.0" height="3.9" rx="0" fill="#c83434"/><rect x="1154" y="783.1" width="27" height="7.2" rx="3.6" fill="none" stroke="#c83434" stroke-width="0.8"/><rect x="1156.5" y="784.8" width="22.0" height="3.9" rx="0" fill="#c83434"/><rect x="1060.7" y="748" width="7.2" height="26" rx="3.6" fill="none" stroke="#c83434" stroke-width="0.8"/><rect x="1062.4" y="751.2" width="3.9" height="19.0" rx="0" fill="#c83434"/><rect x="1060.7" y="884" width="7.2" height="26" rx="3.6" fill="none" stroke="#c83434" stroke-width="0.8"/><rect x="1062.4" y="887.5" width="3.9" height="19.0" rx="0" fill="#c83434"/><rect x="1017" y="790.9" width="27" height="7.2" rx="3.6" fill="none" stroke="#c83434" stroke-width="0.8"/><rect x="1020.4" y="792.5" width="21.0" height="3.9" rx="0" fill="#c83434"/><rect x="1154" y="790.9" width="27" height="7.2" rx="3.6" fill="none" stroke="#c83434" stroke-width="0.8"/><rect x="1156.5" y="792.5" width="22.0" height="3.9" rx="0" fill="#c83434"/><rect x="1068.5" y="748" width="7.2" height="26" rx="3.6" fill="none" stroke="#c83434" stroke-width="0.8"/><rect x="1070.2" y="751.2" width="3.9" height="19.0" rx="0" fill="#c83434"/><rect x="1068.5" y="884" width="7.2" height="26" rx="3.6" fill="none" stroke="#c83434" stroke-width="0.8"/><rect x="1070.2" y="887.5" width="3.9" height="19.0" rx="0" fill="#c83434"/><rect x="1017" y="798.7" width="27" height="7.2" rx="3.6" fill="none" stroke="#c83434" stroke-width="0.8"/><rect x="1020.4" y="800.4" width="21.0" height="3.9" rx="0" fill="#c83434"/><rect x="1154" y="798.7" width="27" height="7.2" rx="3.6" fill="none" stroke="#c83434" stroke-width="0.8"/><rect x="1156.5" y="800.4" width="22.0" height="3.9" rx="0" fill="#c83434"/><rect x="1076.3" y="748" width="7.2" height="26" rx="3.6" fill="none" stroke="#c83434" stroke-width="0.8"/><rect x="1078.0" y="751.2" width="3.9" height="19.0" rx="0" fill="#c83434"/><rect x="1076.3" y="884" width="7.2" height="26" rx="3.6" fill="none" stroke="#c83434" stroke-width="0.8"/><rect x="1078.0" y="887.5" width="3.9" height="19.0" rx="0" fill="#c83434"/><rect x="1017" y="806.5" width="27" height="7.2" rx="3.6" fill="none" stroke="#c83434" stroke-width="0.8"/><rect x="1020.4" y="808.1" width="21.0" height="3.9" rx="0" fill="#c83434"/><rect x="1154" y="806.5" width="27" height="7.2" rx="3.6" fill="none" stroke="#c83434" stroke-width="0.8"/><rect x="1156.5" y="808.1" width="22.0" height="3.9" rx="0" fill="#c83434"/><rect x="1084.1" y="748" width="7.2" height="26" rx="3.6" fill="none" stroke="#c83434" stroke-width="0.8"/><rect x="1085.8" y="751.2" width="3.9" height="19.0" rx="0" fill="#c83434"/><rect x="1084.1" y="884" width="7.2" height="26" rx="3.6" fill="none" stroke="#c83434" stroke-width="0.8"/><rect x="1085.8" y="887.5" width="3.9" height="19.0" rx="0" fill="#c83434"/><rect x="1017" y="814.3" width="27" height="7.2" rx="3.6" fill="none" stroke="#c83434" stroke-width="0.8"/><rect x="1020.4" y="815.9" width="21.0" height="3.9" rx="0" fill="#c83434"/><rect x="1154" y="814.3" width="27" height="7.2" rx="3.6" fill="none" stroke="#c83434" stroke-width="0.8"/><rect x="1156.5" y="815.9" width="22.0" height="3.9" rx="0" fill="#c83434"/><rect x="1091.9" y="748" width="7.2" height="26" rx="3.6" fill="none" stroke="#c83434" stroke-width="0.8"/><rect x="1093.5" y="751.2" width="3.9" height="19.0" rx="0" fill="#c83434"/><rect x="1091.9" y="884" width="7.2" height="26" rx="3.6" fill="none" stroke="#c83434" stroke-width="0.8"/><rect x="1093.5" y="887.5" width="3.9" height="19.0" rx="0" fill="#c83434"/><rect x="1017" y="822.1" width="27" height="7.2" rx="3.6" fill="none" stroke="#c83434" stroke-width="0.8"/><rect x="1020.4" y="823.8" width="21.0" height="3.9" rx="0" fill="#c83434"/><rect x="1154" y="822.1" width="27" height="7.2" rx="3.6" fill="none" stroke="#c83434" stroke-width="0.8"/><rect x="1156.5" y="823.8" width="22.0" height="3.9" rx="0" fill="#c83434"/><rect x="1099.7" y="748" width="7.2" height="26" rx="3.6" fill="none" stroke="#c83434" stroke-width="0.8"/><rect x="1101.4" y="751.2" width="3.9" height="19.0" rx="0" fill="#c83434"/><rect x="1099.7" y="884" width="7.2" height="26" rx="3.6" fill="none" stroke="#c83434" stroke-width="0.8"/><rect x="1101.4" y="887.5" width="3.9" height="19.0" rx="0" fill="#c83434"/><rect x="1017" y="829.9" width="27" height="7.2" rx="3.6" fill="none" stroke="#c83434" stroke-width="0.8"/><rect x="1020.4" y="831.5" width="21.0" height="3.9" rx="0" fill="#c83434"/><rect x="1154" y="829.9" width="27" height="7.2" rx="3.6" fill="none" stroke="#c83434" stroke-width="0.8"/><rect x="1156.5" y="831.5" width="22.0" height="3.9" rx="0" fill="#c83434"/><rect x="1107.5" y="748" width="7.2" height="26" rx="3.6" fill="none" stroke="#c83434" stroke-width="0.8"/><rect x="1109.2" y="751.2" width="3.9" height="19.0" rx="0" fill="#c83434"/><rect x="1107.5" y="884" width="7.2" height="26" rx="3.6" fill="none" stroke="#c83434" stroke-width="0.8"/><rect x="1109.2" y="887.5" width="3.9" height="19.0" rx="0" fill="#c83434"/><rect x="1017" y="837.7" width="27" height="7.2" rx="3.6" fill="none" stroke="#c83434" stroke-width="0.8"/><rect x="1020.4" y="839.4" width="21.0" height="3.9" rx="0" fill="#c83434"/><rect x="1154" y="837.7" width="27" height="7.2" rx="3.6" fill="none" stroke="#c83434" stroke-width="0.8"/><rect x="1156.5" y="839.4" width="22.0" height="3.9" rx="0" fill="#c83434"/><rect x="1115.3" y="748" width="7.2" height="26" rx="3.6" fill="none" stroke="#c83434" stroke-width="0.8"/><rect x="1117.0" y="751.2" width="3.9" height="19.0" rx="0" fill="#c83434"/><rect x="1115.3" y="884" width="7.2" height="26" rx="3.6" fill="none" stroke="#c83434" stroke-width="0.8"/><rect x="1117.0" y="887.5" width="3.9" height="19.0" rx="0" fill="#c83434"/><rect x="1017" y="845.5" width="27" height="7.2" rx="3.6" fill="none" stroke="#c83434" stroke-width="0.8"/><rect x="1020.4" y="847.1" width="21.0" height="3.9" rx="0" fill="#c83434"/><rect x="1154" y="845.5" width="27" height="7.2" rx="3.6" fill="none" stroke="#c83434" stroke-width="0.8"/><rect x="1156.5" y="847.1" width="22.0" height="3.9" rx="0" fill="#c83434"/><rect x="1123.1" y="748" width="7.2" height="26" rx="3.6" fill="none" stroke="#c83434" stroke-width="0.8"/><rect x="1124.8" y="751.2" width="3.9" height="19.0" rx="0" fill="#c83434"/><rect x="1123.1" y="884" width="7.2" height="26" rx="3.6" fill="none" stroke="#c83434" stroke-width="0.8"/><rect x="1124.8" y="887.5" width="3.9" height="19.0" rx="0" fill="#c83434"/><rect x="1017" y="853.3" width="27" height="7.2" rx="3.6" fill="none" stroke="#c83434" stroke-width="0.8"/><rect x="1020.4" y="854.9" width="21.0" height="3.9" rx="0" fill="#c83434"/><rect x="1154" y="853.3" width="27" height="7.2" rx="3.6" fill="none" stroke="#c83434" stroke-width="0.8"/><rect x="1156.5" y="854.9" width="22.0" height="3.9" rx="0" fill="#c83434"/><rect x="1130.9" y="748" width="7.2" height="26" rx="3.6" fill="none" stroke="#c83434" stroke-width="0.8"/><rect x="1132.5" y="751.2" width="3.9" height="19.0" rx="0" fill="#c83434"/><rect x="1130.9" y="884" width="7.2" height="26" rx="3.6" fill="none" stroke="#c83434" stroke-width="0.8"/><rect x="1132.5" y="887.5" width="3.9" height="19.0" rx="0" fill="#c83434"/><rect x="1017" y="861.1" width="27" height="7.2" rx="3.6" fill="none" stroke="#c83434" stroke-width="0.8"/><rect x="1020.4" y="862.8" width="21.0" height="3.9" rx="0" fill="#c83434"/><rect x="1154" y="861.1" width="27" height="7.2" rx="3.6" fill="none" stroke="#c83434" stroke-width="0.8"/><rect x="1156.5" y="862.8" width="22.0" height="3.9" rx="0" fill="#c83434"/><rect x="1138.7" y="748" width="7.2" height="26" rx="3.6" fill="none" stroke="#c83434" stroke-width="0.8"/><rect x="1140.4" y="751.2" width="3.9" height="19.0" rx="0" fill="#c83434"/><rect x="1138.7" y="884" width="7.2" height="26" rx="3.6" fill="none" stroke="#c83434" stroke-width="0.8"/><rect x="1140.4" y="887.5" width="3.9" height="19.0" rx="0" fill="#c83434"/><rect x="1017" y="868.9" width="27" height="7.2" rx="3.6" fill="none" stroke="#c83434" stroke-width="0.8"/><rect x="1020.4" y="870.5" width="21.0" height="3.9" rx="0" fill="#c83434"/><rect x="1154" y="868.9" width="27" height="7.2" rx="3.6" fill="none" stroke="#c83434" stroke-width="0.8"/><rect x="1156.5" y="870.5" width="22.0" height="3.9" rx="0" fill="#c83434"/><rect x="1146.5" y="748" width="7.2" height="26" rx="3.6" fill="none" stroke="#c83434" stroke-width="0.8"/><rect x="1148.2" y="751.2" width="3.9" height="19.0" rx="0" fill="#c83434"/><rect x="1146.5" y="884" width="7.2" height="26" rx="3.6" fill="none" stroke="#c83434" stroke-width="0.8"/><rect x="1148.2" y="887.5" width="3.9" height="19.0" rx="0" fill="#c83434"/><rect x="1017" y="876.7" width="27" height="7.2" rx="3.6" fill="none" stroke="#c83434" stroke-width="0.8"/><rect x="1020.4" y="878.4" width="21.0" height="3.9" rx="0" fill="#c83434"/><rect x="1154" y="876.7" width="27" height="7.2" rx="3.6" fill="none" stroke="#c83434" stroke-width="0.8"/><rect x="1156.5" y="878.4" width="22.0" height="3.9" rx="0" fill="#c83434"/><rect x="1064.2" y="794.5" width="70.5" height="70" rx="4" fill="none" stroke="#c83434" stroke-width="1"/><rect x="1068.1" y="798.7" width="62.7" height="61.9" rx="0" fill="#c83434" stroke="none" stroke-width="0"/><text x="1099.4" y="824.0" font-family="Liberation Sans" font-size="24" fill="#f2c6c6" text-anchor="middle" font-weight="normal" opacity="1">57</text><text x="1099.4" y="855.0" font-family="Liberation Sans" font-size="18" fill="#f2c6c6" text-anchor="middle" font-weight="normal" opacity="1">GND</text><rect x="1041.3" y="944.7" width="79.7" height="67.3" rx="0" fill="none" stroke="#ff26e2" stroke-width="1.2"/><rect x="1043.3" y="945.2" width="36" height="32" rx="9" fill="none" stroke="#c83434" stroke-width="0.9"/><rect x="1048.3" y="949.2" width="26" height="24" rx="5" fill="#c83434"/><text x="1061.3" y="960.2" font-family="Liberation Sans" font-size="11" fill="#f0d0d0" text-anchor="middle" font-weight="normal" opacity="1">2</text><text x="1061.3" y="971.2" font-family="Liberation Sans" font-size="9" fill="#f0d0d0" text-anchor="middle" font-weight="normal" opacity="1">GND</text><rect x="1043.3" y="978.3" width="36" height="32" rx="9" fill="none" stroke="#c83434" stroke-width="0.9"/><rect x="1048.3" y="982.3" width="26" height="24" rx="5" fill="#c83434"/><text x="1061.3" y="993.3" font-family="Liberation Sans" font-size="11" fill="#f0d0d0" text-anchor="middle" font-weight="normal" opacity="1">3</text><text x="1061.3" y="1004.3" font-family="Liberation Sans" font-size="9" fill="#f0d0d0" text-anchor="middle" font-weight="normal" opacity="1">XIN</text><rect x="1086" y="945.2" width="36" height="32" rx="9" fill="none" stroke="#c83434" stroke-width="0.9"/><rect x="1091" y="949.2" width="26" height="24" rx="5" fill="#c83434"/><text x="1104.0" y="960.2" font-family="Liberation Sans" font-size="11" fill="#f0d0d0" text-anchor="middle" font-weight="normal" opacity="1">1</text><rect x="1086" y="978.3" width="36" height="32" rx="9" fill="none" stroke="#c83434" stroke-width="0.9"/><rect x="1091" y="982.3" width="26" height="24" rx="5" fill="#c83434"/><text x="1104.0" y="993.3" font-family="Liberation Sans" font-size="11" fill="#f0d0d0" text-anchor="middle" font-weight="normal" opacity="1">4</text><text x="1104.0" y="1004.3" font-family="Liberation Sans" font-size="9" fill="#f0d0d0" text-anchor="middle" font-weight="normal" opacity="1">GND</text><rect x="1023.1" y="961.7" width="15.0" height="15.0" rx="4.5" fill="none" stroke="#c83434" stroke-width="0.9"/><rect x="1025.6" y="964.2" width="10.0" height="10.0" rx="2" fill="#c83434"/><rect x="1023.1" y="979.9" width="15.0" height="15.0" rx="4.5" fill="none" stroke="#c83434" stroke-width="0.9"/><rect x="1025.6" y="982.4" width="10.0" height="10.0" rx="2" fill="#c83434"/><rect x="1021.6" y="961.2" width="18.0" height="34.2" rx="0" fill="none" stroke="#ff26e2" stroke-width="1"/><rect x="1126.5" y="960.5" width="15.0" height="15.0" rx="4.5" fill="none" stroke="#c83434" stroke-width="0.9"/><rect x="1129.0" y="963.0" width="10.0" height="10.0" rx="2" fill="#c83434"/><rect x="1126.5" y="979.5" width="15.0" height="15.0" rx="4.5" fill="none" stroke="#c83434" stroke-width="0.9"/><rect x="1129.0" y="982.0" width="10.0" height="10.0" rx="2" fill="#c83434"/><rect x="1125.0" y="960.0" width="18.0" height="35.0" rx="0" fill="none" stroke="#ff26e2" stroke-width="1"/><rect x="1125.5" y="922.5" width="15.0" height="15.0" rx="4.5" fill="none" stroke="#c83434" stroke-width="0.9"/><rect x="1128.0" y="925.0" width="10.0" height="10.0" rx="2" fill="#c83434"/><rect x="1125.5" y="938.5" width="15.0" height="15.0" rx="4.5" fill="none" stroke="#c83434" stroke-width="0.9"/><rect x="1128.0" y="941.0" width="10.0" height="10.0" rx="2" fill="#c83434"/><rect x="1124.0" y="922.0" width="18.0" height="32.0" rx="0" fill="none" stroke="#ff26e2" stroke-width="1"/><rect x="1147.0" y="922.5" width="15.0" height="15.0" rx="4.5" fill="none" stroke="#c83434" stroke-width="0.9"/><rect x="1149.5" y="925.0" width="10.0" height="10.0" rx="2" fill="#c83434"/><rect x="1147.0" y="938.5" width="15.0" height="15.0" rx="4.5" fill="none" stroke="#c83434" stroke-width="0.9"/><rect x="1149.5" y="941.0" width="10.0" height="10.0" rx="2" fill="#c83434"/><rect x="1145.5" y="922.0" width="18.0" height="32.0" rx="0" fill="none" stroke="#ff26e2" stroke-width="1"/><rect x="1083.7" y="924.9" width="15.0" height="15.0" rx="4.5" fill="none" stroke="#c83434" stroke-width="0.9"/><rect x="1086.2" y="927.4" width="10.0" height="10.0" rx="2" fill="#c83434"/><rect x="1099.7" y="924.9" width="15.0" height="15.0" rx="4.5" fill="none" stroke="#c83434" stroke-width="0.9"/><rect x="1102.2" y="927.4" width="10.0" height="10.0" rx="2" fill="#c83434"/><rect x="1083.2" y="923.4" width="32.0" height="18.0" rx="0" fill="none" stroke="#ff26e2" stroke-width="1"/><rect x="1015.1" y="1183.9" width="168.7" height="68.8" rx="0" fill="none" stroke="#ff26e2" stroke-width="1.2"/><path d="M1024.0,1192.4 L1174.0,1192.4 L1174.0,1242.3 L1037.0,1242.3 L1024.0,1231.0 Z" fill="none" stroke="#afafaf" stroke-width="2" stroke-linejoin="round" stroke-linecap="round"/><rect x="1028.8" y="1195.5" width="41" height="41" rx="3" fill="none" stroke="#c83434" stroke-width="1"/><rect x="1032.3" y="1199.0" width="34.0" height="34.0" rx="0" fill="#c83434"/><circle cx="1049.3" cy="1216.0" r="10.6" fill="#001023" stroke="#e8c22a" stroke-width="2.4"/><text x="1049.3" y="1214.0" font-family="Liberation Sans" font-size="15" fill="#d6d6d6" text-anchor="middle" font-weight="normal" opacity="0.9">1</text><text x="1049.3" y="1228.5" font-family="Liberation Mono" font-size="11" fill="rgba(255,232,232,0.78)" text-anchor="middle" textLength="27.25" lengthAdjust="spacingAndGlyphs" font-weight="normal" opacity="1">SWCLK</text><circle cx="1098.8" cy="1216.0" r="20.3" fill="none" stroke="#c83434" stroke-width="1"/><circle cx="1098.8" cy="1216.0" r="16.9" fill="#c83434" stroke="none" stroke-width="1"/><circle cx="1098.8" cy="1216.0" r="10.6" fill="#001023" stroke="#e8c22a" stroke-width="2.4"/><text x="1098.8" y="1214.0" font-family="Liberation Sans" font-size="15" fill="#d6d6d6" text-anchor="middle" font-weight="normal" opacity="0.9">2</text><text x="1098.8" y="1228.5" font-family="Liberation Mono" font-size="11" fill="rgba(255,232,232,0.78)" text-anchor="middle" textLength="16.35" lengthAdjust="spacingAndGlyphs" font-weight="normal" opacity="1">GND</text><circle cx="1148.3" cy="1216.0" r="20.3" fill="none" stroke="#c83434" stroke-width="1"/><circle cx="1148.3" cy="1216.0" r="16.9" fill="#c83434" stroke="none" stroke-width="1"/><circle cx="1148.3" cy="1216.0" r="10.6" fill="#001023" stroke="#e8c22a" stroke-width="2.4"/><text x="1148.3" y="1214.0" font-family="Liberation Sans" font-size="15" fill="#d6d6d6" text-anchor="middle" font-weight="normal" opacity="0.9">3</text><text x="1148.3" y="1228.5" font-family="Liberation Mono" font-size="11" fill="rgba(255,232,232,0.78)" text-anchor="middle" textLength="16.35" lengthAdjust="spacingAndGlyphs" font-weight="normal" opacity="1">SWD</text><text x="1017.9" y="423.4" font-family="Liberation Sans" font-size="9" fill="rgba(255,235,235,0.8)" text-anchor="middle" transform="rotate(-90 1017.9 423.4)" font-weight="normal" opacity="1">2</text><text x="1025.5" y="423.4" font-family="Liberation Sans" font-size="6.75" fill="rgba(255,235,235,0.75)" text-anchor="middle" transform="rotate(-90 1025.5 423.4)" font-weight="normal" opacity="1">GND</text><text x="1047.8" y="423.4" font-family="Liberation Sans" font-size="9" fill="rgba(255,235,235,0.8)" text-anchor="middle" transform="rotate(-90 1047.8 423.4)" font-weight="normal" opacity="1">1</text><text x="1055.5" y="423.4" font-family="Liberation Sans" font-size="6.75" fill="rgba(255,235,235,0.75)" text-anchor="middle" transform="rotate(-90 1055.5 423.4)" font-weight="normal" opacity="1">VBUS</text><text x="1035.8" y="536.0" font-family="Liberation Sans" font-size="9" fill="rgba(255,235,235,0.8)" text-anchor="middle" transform="rotate(-90 1035.8 536.0)" font-weight="normal" opacity="1">2</text><text x="1043.5" y="536.0" font-family="Liberation Sans" font-size="6.75" fill="rgba(255,235,235,0.75)" text-anchor="middle" transform="rotate(-90 1043.5 536.0)" font-weight="normal" opacity="1">GND</text><text x="1066.8" y="536.0" font-family="Liberation Sans" font-size="9" fill="rgba(255,235,235,0.8)" text-anchor="middle" transform="rotate(-90 1066.8 536.0)" font-weight="normal" opacity="1">1</text><text x="1074.5" y="536.0" font-family="Liberation Sans" font-size="6.75" fill="rgba(255,235,235,0.75)" text-anchor="middle" transform="rotate(-90 1074.5 536.0)" font-weight="normal" opacity="1">+3V3</text><text x="1050.8" y="459.0" font-family="Liberation Sans" font-size="9" fill="rgba(255,235,235,0.8)" text-anchor="middle" transform="rotate(-90 1050.8 459.0)" font-weight="normal" opacity="1">3</text><text x="1058.5" y="459.0" font-family="Liberation Sans" font-size="6.75" fill="rgba(255,235,235,0.75)" text-anchor="middle" transform="rotate(-90 1058.5 459.0)" font-weight="normal" opacity="1">VBUS</text><text x="1031.8" y="498.0" font-family="Liberation Sans" font-size="9" fill="rgba(255,235,235,0.8)" text-anchor="middle" transform="rotate(-90 1031.8 498.0)" font-weight="normal" opacity="1">1</text><text x="1039.5" y="498.0" font-family="Liberation Sans" font-size="6.75" fill="rgba(255,235,235,0.75)" text-anchor="middle" transform="rotate(-90 1039.5 498.0)" font-weight="normal" opacity="1">GND</text><text x="1069.8" y="498.0" font-family="Liberation Sans" font-size="9" fill="rgba(255,235,235,0.8)" text-anchor="middle" transform="rotate(-90 1069.8 498.0)" font-weight="normal" opacity="1">2</text><text x="1077.5" y="498.0" font-family="Liberation Sans" font-size="6.75" fill="rgba(255,235,235,0.75)" text-anchor="middle" transform="rotate(-90 1077.5 498.0)" font-weight="normal" opacity="1">+3V3</text><path d="M1070.3,415.5h6M1071.3,418.5h4" stroke="rgba(255,230,230,0.6)" stroke-width="0.8"/><path d="M1070.3,436.9h6M1071.3,439.9h4" stroke="rgba(255,230,230,0.6)" stroke-width="0.8"/><path d="M1123.0,415.5h6M1124.0,418.5h4" stroke="rgba(255,230,230,0.6)" stroke-width="0.8"/><path d="M1123.0,435.2h6M1124.0,438.2h4" stroke="rgba(255,230,230,0.6)" stroke-width="0.8"/><path d="M1002.9,640.1h6M1003.9,643.1h4" stroke="rgba(255,230,230,0.6)" stroke-width="0.8"/><path d="M1022.4,640.1h6M1023.4,643.1h4" stroke="rgba(255,230,230,0.6)" stroke-width="0.8"/><path d="M1042.6,640.1h6M1043.6,643.1h4" stroke="rgba(255,230,230,0.6)" stroke-width="0.8"/><path d="M1060.4,640.1h6M1061.4,643.1h4" stroke="rgba(255,230,230,0.6)" stroke-width="0.8"/><path d="M1096.4,661.8h6M1097.4,664.8h4" stroke="rgba(255,230,230,0.6)" stroke-width="0.8"/><path d="M1096.4,678.2h6M1097.4,681.2h4" stroke="rgba(255,230,230,0.6)" stroke-width="0.8"/><path d="M1115.8,661.8h6M1116.8,664.8h4" stroke="rgba(255,230,230,0.6)" stroke-width="0.8"/><path d="M1115.8,678.2h6M1116.8,681.2h4" stroke="rgba(255,230,230,0.6)" stroke-width="0.8"/><path d="M1135.3,648.3h6M1136.3,651.3h4" stroke="rgba(255,230,230,0.6)" stroke-width="0.8"/><path d="M1135.3,664.0h6M1136.3,667.0h4" stroke="rgba(255,230,230,0.6)" stroke-width="0.8"/><path d="M1109.0,711.1h6M1110.0,714.1h4" stroke="rgba(255,230,230,0.6)" stroke-width="0.8"/><path d="M1109.0,728.3h6M1110.0,731.3h4" stroke="rgba(255,230,230,0.6)" stroke-width="0.8"/><path d="M1130.0,711.1h6M1131.0,714.1h4" stroke="rgba(255,230,230,0.6)" stroke-width="0.8"/><path d="M1130.0,728.3h6M1131.0,731.3h4" stroke="rgba(255,230,230,0.6)" stroke-width="0.8"/><path d="M1148.7,718.5h6M1149.7,721.5h4" stroke="rgba(255,230,230,0.6)" stroke-width="0.8"/><path d="M1148.7,735.8h6M1149.7,738.8h4" stroke="rgba(255,230,230,0.6)" stroke-width="0.8"/><path d="M1168.2,723.1h6M1169.2,726.1h4" stroke="rgba(255,230,230,0.6)" stroke-width="0.8"/><path d="M1168.2,744.0h6M1169.2,747.0h4" stroke="rgba(255,230,230,0.6)" stroke-width="0.8"/><path d="M1001.0,757.5h6M1002.0,760.5h4" stroke="rgba(255,230,230,0.6)" stroke-width="0.8"/><path d="M1010.4,757.5h6M1011.4,760.5h4" stroke="rgba(255,230,230,0.6)" stroke-width="0.8"/><path d="M987.0,850.5h6M988.0,853.5h4" stroke="rgba(255,230,230,0.6)" stroke-width="0.8"/><path d="M1212.0,850.5h6M1213.0,853.5h4" stroke="rgba(255,230,230,0.6)" stroke-width="0.8"/><text x="1033.0" y="426.4" font-family="Liberation Sans" font-size="8" fill="#b0b0b0" text-anchor="middle" font-weight="normal" opacity="0.8">C1</text><text x="1052.0" y="539.0" font-family="Liberation Sans" font-size="8" fill="#b0b0b0" text-anchor="middle" font-weight="normal" opacity="0.8">C14</text><text x="1015.5" y="644.6" font-family="Liberation Sans" font-size="8" fill="#b0b0b0" text-anchor="middle" font-weight="normal" opacity="0.8">R7</text><text x="1054.5" y="644.6" font-family="Liberation Sans" font-size="8" fill="#b0b0b0" text-anchor="middle" font-weight="normal" opacity="0.8">C5</text><circle cx="993.4" cy="782.0" r="5.6" fill="#e8c22a" stroke="#c83434" stroke-width="1.4"/><circle cx="1008.3" cy="780.5" r="5.6" fill="#e8c22a" stroke="#c83434" stroke-width="1.4"/><circle cx="992.6" cy="798.0" r="5.6" fill="#e8c22a" stroke="#c83434" stroke-width="1.4"/><circle cx="1047.4" cy="856.0" r="5.6" fill="#e8c22a" stroke="#c83434" stroke-width="1.4"/><circle cx="1106.5" cy="747.0" r="5.6" fill="#e8c22a" stroke="#c83434" stroke-width="1.4"/><circle cx="1110.0" cy="877.9" r="5.6" fill="#e8c22a" stroke="#c83434" stroke-width="1.4"/><circle cx="1126.4" cy="876.6" r="5.6" fill="#e8c22a" stroke="#c83434" stroke-width="1.4"/><circle cx="1144.6" cy="875.0" r="5.6" fill="#e8c22a" stroke="#c83434" stroke-width="1.4"/><circle cx="1196.3" cy="782.0" r="5.6" fill="#e8c22a" stroke="#c83434" stroke-width="1.4"/><circle cx="1210.4" cy="790.0" r="5.6" fill="#e8c22a" stroke="#c83434" stroke-width="1.4"/><circle cx="1143.4" cy="633.3" r="5.6" fill="#e8c22a" stroke="#c83434" stroke-width="1.4"/><circle cx="1111.5" cy="696.0" r="5.6" fill="#e8c22a" stroke="#c83434" stroke-width="1.4"/><circle cx="1187.2" cy="723.2" r="5.6" fill="#e8c22a" stroke="#c83434" stroke-width="1.4"/><path d="M925,379 C990,345 1050,340 1014,363" fill="none" stroke="rgba(0,230,255,0.55)" stroke-width="0.9"/><path d="M1014,363 C1030,380 1040,400 1017,423" fill="none" stroke="rgba(0,230,255,0.55)" stroke-width="0.9"/><path d="M1017,423 C1060,450 1100,430 1126,437" fill="none" stroke="rgba(0,230,255,0.55)" stroke-width="0.9"/><path d="M1126,437 C1150,420 1170,400 1183,363" fill="none" stroke="rgba(0,230,255,0.55)" stroke-width="0.9"/><path d="M1183,363 C1220,360 1250,370 1272,380" fill="none" stroke="rgba(0,230,255,0.55)" stroke-width="0.9"/><path d="M1014,282 C1000,300 1010,340 1014,363" fill="none" stroke="rgba(0,230,255,0.55)" stroke-width="0.9"/><path d="M1183,282 C1170,310 1180,340 1183,363" fill="none" stroke="rgba(0,230,255,0.55)" stroke-width="0.9"/><path d="M1017,423 C1030,450 1035,470 1032,498" fill="none" stroke="rgba(0,230,255,0.55)" stroke-width="0.9"/><path d="M1032,498 C1040,520 1036,530 1036,536" fill="none" stroke="rgba(0,230,255,0.55)" stroke-width="0.9"/><path d="M1036,536 C1030,600 1040,660 1036,680" fill="none" stroke="rgba(0,230,255,0.55)" stroke-width="0.9"/><path d="M925,626 C960,650 1000,700 1018,690" fill="none" stroke="rgba(0,230,255,0.55)" stroke-width="0.9"/><path d="M1272,626 C1230,660 1200,720 1190,760" fill="none" stroke="rgba(0,230,255,0.55)" stroke-width="0.9"/><path d="M1099,640 C1120,700 1150,760 1160,800" fill="none" stroke="rgba(0,230,255,0.55)" stroke-width="0.9"/><path d="M1036,680 C1000,740 960,800 960,860" fill="none" stroke="rgba(0,230,255,0.55)" stroke-width="0.9"/><path d="M925,875 C990,860 1050,840 1099,830" fill="none" stroke="rgba(0,230,255,0.55)" stroke-width="0.9"/><path d="M1099,830 C1110,880 1100,930 1062,962" fill="none" stroke="rgba(0,230,255,0.55)" stroke-width="0.9"/><path d="M1062,962 C1075,975 1090,985 1104,995" fill="none" stroke="rgba(0,230,255,0.55)" stroke-width="0.9"/><path d="M1062,962 C1040,1000 960,1100 925,1122" fill="none" stroke="rgba(0,230,255,0.55)" stroke-width="0.9"/><path d="M925,1122 C980,1170 1050,1200 1099,1216" fill="none" stroke="rgba(0,230,255,0.55)" stroke-width="0.9"/><path d="M1272,1122 C1200,1080 1150,1010 1134,987" fill="none" stroke="rgba(0,230,255,0.55)" stroke-width="0.9"/><path d="M1134,987 C1110,960 1106,940 1106,930" fill="none" stroke="rgba(0,230,255,0.55)" stroke-width="0.9"/><path d="M1272,875 C1230,860 1210,840 1195,820" fill="none" stroke="rgba(0,230,255,0.55)" stroke-width="0.9"/><path d="M1030,740 C1070,780 1130,760 1160,790" fill="none" stroke="rgba(0,230,255,0.55)" stroke-width="0.9"/><path d="M1100,830 C1130,780 1140,760 1150,740" fill="none" stroke="rgba(0,230,255,0.55)" stroke-width="0.9"/></svg>
<!-- right toolbar -->
<div id="rtb" class="a"></div>
<div id="rgap" class="a"></div>
<div class="hl" style="left:2215px;top:136px;width:30px;height:30px"></div>
<svg class="a" style="left:2221px;top:142px" width="18" height="18" viewBox="0 0 18 18"><path d="M4 2v14l3.5-3.5 3 5.5 2-1-3-5.5H15z" fill="#4f4f4f"/></svg>
<svg class="a" style="left:2218px;top:171px" width="24" height="24" viewBox="0 0 24 24"><path d="M1 1l22 22M23 1L1 23" stroke="#4f4f4f" stroke-width="1"/><circle cx="12" cy="12" r="2.5" fill="#fff" stroke="#4f4f4f"/></svg>
<div class="a" style="left:2220px;top:203px;width:20px;height:1px;background:#c8c8c8"></div>
<svg class="a" style="left:2218px;top:212px" width="24" height="24" viewBox="0 0 24 24"><path d="M1 5h22v7q-1.5 1 0 2.5V21H1v-6.5q1.5-1.5 0-2.5z" fill="none" stroke="#333" stroke-width="0.9"/><rect x="3" y="2" width="4" height="5" fill="#1a82d4"/><rect x="10" y="2" width="4" height="5" fill="#1a82d4"/><rect x="17" y="2" width="4" height="5" fill="#1a82d4"/><rect x="3" y="18" width="4" height="5" fill="#1a82d4"/><rect x="10" y="18" width="4" height="5" fill="#1a82d4"/><rect x="17" y="18" width="4" height="5" fill="#1a82d4"/></svg>
<svg class="a" style="left:2218px;top:245px" width="26" height="26" viewBox="0 0 26 26"><path d="M2 23l4-10h8l7-11" fill="none" stroke="#1a82d4" stroke-width="2"/><path d="M19 25h6v-6z" fill="#333"/></svg>
<svg class="a" style="left:2218px;top:278px" width="26" height="26" viewBox="0 0 26 26"><path d="M1 12h8q2 0 3-3 1-3 3 0t3 3h6M1 16h22" fill="none" stroke="#1a82d4" stroke-width="2"/><path d="M19 25h6v-6z" fill="#333"/></svg>
<svg class="a" style="left:2222px;top:312px" width="16" height="16" viewBox="0 0 16 16"><circle cx="8" cy="8" r="5.5" fill="none" stroke="#f0a030" stroke-width="3.4"/></svg>
<svg class="a" style="left:2220px;top:341px" width="22" height="22" viewBox="0 0 22 22"><path d="M2 20V11h5V2h15v18z" fill="#1a82d4"/><circle cx="15" cy="11" r="3" fill="#fff"/><circle cx="15" cy="11" r="1.5" fill="#1a82d4"/><path d="M15 11h7" stroke="#fff" stroke-width="1"/></svg>
<svg class="a" style="left:2220px;top:374px" width="22" height="22" viewBox="0 0 22 22"><defs><pattern id="hp" width="4" height="4" patternUnits="userSpaceOnUse" patternTransform="rotate(45)"><rect width="2" height="4" fill="#333"/></pattern></defs><path d="M2 20V10h7V2h12v18z" fill="url(#hp)" stroke="#333" stroke-width="1.4"/></svg>
<div class="a" style="left:2220px;top:404px;width:20px;height:1px;background:#c8c8c8"></div>
<svg class="a" style="left:2219px;top:414px" width="22" height="22" viewBox="0 0 22 22"><path d="M2 20L20 2" stroke="#4f4f4f" stroke-width="1.8"/></svg>
<svg class="a" style="left:2219px;top:446px" width="22" height="22" viewBox="0 0 22 22"><path d="M2 20q0-17 18-18" fill="none" stroke="#4f4f4f" stroke-width="1.8"/></svg>
<svg class="a" style="left:2219px;top:479px" width="22" height="22" viewBox="0 0 22 22"><rect x="1.5" y="1.5" width="19" height="17" fill="#bbb" stroke="#4f4f4f" stroke-width="1.8"/></svg>
<svg class="a" style="left:2219px;top:510px" width="22" height="22" viewBox="0 0 22 22"><circle cx="11" cy="11" r="9.5" fill="#bbb" stroke="#4f4f4f" stroke-width="1.8"/></svg>
<svg class="a" style="left:2219px;top:542px" width="22" height="22" viewBox="0 0 22 22"><path d="M1 2l19 4-2 11-17 4 7-10z" fill="#bbb" stroke="#4f4f4f" stroke-width="1.8" stroke-linejoin="round"/></svg>
<svg class="a" style="left:2219px;top:574px" width="22" height="22" viewBox="0 0 22 22"><path d="M4 20q-1-9 7-9t7-10" fill="none" stroke="#4f4f4f" stroke-width="1.4"/><path d="M1 11h20" stroke="#1a82d4" stroke-width="1.6"/><rect x="0" y="9.5" width="3" height="3" fill="#1a82d4"/><rect x="18" y="9.5" width="3" height="3" fill="#1a82d4"/><circle cx="11" cy="11" r="1.5" fill="#fff" stroke="#1a82d4"/></svg>
<svg class="a" style="left:2219px;top:606px" width="22" height="22" viewBox="0 0 22 22"><rect x="0" y="0" width="22" height="22" rx="3" fill="#4f4f4f"/><path d="M3 18l6-8 4 5 2-2 4 5z" fill="#fff"/><circle cx="15" cy="6" r="2.5" fill="#fff"/></svg>
<svg class="a" style="left:2220px;top:638px" width="22" height="22" viewBox="0 0 22 22"><path d="M2 2h17M10.5 2v19" stroke="#4f4f4f" stroke-width="3.2"/></svg>
<svg class="a" style="left:2219px;top:670px" width="22" height="22" viewBox="0 0 22 22"><rect x="1" y="1" width="19" height="17" fill="#bbb" stroke="#4f4f4f" stroke-width="1.8"/><path d="M4.5 6h12M4.5 9.5h12M4.5 13h8" stroke="#4f4f4f" stroke-width="1.2"/></svg>
<svg class="a" style="left:2218px;top:700px" width="24" height="25" viewBox="0 0 24 25"><rect x="0.5" y="0.5" width="23" height="23" fill="#fff" stroke="#4f4f4f"/><rect x="0.5" y="0.5" width="23" height="5.5" fill="#aaa" stroke="#4f4f4f"/><path d="M8 0v24M16 0v24M0 12h24M0 18h24" stroke="#4f4f4f" stroke-width="0.9"/></svg>
<svg class="a" style="left:2218px;top:733px" width="26" height="27" viewBox="0 0 26 27"><path d="M3 3.5h19M7 20.5h15" stroke="#4f4f4f" stroke-width="1.2"/><path d="M19 5v14" stroke="#4f4f4f" stroke-width="0.9"/><path d="M17.5 7l1.5-2 1.5 2M17.5 17l1.5 2 1.5-2" fill="none" stroke="#4f4f4f"/><circle cx="3" cy="3.5" r="2.6" fill="#1a82d4"/><circle cx="11.5" cy="20.5" r="2.6" fill="#1a82d4"/><path d="M19 26h7v-7z" fill="#333"/></svg>
<svg class="a" style="left:2218px;top:765px" width="24" height="24" viewBox="0 0 24 24"><path d="M1 0v13l3-3 3 6 2-1-3-5.5h5z" fill="#4f4f4f"/><circle cx="14" cy="15" r="7.5" fill="#c8203a"/><path d="M11 12l6 6M17 12l-6 6" stroke="#fff" stroke-width="2"/></svg>
<div class="a" style="left:2220px;top:797px;width:20px;height:1px;background:#c8c8c8"></div>
<svg class="a" style="left:2218px;top:806px" width="26" height="27" viewBox="0 0 26 27"><circle cx="2" cy="2" r="1.2" fill="#4f4f4f"/><circle cx="2" cy="8" r="1.2" fill="#4f4f4f"/><circle cx="2" cy="14" r="1.2" fill="#4f4f4f"/><circle cx="2" cy="20" r="1.2" fill="#4f4f4f"/><circle cx="8" cy="2" r="1.2" fill="#4f4f4f"/><circle cx="8" cy="8" r="1.2" fill="#4f4f4f"/><circle cx="8" cy="14" r="1.2" fill="#4f4f4f"/><circle cx="8" cy="20" r="1.2" fill="#4f4f4f"/><circle cx="14" cy="2" r="1.2" fill="#4f4f4f"/><circle cx="14" cy="8" r="1.2" fill="#4f4f4f"/><circle cx="14" cy="14" r="1.2" fill="#4f4f4f"/><circle cx="14" cy="20" r="1.2" fill="#4f4f4f"/><circle cx="20" cy="2" r="1.2" fill="#4f4f4f"/><circle cx="20" cy="8" r="1.2" fill="#4f4f4f"/><circle cx="20" cy="14" r="1.2" fill="#4f4f4f"/><circle cx="20" cy="20" r="1.2" fill="#4f4f4f"/><path d="M8 1v22M1 14h22" stroke="#4f4f4f" stroke-width="0.5"/><path d="M2.5 14h11M8 8.5v11" stroke="#1a82d4" stroke-width="2"/><path d="M19 26h7v-7z" fill="#333"/></svg>
<svg class="a" style="left:2219px;top:838px" width="23" height="23" viewBox="0 0 23 23"><path d="M1 17L16 2l5.5 5.5-15 15z" fill="none" stroke="#4f4f4f" stroke-width="1.8"/><path d="M6 12l2 2M9.5 8.5l2.5 2.5M13 5l2 2" stroke="#4f4f4f" stroke-width="1.3"/></svg>
<div id="panel" class="a"></div>
<div class="a" style="left:2252px;top:131px;width:239px;height:17px;background:#c4c4c4"></div>
<div class="t" style="left:2255px;top:133px;font-size:11.5px;color:#3c3c3c">Appearance</div>
<div class="a" style="left:2252px;top:148px;width:239px;height:6px;background:#ececec"></div>
<div class="a" style="left:2252px;top:153px;width:239px;height:906px;background:#fff;border:1px solid #d6d6d6"></div>
<div class="a" style="left:2253px;top:154px;width:237px;height:36px;background:#ececec;border-bottom:1px solid #d6d6d6"></div>
<div class="t" style="left:2273px;top:165px;font-size:14px;color:#3c3c3c">Layers</div>
<div class="t" style="left:2347px;top:165px;font-size:14px;color:#3c3c3c">Objects</div>
<div class="t" style="left:2430px;top:165px;font-size:14px;color:#3c3c3c">Nets</div>
<div class="a" style="left:2261px;top:188px;width:66px;height:3px;background:#e95420"></div>
<div class="a" style="left:2253px;top:191px;width:237px;height:19px;background:#efefef"></div>
<svg class="a" style="left:2258px;top:195px" width="6" height="11"><path d="M0 0l5.5 5.5L0 11z" fill="#3a3af0"/></svg>
<div class="sw" style="top:194px;height:14px;background:#c83434"></div>
<svg class="a" style="left:2291px;top:193px" width="16" height="16" viewBox="0 0 16 16"><circle cx="8" cy="8" r="7.9" fill="#4d4d4d"/><path d="M2.3 8q5.7-6.2 11.4 0q-5.7 6.2-11.4 0z" fill="#fafafa"/><circle cx="8" cy="8" r="2" fill="none" stroke="#4d4d4d" stroke-width="1"/></svg>
<div class="lyr" style="top:194px">F.Cu</div>
<div class="sw" style="top:213px;height:14px;background:#4d7fc4"></div>
<svg class="a" style="left:2291px;top:212px" width="16" height="16" viewBox="0 0 16 16"><circle cx="8" cy="8" r="7.9" fill="#4d4d4d"/><path d="M2.3 8q5.7-6.2 11.4 0q-5.7 6.2-11.4 0z" fill="#fafafa"/><circle cx="8" cy="8" r="2" fill="none" stroke="#4d4d4d" stroke-width="1"/></svg>
<div class="lyr" style="top:213px">B.Cu</div>
<div class="sw" style="top:232px;height:14px;background:#84008c"></div>
<svg class="a" style="left:2291px;top:231px" width="16" height="16" viewBox="0 0 16 16"><circle cx="8" cy="8" r="7.9" fill="#4d4d4d"/><path d="M2.3 8q5.7-6.2 11.4 0q-5.7 6.2-11.4 0z" fill="#fafafa"/><circle cx="8" cy="8" r="2" fill="none" stroke="#4d4d4d" stroke-width="1"/></svg>
<div class="lyr" style="top:232px">F.Adhesive</div>
<div class="sw" style="top:251px;height:14px;background:#000085"></div>
<svg class="a" style="left:2291px;top:250px" width="16" height="16" viewBox="0 0 16 16"><circle cx="8" cy="8" r="7.9" fill="#4d4d4d"/><path d="M2.3 8q5.7-6.2 11.4 0q-5.7 6.2-11.4 0z" fill="#fafafa"/><circle cx="8" cy="8" r="2" fill="none" stroke="#4d4d4d" stroke-width="1"/></svg>
<div class="lyr" style="top:251px">B.Adhesive</div>
<div class="sw" style="top:270px;height:14px;background:#a0928c"></div>
<svg class="a" style="left:2291px;top:269px" width="16" height="16" viewBox="0 0 16 16"><circle cx="8" cy="8" r="7.9" fill="#4d4d4d"/><path d="M2.3 8q5.7-6.2 11.4 0q-5.7 6.2-11.4 0z" fill="#fafafa"/><circle cx="8" cy="8" r="2" fill="none" stroke="#4d4d4d" stroke-width="1"/></svg>
<div class="lyr" style="top:270px">F.Paste</div>
<div class="sw" style="top:289px;height:14px;background:#00c2c2"></div>
<svg class="a" style="left:2291px;top:288px" width="16" height="16" viewBox="0 0 16 16"><circle cx="8" cy="8" r="7.9" fill="#4d4d4d"/><path d="M2.3 8q5.7-6.2 11.4 0q-5.7 6.2-11.4 0z" fill="#fafafa"/><circle cx="8" cy="8" r="2" fill="none" stroke="#4d4d4d" stroke-width="1"/></svg>
<div class="lyr" style="top:289px">B.Paste</div>
<div class="sw" style="top:308px;height:14px;background:#f2eda1"></div>
<svg class="a" style="left:2291px;top:307px" width="16" height="16" viewBox="0 0 16 16"><circle cx="8" cy="8" r="7.5" fill="#c4c4c4"/><circle cx="8" cy="8" r="5.3" fill="#e4e4e4"/><path d="M4.5 11.5l7-7" stroke="#333" stroke-width="1.1"/></svg>
<div class="lyr" style="top:308px">F.Silkscreen</div>
<div class="sw" style="top:327px;height:14px;background:#e8b2a7"></div>
<svg class="a" style="left:2291px;top:326px" width="16" height="16" viewBox="0 0 16 16"><circle cx="8" cy="8" r="7.5" fill="#c4c4c4"/><circle cx="8" cy="8" r="5.3" fill="#e4e4e4"/><path d="M4.5 11.5l7-7" stroke="#333" stroke-width="1.1"/></svg>
<div class="lyr" style="top:327px">B.Silkscreen</div>
<div class="sw" style="top:346px;height:14px;background:conic-gradient(#52235f 25%,#6e3d7e 0 50%,#52235f 0 75%,#6e3d7e 0) 0 0/11px 14px"></div>
<svg class="a" style="left:2291px;top:345px" width="16" height="16" viewBox="0 0 16 16"><circle cx="8" cy="8" r="7.9" fill="#4d4d4d"/><path d="M2.3 8q5.7-6.2 11.4 0q-5.7 6.2-11.4 0z" fill="#fafafa"/><circle cx="8" cy="8" r="2" fill="none" stroke="#4d4d4d" stroke-width="1"/></svg>
<div class="lyr" style="top:346px">F.Mask</div>
<div class="sw" style="top:365px;height:14px;background:conic-gradient(#006058 25%,#177b72 0 50%,#006058 0 75%,#177b72 0) 0 0/11px 14px"></div>
<svg class="a" style="left:2291px;top:364px" width="16" height="16" viewBox="0 0 16 16"><circle cx="8" cy="8" r="7.9" fill="#4d4d4d"/><path d="M2.3 8q5.7-6.2 11.4 0q-5.7 6.2-11.4 0z" fill="#fafafa"/><circle cx="8" cy="8" r="2" fill="none" stroke="#4d4d4d" stroke-width="1"/></svg>
<div class="lyr" style="top:365px">B.Mask</div>
<div class="sw" style="top:384px;height:14px;background:#c2c2c2"></div>
<svg class="a" style="left:2291px;top:383px" width="16" height="16" viewBox="0 0 16 16"><circle cx="8" cy="8" r="7.9" fill="#4d4d4d"/><path d="M2.3 8q5.7-6.2 11.4 0q-5.7 6.2-11.4 0z" fill="#fafafa"/><circle cx="8" cy="8" r="2" fill="none" stroke="#4d4d4d" stroke-width="1"/></svg>
<div class="lyr" style="top:384px">User.Drawings</div>
<div class="sw" style="top:403px;height:14px;background:#5990d8"></div>
<svg class="a" style="left:2291px;top:402px" width="16" height="16" viewBox="0 0 16 16"><circle cx="8" cy="8" r="7.9" fill="#4d4d4d"/><path d="M2.3 8q5.7-6.2 11.4 0q-5.7 6.2-11.4 0z" fill="#fafafa"/><circle cx="8" cy="8" r="2" fill="none" stroke="#4d4d4d" stroke-width="1"/></svg>
<div class="lyr" style="top:403px">User.Comments</div>
<div class="sw" style="top:422px;height:14px;background:#b4dbd2"></div>
<svg class="a" style="left:2291px;top:421px" width="16" height="16" viewBox="0 0 16 16"><circle cx="8" cy="8" r="7.9" fill="#4d4d4d"/><path d="M2.3 8q5.7-6.2 11.4 0q-5.7 6.2-11.4 0z" fill="#fafafa"/><circle cx="8" cy="8" r="2" fill="none" stroke="#4d4d4d" stroke-width="1"/></svg>
<div class="lyr" style="top:422px">User.Eco1</div>
<div class="sw" style="top:441px;height:14px;background:#d8c852"></div>
<svg class="a" style="left:2291px;top:440px" width="16" height="16" viewBox="0 0 16 16"><circle cx="8" cy="8" r="7.9" fill="#4d4d4d"/><path d="M2.3 8q5.7-6.2 11.4 0q-5.7 6.2-11.4 0z" fill="#fafafa"/><circle cx="8" cy="8" r="2" fill="none" stroke="#4d4d4d" stroke-width="1"/></svg>
<div class="lyr" style="top:441px">User.Eco2</div>
<div class="sw" style="top:460px;height:14px;background:#d0d2cd"></div>
<svg class="a" style="left:2291px;top:459px" width="16" height="16" viewBox="0 0 16 16"><circle cx="8" cy="8" r="7.9" fill="#4d4d4d"/><path d="M2.3 8q5.7-6.2 11.4 0q-5.7 6.2-11.4 0z" fill="#fafafa"/><circle cx="8" cy="8" r="2" fill="none" stroke="#4d4d4d" stroke-width="1"/></svg>
<div class="lyr" style="top:460px">Edge.Cuts</div>
<div class="sw" style="top:479px;height:14px;background:#ff26e2"></div>
<svg class="a" style="left:2291px;top:478px" width="16" height="16" viewBox="0 0 16 16"><circle cx="8" cy="8" r="7.9" fill="#4d4d4d"/><path d="M2.3 8q5.7-6.2 11.4 0q-5.7 6.2-11.4 0z" fill="#fafafa"/><circle cx="8" cy="8" r="2" fill="none" stroke="#4d4d4d" stroke-width="1"/></svg>
<div class="lyr" style="top:479px">Margin</div>
<div class="sw" style="top:498px;height:14px;background:#ff26e2"></div>
<svg class="a" style="left:2291px;top:497px" width="16" height="16" viewBox="0 0 16 16"><circle cx="8" cy="8" r="7.9" fill="#4d4d4d"/><path d="M2.3 8q5.7-6.2 11.4 0q-5.7 6.2-11.4 0z" fill="#fafafa"/><circle cx="8" cy="8" r="2" fill="none" stroke="#4d4d4d" stroke-width="1"/></svg>
<div class="lyr" style="top:498px">F.Courtyard</div>
<div class="sw" style="top:517px;height:14px;background:#26e9ff"></div>
<svg class="a" style="left:2291px;top:516px" width="16" height="16" viewBox="0 0 16 16"><circle cx="8" cy="8" r="7.9" fill="#4d4d4d"/><path d="M2.3 8q5.7-6.2 11.4 0q-5.7 6.2-11.4 0z" fill="#fafafa"/><circle cx="8" cy="8" r="2" fill="none" stroke="#4d4d4d" stroke-width="1"/></svg>
<div class="lyr" style="top:517px">B.Courtyard</div>
<div class="sw" style="top:536px;height:14px;background:#afafaf"></div>
<svg class="a" style="left:2291px;top:535px" width="16" height="16" viewBox="0 0 16 16"><circle cx="8" cy="8" r="7.9" fill="#4d4d4d"/><path d="M2.3 8q5.7-6.2 11.4 0q-5.7 6.2-11.4 0z" fill="#fafafa"/><circle cx="8" cy="8" r="2" fill="none" stroke="#4d4d4d" stroke-width="1"/></svg>
<div class="lyr" style="top:536px">F.Fab</div>
<div class="sw" style="top:555px;height:14px;background:#585d84"></div>
<svg class="a" style="left:2291px;top:554px" width="16" height="16" viewBox="0 0 16 16"><circle cx="8" cy="8" r="7.9" fill="#4d4d4d"/><path d="M2.3 8q5.7-6.2 11.4 0q-5.7 6.2-11.4 0z" fill="#fafafa"/><circle cx="8" cy="8" r="2" fill="none" stroke="#4d4d4d" stroke-width="1"/></svg>
<div class="lyr" style="top:555px">B.Fab</div>
<div class="sw" style="top:574px;height:14px;background:#c2c2c2"></div>
<svg class="a" style="left:2291px;top:573px" width="16" height="16" viewBox="0 0 16 16"><circle cx="8" cy="8" r="7.9" fill="#4d4d4d"/><path d="M2.3 8q5.7-6.2 11.4 0q-5.7 6.2-11.4 0z" fill="#fafafa"/><circle cx="8" cy="8" r="2" fill="none" stroke="#4d4d4d" stroke-width="1"/></svg>
<div class="lyr" style="top:574px">User.1</div>
<div class="sw" style="top:593px;height:14px;background:#5990d8"></div>
<svg class="a" style="left:2291px;top:592px" width="16" height="16" viewBox="0 0 16 16"><circle cx="8" cy="8" r="7.9" fill="#4d4d4d"/><path d="M2.3 8q5.7-6.2 11.4 0q-5.7 6.2-11.4 0z" fill="#fafafa"/><circle cx="8" cy="8" r="2" fill="none" stroke="#4d4d4d" stroke-width="1"/></svg>
<div class="lyr" style="top:593px">User.2</div>
<div class="sw" style="top:612px;height:14px;background:#b4dbd2"></div>
<svg class="a" style="left:2291px;top:611px" width="16" height="16" viewBox="0 0 16 16"><circle cx="8" cy="8" r="7.9" fill="#4d4d4d"/><path d="M2.3 8q5.7-6.2 11.4 0q-5.7 6.2-11.4 0z" fill="#fafafa"/><circle cx="8" cy="8" r="2" fill="none" stroke="#4d4d4d" stroke-width="1"/></svg>
<div class="lyr" style="top:612px">User.3</div>
<div class="sw" style="top:631px;height:14px;background:#d8c852"></div>
<svg class="a" style="left:2291px;top:630px" width="16" height="16" viewBox="0 0 16 16"><circle cx="8" cy="8" r="7.9" fill="#4d4d4d"/><path d="M2.3 8q5.7-6.2 11.4 0q-5.7 6.2-11.4 0z" fill="#fafafa"/><circle cx="8" cy="8" r="2" fill="none" stroke="#4d4d4d" stroke-width="1"/></svg>
<div class="lyr" style="top:631px">User.4</div>
<svg class="a" style="left:2266px;top:1042px" width="6" height="11"><path d="M0 0l5 5.5L0 11z" fill="#222"/></svg>
<div class="t" style="left:2274px;top:1041px;font-size:13px;color:#222">Layer Display Options</div>
<div class="a" style="left:2252px;top:1059px;width:239px;height:127px;background:#ececec"></div>
<div class="t" style="left:2259px;top:1073px;font-size:13px;color:#3c3c3c">Presets (Ctrl+Tab):</div>
<div class="a" style="left:2259px;top:1091px;width:225px;height:33px;background:#fff;border:1px solid #d4d4d4;border-radius:6px"></div>
<div class="t" style="left:2271px;top:1101px;font-size:13px;color:#333">---</div>
<svg class="a" style="left:2460px;top:1104px" width="12" height="8"><path d="M1 1.5l5 5 5-5" fill="none" stroke="#3c3c3c" stroke-width="1.3"/></svg>
<div class="t" style="left:2259px;top:1130px;font-size:13px;color:#3c3c3c">Viewports (Shift+Tab):</div>
<div class="a" style="left:2259px;top:1147px;width:225px;height:33px;background:#fff;border:1px solid #d4d4d4;border-radius:6px"></div>
<div class="t" style="left:2271px;top:1158px;font-size:13px;color:#333">---</div>
<svg class="a" style="left:2460px;top:1161px" width="12" height="8"><path d="M1 1.5l5 5 5-5" fill="none" stroke="#3c3c3c" stroke-width="1.3"/></svg>
<div class="a" style="left:2252px;top:1186px;width:239px;height:6px;background:#fafafa"></div>
<div class="a" style="left:2252px;top:1192px;width:239px;height:17px;background:#c4c4c4"></div>
<div class="t" style="left:2255px;top:1194px;font-size:11.5px;color:#3c3c3c">Selection Filter</div>
<div class="a" style="left:2252px;top:1209px;width:239px;height:135px;background:#ececec"></div>
<div class="cb" style="left:2261px;top:1216px"><svg width="16" height="16" style="position:absolute;left:0;top:0"><path d="M3.5 8.5l3 3 6-6.5" fill="none" stroke="#fff" stroke-width="1.8"/></svg></div>
<div class="cbl" style="left:2281px;top:1217px">All items</div>
<div class="cb" style="left:2369px;top:1216px;background:#fff;border:1px solid #bbb"></div>
<div class="cbl" style="left:2389px;top:1217px">Locked items</div>
<div class="cb" style="left:2261px;top:1237px"><svg width="16" height="16" style="position:absolute;left:0;top:0"><path d="M3.5 8.5l3 3 6-6.5" fill="none" stroke="#fff" stroke-width="1.8"/></svg></div>
<div class="cbl" style="left:2281px;top:1238px">Footprints</div>
<div class="cb" style="left:2369px;top:1237px"><svg width="16" height="16" style="position:absolute;left:0;top:0"><path d="M3.5 8.5l3 3 6-6.5" fill="none" stroke="#fff" stroke-width="1.8"/></svg></div>
<div class="cbl" style="left:2389px;top:1238px">Text</div>
<div class="cb" style="left:2261px;top:1258px"><svg width="16" height="16" style="position:absolute;left:0;top:0"><path d="M3.5 8.5l3 3 6-6.5" fill="none" stroke="#fff" stroke-width="1.8"/></svg></div>
<div class="cbl" style="left:2281px;top:1259px">Tracks</div>
<div class="cb" style="left:2369px;top:1258px"><svg width="16" height="16" style="position:absolute;left:0;top:0"><path d="M3.5 8.5l3 3 6-6.5" fill="none" stroke="#fff" stroke-width="1.8"/></svg></div>
<div class="cbl" style="left:2389px;top:1259px">Vias</div>
<div class="cb" style="left:2261px;top:1279px"><svg width="16" height="16" style="position:absolute;left:0;top:0"><path d="M3.5 8.5l3 3 6-6.5" fill="none" stroke="#fff" stroke-width="1.8"/></svg></div>
<div class="cbl" style="left:2281px;top:1280px">Pads</div>
<div class="cb" style="left:2369px;top:1279px"><svg width="16" height="16" style="position:absolute;left:0;top:0"><path d="M3.5 8.5l3 3 6-6.5" fill="none" stroke="#fff" stroke-width="1.8"/></svg></div>
<div class="cbl" style="left:2389px;top:1280px">Graphics</div>
<div class="cb" style="left:2261px;top:1300px"><svg width="16" height="16" style="position:absolute;left:0;top:0"><path d="M3.5 8.5l3 3 6-6.5" fill="none" stroke="#fff" stroke-width="1.8"/></svg></div>
<div class="cbl" style="left:2281px;top:1301px">Zones</div>
<div class="cb" style="left:2369px;top:1300px"><svg width="16" height="16" style="position:absolute;left:0;top:0"><path d="M3.5 8.5l3 3 6-6.5" fill="none" stroke="#fff" stroke-width="1.8"/></svg></div>
<div class="cbl" style="left:2389px;top:1301px">Rule Areas</div>
<div class="cb" style="left:2261px;top:1321px"><svg width="16" height="16" style="position:absolute;left:0;top:0"><path d="M3.5 8.5l3 3 6-6.5" fill="none" stroke="#fff" stroke-width="1.8"/></svg></div>
<div class="cbl" style="left:2281px;top:1322px">Dimensions</div>
<div class="cb" style="left:2369px;top:1321px"><svg width="16" height="16" style="position:absolute;left:0;top:0"><path d="M3.5 8.5l3 3 6-6.5" fill="none" stroke="#fff" stroke-width="1.8"/></svg></div>
<div class="cbl" style="left:2389px;top:1322px">Other items</div>
<div id="msgp" class="a"></div>
<div id="status" class="a"></div>
<div class="mp" style="left:11px;top:1347px">Pads</div>
<div class="mp" style="left:11px;top:1365px">193</div>
<div class="mp" style="left:75px;top:1347px">Vias</div>
<div class="mp" style="left:75px;top:1365px">13</div>
<div class="mp" style="left:136px;top:1347px">Track Segments</div>
<div class="mp" style="left:136px;top:1365px">350</div>
<div class="mp" style="left:272px;top:1347px">Nets</div>
<div class="mp" style="left:272px;top:1365px">53</div>
<div class="mp" style="left:334px;top:1347px">Unrouted</div>
<div class="mp" style="left:334px;top:1365px">48</div>
<div class="st" style="left:2px;font-size:15px;top:1385px">File '/home/kai/projects/pcbs/working/devboard/PCB_DESIGN/devboard.kicad_pcb' saved.</div>
<div class="st" style="left:1260px;white-space:pre">Z 5.44</div>
<div class="st" style="left:1345px;white-space:pre">X 127.6000  Y 44.9700</div>
<div class="st" style="left:1536px;white-space:pre">dx 127.6000  dy 44.9700  dist 135.2925</div>
<div class="st" style="left:1843px;white-space:pre">grid 0.0100</div>
<div class="st" style="left:2065px;white-space:pre">mm</div>
<div class="st" style="left:2131px;white-space:pre">Select item(s)</div>
</body></html>
